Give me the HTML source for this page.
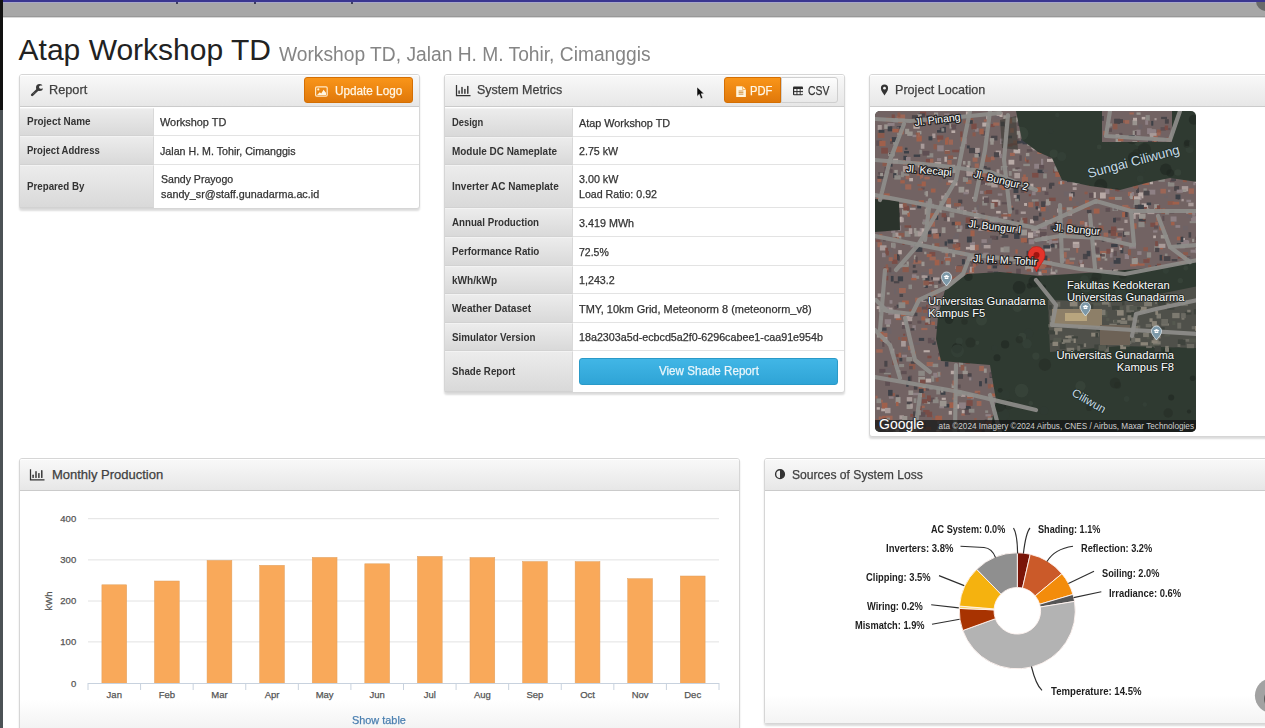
<!DOCTYPE html>
<html><head><meta charset="utf-8"><style>
html,body{margin:0;padding:0;width:1265px;height:728px;overflow:hidden;background:#fff;font-family:"Liberation Sans",sans-serif;}
body{position:relative}
.tx{position:absolute;white-space:nowrap;}
.pn{position:absolute;box-sizing:border-box;border:1px solid #d6d6d6;border-radius:3px;background:#fff;box-shadow:0 2px 2px rgba(0,0,0,0.14);}
.ph{position:absolute;box-sizing:border-box;border-top:1px solid #fff;border-bottom:1px solid #cbcbcb;background:linear-gradient(#f8f8f8,#e7e7e7);border-radius:2px 2px 0 0}
.lc{position:absolute;box-sizing:border-box;border-top:1px solid #f3f3f3;border-bottom:1px solid #d2d2d2;border-right:1px solid #d9d9d9;background:linear-gradient(#ececec,#d9d9d9)}
.obtn{position:absolute;box-sizing:border-box;border:1px solid #d46f04;border-radius:3px;background:linear-gradient(#f99519,#e0780a)}
.gbtn{position:absolute;box-sizing:border-box;border:1px solid #cfcfcf;background:linear-gradient(#fdfdfd,#e9e9e9)}
.bbtn{position:absolute;box-sizing:border-box;border:1px solid #2a9ac8;border-radius:3px;background:linear-gradient(#41b6e6,#2fa4d6)}
</style></head><body>
<div style="position:absolute;left:0;top:0;width:1265px;height:2px;background:#3a3690"></div>
<div style="position:absolute;left:0;top:2px;width:1265px;height:1px;background:#a9a8c8"></div>
<div style="position:absolute;left:0;top:3px;width:1265px;height:13px;background:#a7a7a7"></div>
<div style="position:absolute;left:0;top:16px;width:1265px;height:1px;background:#989898"></div>
<div style="position:absolute;left:1256px;top:-9px;width:20px;height:20px;border-radius:50%;background:#6a6b6a"></div>
<div style="position:absolute;left:0;top:0;width:1265px;height:2px;background:#3a3690"></div>
<div style="position:absolute;left:0;top:17px;width:1265px;height:1px;background:#d8d8d8"></div>
<div style="position:absolute;left:176px;top:2px;width:2px;height:2px;background:#1a1a40;border-radius:1px"></div>
<div style="position:absolute;left:254px;top:2px;width:2px;height:2px;background:#1a1a40;border-radius:1px"></div>
<div style="position:absolute;left:351px;top:2px;width:2px;height:2px;background:#1a1a40;border-radius:1px"></div>
<div style="position:absolute;left:0;top:0;width:3px;height:110px;background:#111"></div>
<div style="position:absolute;left:0;top:110px;width:3px;height:618px;background:#4c5256"></div>
<div class="pn" style="left:19px;top:74px;width:401px;height:135px"></div>
<div class="ph" style="left:20px;top:75px;width:399px;height:32px"></div>
<div class="obtn" style="left:304px;top:77px;width:109px;height:26px"></div>
<div class="lc" style="left:20px;top:108px;width:134px;height:28px"></div>
<div style="position:absolute;left:154px;top:135px;width:265px;height:1px;background:#e3e3e3"></div>
<div class="lc" style="left:20px;top:136px;width:134px;height:29px"></div>
<div style="position:absolute;left:154px;top:164px;width:265px;height:1px;background:#e3e3e3"></div>
<div class="lc" style="left:20px;top:165px;width:134px;height:43px"></div>
<div class="pn" style="left:444px;top:74px;width:401px;height:319px"></div>
<div class="ph" style="left:445px;top:75px;width:399px;height:32px"></div>
<div class="obtn" style="left:724px;top:77px;width:57px;height:26px;border-radius:3px 0 0 3px"></div>
<div class="gbtn" style="left:781px;top:77px;width:57px;height:26px;border-radius:0 3px 3px 0"></div>
<div class="lc" style="left:445px;top:108px;width:128px;height:29px"></div>
<div style="position:absolute;left:573px;top:136px;width:271px;height:1px;background:#e3e3e3"></div>
<div class="lc" style="left:445px;top:137px;width:128px;height:28px"></div>
<div style="position:absolute;left:573px;top:164px;width:271px;height:1px;background:#e3e3e3"></div>
<div class="lc" style="left:445px;top:165px;width:128px;height:43px"></div>
<div style="position:absolute;left:573px;top:207px;width:271px;height:1px;background:#e3e3e3"></div>
<div class="lc" style="left:445px;top:208px;width:128px;height:29px"></div>
<div style="position:absolute;left:573px;top:236px;width:271px;height:1px;background:#e3e3e3"></div>
<div class="lc" style="left:445px;top:237px;width:128px;height:29px"></div>
<div style="position:absolute;left:573px;top:265px;width:271px;height:1px;background:#e3e3e3"></div>
<div class="lc" style="left:445px;top:266px;width:128px;height:28px"></div>
<div style="position:absolute;left:573px;top:293px;width:271px;height:1px;background:#e3e3e3"></div>
<div class="lc" style="left:445px;top:294px;width:128px;height:29px"></div>
<div style="position:absolute;left:573px;top:322px;width:271px;height:1px;background:#e3e3e3"></div>
<div class="lc" style="left:445px;top:323px;width:128px;height:28px"></div>
<div style="position:absolute;left:573px;top:350px;width:271px;height:1px;background:#e3e3e3"></div>
<div class="lc" style="left:445px;top:351px;width:128px;height:41px"></div>
<div class="bbtn" style="left:579px;top:358px;width:259px;height:27px"></div>
<div class="pn" style="left:869px;top:74px;width:420px;height:363px"></div>
<div class="ph" style="left:870px;top:75px;width:418px;height:32px"></div>
<svg style="position:absolute;left:875px;top:111px" width="321" height="321" viewBox="875 111 321 321"><defs><clipPath id="mc"><rect x="875" y="111" width="321" height="321" rx="5"/></clipPath><filter id="bl" x="0" y="0" width="1" height="1"><feGaussianBlur stdDeviation="0.6"/></filter><clipPath id="rc"><polygon points="875,111 1016,111 1022,140 1038,152 1052,158 1062,180 1090,186 1120,190 1150,182 1170,178 1198,182 1198,262 1150,268 1100,272 1040,276 1000,272 967,274 945,290 938,316 936,339 941,361 990,365 996,400 990,432 875,432"/><polygon points="1102,111 1172,111 1172,142 1102,142"/></clipPath></defs><g clip-path="url(#mc)"><rect x="875" y="111" width="321" height="321" fill="#2f3a31"/><circle cx="979.0" cy="159.4" r="5.3" fill="#262d27" opacity="0.6"/><circle cx="1138.6" cy="141.2" r="4.9" fill="#3c473d" opacity="0.6"/><circle cx="943.9" cy="138.6" r="4.1" fill="#313b33" opacity="0.6"/><circle cx="904.1" cy="247.3" r="6.1" fill="#262d27" opacity="0.6"/><circle cx="1179.1" cy="313.4" r="4.9" fill="#262d27" opacity="0.6"/><circle cx="1060.3" cy="238.3" r="6.9" fill="#262d27" opacity="0.6"/><circle cx="1053.7" cy="153.7" r="4.1" fill="#3c473d" opacity="0.6"/><circle cx="912.8" cy="210.0" r="6.1" fill="#313b33" opacity="0.6"/><circle cx="908.1" cy="294.4" r="2.9" fill="#262d27" opacity="0.6"/><circle cx="1050.8" cy="131.2" r="2.3" fill="#313b33" opacity="0.6"/><circle cx="1034.3" cy="281.7" r="5.9" fill="#1f2621" opacity="0.6"/><circle cx="1063.0" cy="256.5" r="3.5" fill="#313b33" opacity="0.6"/><circle cx="1099.4" cy="189.4" r="4.9" fill="#3c473d" opacity="0.6"/><circle cx="1033.9" cy="221.3" r="4.2" fill="#3c473d" opacity="0.6"/><circle cx="1189.6" cy="148.9" r="4.1" fill="#37433a" opacity="0.6"/><circle cx="923.8" cy="268.0" r="2.2" fill="#262d27" opacity="0.6"/><circle cx="1120.4" cy="294.9" r="6.4" fill="#37433a" opacity="0.6"/><circle cx="984.2" cy="223.4" r="4.5" fill="#1f2621" opacity="0.6"/><circle cx="897.1" cy="141.0" r="3.3" fill="#262d27" opacity="0.6"/><circle cx="894.5" cy="336.2" r="5.2" fill="#1f2621" opacity="0.6"/><circle cx="966.4" cy="234.8" r="5.3" fill="#262d27" opacity="0.6"/><circle cx="1176.9" cy="225.1" r="5.1" fill="#1f2621" opacity="0.6"/><circle cx="893.9" cy="357.6" r="2.6" fill="#313b33" opacity="0.6"/><circle cx="1002.7" cy="405.3" r="4.5" fill="#313b33" opacity="0.6"/><circle cx="1019.2" cy="287.4" r="6.4" fill="#1f2621" opacity="0.6"/><circle cx="1152.3" cy="200.4" r="4.1" fill="#37433a" opacity="0.6"/><circle cx="1094.2" cy="233.1" r="3.2" fill="#262d27" opacity="0.6"/><circle cx="931.6" cy="185.5" r="3.2" fill="#1f2621" opacity="0.6"/><circle cx="1141.8" cy="169.5" r="3.4" fill="#313b33" opacity="0.6"/><circle cx="1009.5" cy="229.5" r="4.8" fill="#313b33" opacity="0.6"/><circle cx="1096.6" cy="276.5" r="5.1" fill="#262d27" opacity="0.6"/><circle cx="1021.6" cy="390.6" r="6.8" fill="#3c473d" opacity="0.6"/><circle cx="1001.0" cy="239.1" r="2.5" fill="#1f2621" opacity="0.6"/><circle cx="895.0" cy="132.6" r="3.0" fill="#313b33" opacity="0.6"/><circle cx="910.3" cy="303.8" r="2.5" fill="#3c473d" opacity="0.6"/><circle cx="923.6" cy="143.6" r="3.8" fill="#262d27" opacity="0.6"/><circle cx="897.6" cy="177.8" r="3.9" fill="#37433a" opacity="0.6"/><circle cx="1181.7" cy="304.3" r="4.4" fill="#262d27" opacity="0.6"/><circle cx="1147.5" cy="429.8" r="4.3" fill="#1f2621" opacity="0.6"/><circle cx="975.1" cy="157.3" r="5.7" fill="#37433a" opacity="0.6"/><circle cx="1028.6" cy="333.2" r="4.6" fill="#313b33" opacity="0.6"/><circle cx="1180.3" cy="280.6" r="2.7" fill="#3c473d" opacity="0.6"/><circle cx="1168.4" cy="354.4" r="3.5" fill="#262d27" opacity="0.6"/><circle cx="1098.5" cy="194.8" r="3.8" fill="#313b33" opacity="0.6"/><circle cx="989.2" cy="182.5" r="4.7" fill="#3c473d" opacity="0.6"/><circle cx="980.8" cy="182.6" r="6.1" fill="#313b33" opacity="0.6"/><circle cx="1133.8" cy="373.7" r="5.7" fill="#313b33" opacity="0.6"/><circle cx="939.2" cy="269.2" r="5.7" fill="#262d27" opacity="0.6"/><circle cx="1128.6" cy="262.6" r="3.0" fill="#3c473d" opacity="0.6"/><circle cx="1182.0" cy="254.6" r="6.7" fill="#37433a" opacity="0.6"/><circle cx="1181.6" cy="228.0" r="3.1" fill="#313b33" opacity="0.6"/><circle cx="1025.9" cy="219.4" r="4.4" fill="#3c473d" opacity="0.6"/><circle cx="1144.8" cy="264.9" r="5.3" fill="#262d27" opacity="0.6"/><circle cx="1142.9" cy="149.5" r="3.9" fill="#313b33" opacity="0.6"/><circle cx="1028.4" cy="168.3" r="5.9" fill="#37433a" opacity="0.6"/><circle cx="902.8" cy="414.7" r="5.6" fill="#1f2621" opacity="0.6"/><circle cx="1003.8" cy="414.9" r="5.6" fill="#313b33" opacity="0.6"/><circle cx="1193.8" cy="119.8" r="5.0" fill="#1f2621" opacity="0.6"/><circle cx="1133.9" cy="157.9" r="6.1" fill="#1f2621" opacity="0.6"/><circle cx="1086.0" cy="223.5" r="4.7" fill="#313b33" opacity="0.6"/><circle cx="881.9" cy="367.6" r="5.6" fill="#262d27" opacity="0.6"/><circle cx="1044.0" cy="410.7" r="4.2" fill="#313b33" opacity="0.6"/><circle cx="1140.2" cy="178.7" r="3.3" fill="#37433a" opacity="0.6"/><circle cx="1035.9" cy="356.1" r="3.6" fill="#3c473d" opacity="0.6"/><circle cx="1009.5" cy="153.1" r="6.6" fill="#37433a" opacity="0.6"/><circle cx="1163.2" cy="323.7" r="6.1" fill="#3c473d" opacity="0.6"/><circle cx="1010.0" cy="405.6" r="4.5" fill="#3c473d" opacity="0.6"/><circle cx="923.7" cy="274.9" r="6.4" fill="#313b33" opacity="0.6"/><circle cx="1070.3" cy="360.1" r="2.7" fill="#313b33" opacity="0.6"/><circle cx="1027.0" cy="343.8" r="4.8" fill="#37433a" opacity="0.6"/><circle cx="1094.0" cy="281.4" r="4.4" fill="#262d27" opacity="0.6"/><circle cx="1158.5" cy="129.2" r="3.0" fill="#262d27" opacity="0.6"/><circle cx="1122.9" cy="274.0" r="4.8" fill="#262d27" opacity="0.6"/><circle cx="1017.3" cy="307.6" r="4.5" fill="#3c473d" opacity="0.6"/><circle cx="939.0" cy="200.0" r="4.5" fill="#1f2621" opacity="0.6"/><circle cx="1038.0" cy="190.5" r="4.6" fill="#37433a" opacity="0.6"/><circle cx="1171.2" cy="397.6" r="3.0" fill="#1f2621" opacity="0.6"/><circle cx="919.0" cy="150.0" r="4.2" fill="#262d27" opacity="0.6"/><circle cx="1090.4" cy="248.5" r="3.1" fill="#37433a" opacity="0.6"/><circle cx="1126.6" cy="398.9" r="2.8" fill="#37433a" opacity="0.6"/><circle cx="920.9" cy="394.4" r="6.8" fill="#313b33" opacity="0.6"/><circle cx="1114.7" cy="141.2" r="6.4" fill="#313b33" opacity="0.6"/><circle cx="1192.7" cy="378.2" r="2.8" fill="#1f2621" opacity="0.6"/><circle cx="1194.1" cy="240.6" r="4.1" fill="#37433a" opacity="0.6"/><circle cx="977.2" cy="342.8" r="2.1" fill="#3c473d" opacity="0.6"/><circle cx="1022.2" cy="336.7" r="3.9" fill="#3c473d" opacity="0.6"/><circle cx="1075.3" cy="275.4" r="2.3" fill="#313b33" opacity="0.6"/><circle cx="1186.9" cy="144.6" r="3.3" fill="#262d27" opacity="0.6"/><circle cx="1165.8" cy="169.3" r="5.8" fill="#1f2621" opacity="0.6"/><circle cx="1147.7" cy="328.0" r="6.7" fill="#1f2621" opacity="0.6"/><circle cx="922.9" cy="406.1" r="4.9" fill="#37433a" opacity="0.6"/><circle cx="903.7" cy="129.5" r="5.4" fill="#1f2621" opacity="0.6"/><circle cx="1162.4" cy="197.3" r="2.1" fill="#262d27" opacity="0.6"/><circle cx="1132.3" cy="137.9" r="6.3" fill="#262d27" opacity="0.6"/><circle cx="959.9" cy="150.1" r="2.1" fill="#3c473d" opacity="0.6"/><circle cx="1009.1" cy="404.9" r="5.1" fill="#262d27" opacity="0.6"/><circle cx="1044.1" cy="187.5" r="2.5" fill="#313b33" opacity="0.6"/><circle cx="959.1" cy="169.1" r="6.7" fill="#37433a" opacity="0.6"/><circle cx="1045.5" cy="177.1" r="4.2" fill="#313b33" opacity="0.6"/><circle cx="961.8" cy="369.0" r="7.0" fill="#262d27" opacity="0.6"/><circle cx="879.9" cy="346.3" r="4.8" fill="#313b33" opacity="0.6"/><circle cx="1040.1" cy="189.9" r="4.2" fill="#1f2621" opacity="0.6"/><circle cx="1085.7" cy="286.2" r="6.4" fill="#3c473d" opacity="0.6"/><circle cx="973.8" cy="180.1" r="3.1" fill="#313b33" opacity="0.6"/><circle cx="1142.2" cy="337.9" r="5.2" fill="#1f2621" opacity="0.6"/><circle cx="1192.6" cy="426.2" r="6.2" fill="#262d27" opacity="0.6"/><circle cx="897.7" cy="348.8" r="3.3" fill="#313b33" opacity="0.6"/><circle cx="892.8" cy="324.5" r="3.9" fill="#3c473d" opacity="0.6"/><circle cx="1090.2" cy="201.5" r="3.2" fill="#37433a" opacity="0.6"/><circle cx="889.5" cy="170.5" r="3.3" fill="#262d27" opacity="0.6"/><circle cx="959.5" cy="419.7" r="6.9" fill="#3c473d" opacity="0.6"/><circle cx="978.9" cy="122.1" r="6.4" fill="#313b33" opacity="0.6"/><circle cx="989.5" cy="111.3" r="3.9" fill="#1f2621" opacity="0.6"/><circle cx="964.5" cy="321.6" r="3.2" fill="#262d27" opacity="0.6"/><circle cx="904.2" cy="373.3" r="2.7" fill="#3c473d" opacity="0.6"/><circle cx="888.4" cy="118.2" r="3.5" fill="#313b33" opacity="0.6"/><circle cx="902.1" cy="418.4" r="6.3" fill="#313b33" opacity="0.6"/><circle cx="1086.1" cy="340.8" r="6.4" fill="#1f2621" opacity="0.6"/><circle cx="1120.3" cy="342.3" r="4.5" fill="#37433a" opacity="0.6"/><circle cx="1107.5" cy="317.5" r="2.2" fill="#3c473d" opacity="0.6"/><circle cx="1076.4" cy="346.6" r="6.1" fill="#313b33" opacity="0.6"/><circle cx="1167.1" cy="352.7" r="4.8" fill="#262d27" opacity="0.6"/><circle cx="1140.3" cy="298.5" r="6.5" fill="#313b33" opacity="0.6"/><circle cx="902.3" cy="124.4" r="5.2" fill="#262d27" opacity="0.6"/><circle cx="995.9" cy="255.9" r="2.3" fill="#262d27" opacity="0.6"/><circle cx="1076.0" cy="329.5" r="4.4" fill="#262d27" opacity="0.6"/><circle cx="1021.7" cy="133.5" r="6.7" fill="#3c473d" opacity="0.6"/><circle cx="904.5" cy="279.8" r="5.7" fill="#1f2621" opacity="0.6"/><circle cx="956.0" cy="134.9" r="3.3" fill="#313b33" opacity="0.6"/><circle cx="949.1" cy="319.6" r="4.3" fill="#1f2621" opacity="0.6"/><circle cx="899.6" cy="403.3" r="3.4" fill="#262d27" opacity="0.6"/><circle cx="1073.0" cy="317.3" r="2.4" fill="#313b33" opacity="0.6"/><circle cx="981.5" cy="320.1" r="5.5" fill="#3c473d" opacity="0.6"/><circle cx="1057.3" cy="115.0" r="2.3" fill="#37433a" opacity="0.6"/><circle cx="1187.2" cy="142.9" r="3.1" fill="#1f2621" opacity="0.6"/><circle cx="968.4" cy="276.8" r="4.3" fill="#1f2621" opacity="0.6"/><circle cx="1121.3" cy="429.8" r="4.7" fill="#37433a" opacity="0.6"/><circle cx="1189.0" cy="411.5" r="2.1" fill="#1f2621" opacity="0.6"/><circle cx="899.5" cy="273.6" r="7.0" fill="#37433a" opacity="0.6"/><circle cx="999.2" cy="405.2" r="6.7" fill="#262d27" opacity="0.6"/><circle cx="1061.7" cy="156.5" r="4.6" fill="#37433a" opacity="0.6"/><circle cx="917.6" cy="374.3" r="4.5" fill="#262d27" opacity="0.6"/><circle cx="1100.8" cy="185.3" r="6.5" fill="#1f2621" opacity="0.6"/><circle cx="1001.5" cy="162.1" r="6.7" fill="#1f2621" opacity="0.6"/><circle cx="1005.1" cy="344.4" r="4.1" fill="#1f2621" opacity="0.6"/><circle cx="976.5" cy="380.7" r="2.0" fill="#37433a" opacity="0.6"/><circle cx="1144.4" cy="149.5" r="6.6" fill="#262d27" opacity="0.6"/><circle cx="1164.4" cy="204.0" r="3.9" fill="#1f2621" opacity="0.6"/><circle cx="1000.2" cy="390.3" r="2.4" fill="#1f2621" opacity="0.6"/><circle cx="1117.6" cy="385.2" r="3.4" fill="#262d27" opacity="0.6"/><circle cx="1142.9" cy="202.7" r="6.7" fill="#313b33" opacity="0.6"/><circle cx="1186.7" cy="251.0" r="3.6" fill="#37433a" opacity="0.6"/><circle cx="1127.0" cy="248.3" r="2.1" fill="#1f2621" opacity="0.6"/><circle cx="1168.2" cy="413.0" r="4.7" fill="#262d27" opacity="0.6"/><circle cx="890.9" cy="346.1" r="4.3" fill="#313b33" opacity="0.6"/><circle cx="1081.9" cy="202.9" r="2.2" fill="#3c473d" opacity="0.6"/><circle cx="915.9" cy="262.6" r="3.7" fill="#37433a" opacity="0.6"/><circle cx="957.1" cy="348.1" r="5.3" fill="#1f2621" opacity="0.6"/><circle cx="1085.6" cy="207.6" r="4.8" fill="#1f2621" opacity="0.6"/><circle cx="913.4" cy="317.5" r="2.4" fill="#3c473d" opacity="0.6"/><circle cx="1165.8" cy="270.6" r="3.1" fill="#37433a" opacity="0.6"/><circle cx="1194.9" cy="255.4" r="2.7" fill="#313b33" opacity="0.6"/><circle cx="953.4" cy="167.1" r="4.8" fill="#37433a" opacity="0.6"/><circle cx="951.8" cy="193.9" r="4.8" fill="#262d27" opacity="0.6"/><circle cx="1115.6" cy="243.5" r="4.1" fill="#3c473d" opacity="0.6"/><circle cx="942.4" cy="197.7" r="5.8" fill="#1f2621" opacity="0.6"/><circle cx="964.1" cy="421.6" r="2.6" fill="#3c473d" opacity="0.6"/><circle cx="1044.9" cy="364.7" r="6.2" fill="#262d27" opacity="0.6"/><circle cx="962.0" cy="190.8" r="4.0" fill="#1f2621" opacity="0.6"/><circle cx="1013.6" cy="211.2" r="6.1" fill="#262d27" opacity="0.6"/><circle cx="915.8" cy="247.5" r="5.8" fill="#1f2621" opacity="0.6"/><circle cx="1185.8" cy="268.2" r="2.4" fill="#3c473d" opacity="0.6"/><circle cx="1149.6" cy="423.1" r="3.2" fill="#262d27" opacity="0.6"/><circle cx="946.8" cy="159.8" r="6.9" fill="#262d27" opacity="0.6"/><circle cx="1177.2" cy="342.7" r="5.2" fill="#1f2621" opacity="0.6"/><circle cx="902.3" cy="360.4" r="2.0" fill="#313b33" opacity="0.6"/><circle cx="949.7" cy="406.3" r="5.2" fill="#37433a" opacity="0.6"/><circle cx="1183.9" cy="312.1" r="4.6" fill="#1f2621" opacity="0.6"/><circle cx="1099.2" cy="147.0" r="2.4" fill="#3c473d" opacity="0.6"/><circle cx="1177.9" cy="172.5" r="3.3" fill="#3c473d" opacity="0.6"/><circle cx="875.4" cy="283.5" r="7.0" fill="#37433a" opacity="0.6"/><circle cx="1182.8" cy="317.9" r="6.4" fill="#1f2621" opacity="0.6"/><circle cx="1043.9" cy="286.6" r="2.1" fill="#1f2621" opacity="0.6"/><circle cx="1101.2" cy="209.7" r="2.1" fill="#1f2621" opacity="0.6"/><circle cx="1159.0" cy="318.7" r="2.4" fill="#313b33" opacity="0.6"/><circle cx="1089.2" cy="408.0" r="3.1" fill="#262d27" opacity="0.6"/><circle cx="1098.4" cy="341.6" r="3.8" fill="#1f2621" opacity="0.6"/><circle cx="938.6" cy="366.9" r="5.7" fill="#3c473d" opacity="0.6"/><circle cx="896.6" cy="270.1" r="3.0" fill="#313b33" opacity="0.6"/><circle cx="949.1" cy="182.1" r="5.8" fill="#37433a" opacity="0.6"/><circle cx="910.0" cy="311.2" r="5.1" fill="#313b33" opacity="0.6"/><circle cx="1030.7" cy="403.2" r="2.3" fill="#3c473d" opacity="0.6"/><circle cx="922.0" cy="237.3" r="3.1" fill="#3c473d" opacity="0.6"/><circle cx="920.6" cy="127.6" r="2.3" fill="#1f2621" opacity="0.6"/><circle cx="1019.3" cy="339.6" r="3.6" fill="#262d27" opacity="0.6"/><circle cx="1195.2" cy="410.0" r="3.6" fill="#313b33" opacity="0.6"/><circle cx="1084.4" cy="279.5" r="4.3" fill="#37433a" opacity="0.6"/><circle cx="1088.3" cy="232.5" r="3.9" fill="#37433a" opacity="0.6"/><circle cx="1017.0" cy="146.0" r="2.4" fill="#262d27" opacity="0.6"/><circle cx="987.8" cy="417.7" r="2.6" fill="#313b33" opacity="0.6"/><circle cx="997.0" cy="357.8" r="3.5" fill="#1f2621" opacity="0.6"/><circle cx="903.2" cy="337.4" r="3.0" fill="#3c473d" opacity="0.6"/><circle cx="1170.2" cy="173.0" r="3.8" fill="#1f2621" opacity="0.6"/><circle cx="884.7" cy="242.9" r="6.1" fill="#1f2621" opacity="0.6"/><circle cx="888.0" cy="122.2" r="2.3" fill="#262d27" opacity="0.6"/><circle cx="957.5" cy="350.9" r="6.5" fill="#37433a" opacity="0.6"/><circle cx="991.5" cy="218.5" r="6.8" fill="#262d27" opacity="0.6"/><circle cx="959.2" cy="341.0" r="3.6" fill="#37433a" opacity="0.6"/><circle cx="970.5" cy="342.6" r="5.0" fill="#262d27" opacity="0.6"/><circle cx="882.8" cy="186.1" r="4.4" fill="#1f2621" opacity="0.6"/><circle cx="1181.2" cy="235.1" r="3.3" fill="#1f2621" opacity="0.6"/><circle cx="1136.6" cy="153.6" r="4.5" fill="#262d27" opacity="0.6"/><circle cx="1132.6" cy="348.1" r="6.1" fill="#313b33" opacity="0.6"/><circle cx="1069.9" cy="216.2" r="3.6" fill="#37433a" opacity="0.6"/><circle cx="1126.6" cy="302.2" r="4.6" fill="#1f2621" opacity="0.6"/><circle cx="1116.7" cy="190.4" r="2.3" fill="#262d27" opacity="0.6"/><circle cx="1029.6" cy="285.8" r="2.8" fill="#1f2621" opacity="0.6"/><circle cx="1158.6" cy="428.1" r="3.3" fill="#262d27" opacity="0.6"/><circle cx="941.9" cy="246.2" r="6.9" fill="#1f2621" opacity="0.6"/><circle cx="930.6" cy="153.7" r="4.3" fill="#313b33" opacity="0.6"/><circle cx="1115.1" cy="382.9" r="5.3" fill="#262d27" opacity="0.6"/><circle cx="1125.3" cy="205.3" r="3.4" fill="#37433a" opacity="0.6"/><circle cx="994.7" cy="347.9" r="3.0" fill="#313b33" opacity="0.6"/><circle cx="934.6" cy="186.6" r="3.4" fill="#3c473d" opacity="0.6"/><circle cx="935.4" cy="131.8" r="3.3" fill="#313b33" opacity="0.6"/><circle cx="1037.9" cy="185.3" r="6.0" fill="#1f2621" opacity="0.6"/><circle cx="1193.1" cy="143.8" r="4.4" fill="#313b33" opacity="0.6"/><circle cx="1144.8" cy="404.5" r="2.2" fill="#37433a" opacity="0.6"/><circle cx="949.8" cy="127.2" r="5.0" fill="#3c473d" opacity="0.6"/><circle cx="937.3" cy="135.1" r="4.6" fill="#313b33" opacity="0.6"/><circle cx="1019.2" cy="194.4" r="5.9" fill="#262d27" opacity="0.6"/><circle cx="909.0" cy="302.4" r="5.1" fill="#313b33" opacity="0.6"/><circle cx="887.0" cy="220.1" r="2.2" fill="#37433a" opacity="0.6"/><circle cx="887.3" cy="346.0" r="6.6" fill="#262d27" opacity="0.6"/><circle cx="1137.8" cy="242.3" r="3.9" fill="#3c473d" opacity="0.6"/><circle cx="975.2" cy="176.3" r="6.0" fill="#3c473d" opacity="0.6"/><circle cx="1030.2" cy="242.0" r="6.0" fill="#3c473d" opacity="0.6"/><circle cx="924.6" cy="282.4" r="5.3" fill="#1f2621" opacity="0.6"/><circle cx="1098.2" cy="242.5" r="3.4" fill="#37433a" opacity="0.6"/><circle cx="1009.1" cy="127.5" r="5.7" fill="#37433a" opacity="0.6"/><circle cx="1007.9" cy="116.8" r="5.8" fill="#37433a" opacity="0.6"/><circle cx="1081.9" cy="236.4" r="4.0" fill="#262d27" opacity="0.6"/><circle cx="1014.4" cy="161.3" r="2.6" fill="#262d27" opacity="0.6"/><circle cx="1005.4" cy="394.4" r="4.3" fill="#313b33" opacity="0.6"/><circle cx="916.7" cy="127.6" r="2.7" fill="#1f2621" opacity="0.6"/><circle cx="903.6" cy="310.7" r="3.9" fill="#3c473d" opacity="0.6"/><circle cx="930.1" cy="222.7" r="2.8" fill="#313b33" opacity="0.6"/><circle cx="1172.1" cy="145.9" r="4.5" fill="#313b33" opacity="0.6"/><circle cx="971.8" cy="379.8" r="2.2" fill="#1f2621" opacity="0.6"/><circle cx="976.0" cy="306.1" r="5.2" fill="#262d27" opacity="0.6"/><circle cx="1165.3" cy="310.1" r="6.1" fill="#313b33" opacity="0.6"/><circle cx="1080.5" cy="386.0" r="5.1" fill="#3c473d" opacity="0.6"/><circle cx="1146.7" cy="377.2" r="2.9" fill="#313b33" opacity="0.6"/><circle cx="888.4" cy="412.3" r="2.8" fill="#37433a" opacity="0.6"/><circle cx="914.5" cy="190.3" r="5.6" fill="#313b33" opacity="0.6"/><circle cx="888.2" cy="291.5" r="5.8" fill="#262d27" opacity="0.6"/><circle cx="1089.4" cy="215.1" r="3.9" fill="#1f2621" opacity="0.6"/><circle cx="1051.6" cy="312.3" r="3.5" fill="#1f2621" opacity="0.6"/><circle cx="973.9" cy="191.0" r="3.9" fill="#37433a" opacity="0.6"/><circle cx="1018.4" cy="251.7" r="2.1" fill="#3c473d" opacity="0.6"/><g clip-path="url(#rc)"><g filter="url(#bl)"><rect x="875" y="111" width="321" height="321" fill="#726464"/><rect x="1191.6" y="260.4" width="4.2" height="4.5" fill="#4a4448"/><rect x="1143.5" y="371.2" width="4.0" height="2.3" fill="#8e8084"/><rect x="1013.2" y="140.4" width="4.2" height="4.0" fill="#8a5a4e"/><rect x="888.0" y="152.8" width="6.6" height="3.3" fill="#9a948f"/><rect x="1039.2" y="128.4" width="4.5" height="3.5" fill="#8c8884"/><rect x="918.7" y="386.1" width="7.0" height="4.9" fill="#9c6656"/><rect x="937.2" y="426.1" width="4.5" height="5.8" fill="#8c8884"/><rect x="928.0" y="364.1" width="6.7" height="2.3" fill="#8e8084"/><rect x="1071.0" y="192.0" width="3.6" height="4.5" fill="#4a4448"/><rect x="921.1" y="272.2" width="6.6" height="2.8" fill="#6e6466"/><rect x="1072.7" y="187.2" width="3.9" height="2.8" fill="#a89a98"/><rect x="926.8" y="411.6" width="5.4" height="5.6" fill="#7a4e46"/><rect x="1129.3" y="195.9" width="5.8" height="2.2" fill="#8e8084"/><rect x="1185.1" y="256.4" width="4.6" height="4.8" fill="#9c6656"/><rect x="955.9" y="283.0" width="6.3" height="5.0" fill="#8e8084"/><rect x="960.0" y="428.9" width="4.9" height="3.4" fill="#8c8884"/><rect x="901.1" y="184.8" width="5.1" height="5.8" fill="#6e6466"/><rect x="1138.2" y="192.4" width="5.2" height="5.9" fill="#b8aaa6"/><rect x="1173.0" y="398.5" width="5.7" height="5.0" fill="#3e4046"/><rect x="922.9" y="308.8" width="4.2" height="4.1" fill="#8a5a4e"/><rect x="917.4" y="184.0" width="5.3" height="2.1" fill="#8a5a4e"/><rect x="1057.0" y="208.5" width="4.6" height="4.1" fill="#a89a98"/><rect x="1062.3" y="300.1" width="3.0" height="4.5" fill="#4a4448"/><rect x="925.9" y="115.5" width="6.0" height="4.8" fill="#4a4448"/><rect x="905.8" y="315.9" width="6.4" height="5.1" fill="#a89a98"/><rect x="1135.5" y="421.5" width="2.3" height="5.3" fill="#8e8084"/><rect x="1065.9" y="296.7" width="5.0" height="4.1" fill="#4a4448"/><rect x="954.8" y="401.0" width="2.2" height="4.1" fill="#a89a98"/><rect x="934.6" y="162.1" width="6.6" height="2.4" fill="#b8aaa6"/><rect x="1051.8" y="413.0" width="2.7" height="2.8" fill="#b8aaa6"/><rect x="1081.3" y="318.9" width="4.1" height="4.5" fill="#a0604c"/><rect x="974.3" y="207.4" width="2.2" height="5.6" fill="#8c8884"/><rect x="1028.4" y="283.8" width="3.9" height="3.7" fill="#4a4448"/><rect x="900.8" y="321.4" width="2.9" height="6.0" fill="#6e6466"/><rect x="949.6" y="123.5" width="3.7" height="5.0" fill="#9a948f"/><rect x="1177.7" y="195.5" width="2.3" height="4.5" fill="#5e5052"/><rect x="1015.0" y="364.1" width="4.6" height="3.1" fill="#5e5052"/><rect x="1173.1" y="398.0" width="2.4" height="4.0" fill="#7a4e46"/><rect x="958.6" y="186.8" width="5.7" height="5.8" fill="#9a948f"/><rect x="1168.7" y="172.6" width="3.9" height="4.4" fill="#a89a98"/><rect x="1166.3" y="313.5" width="5.5" height="4.7" fill="#a0604c"/><rect x="1025.7" y="380.5" width="5.5" height="5.4" fill="#a89a98"/><rect x="1181.8" y="186.1" width="6.4" height="5.2" fill="#a89a98"/><rect x="1074.9" y="136.0" width="6.6" height="2.6" fill="#8a5a4e"/><rect x="910.9" y="310.7" width="2.8" height="5.9" fill="#9a948f"/><rect x="884.2" y="124.4" width="5.5" height="4.5" fill="#9a948f"/><rect x="896.8" y="126.0" width="6.3" height="5.0" fill="#3e4046"/><rect x="1137.4" y="374.1" width="6.5" height="2.3" fill="#8c8884"/><rect x="1168.5" y="414.1" width="2.5" height="2.8" fill="#9c6656"/><rect x="885.9" y="415.7" width="6.6" height="5.0" fill="#9c6656"/><rect x="1139.8" y="313.7" width="3.4" height="2.4" fill="#9c6656"/><rect x="1129.2" y="318.5" width="3.5" height="3.3" fill="#6e6466"/><rect x="881.7" y="193.4" width="3.4" height="4.9" fill="#8e8084"/><rect x="1167.2" y="357.9" width="5.0" height="3.9" fill="#6e6466"/><rect x="1073.5" y="120.9" width="4.1" height="3.7" fill="#8c8884"/><rect x="906.6" y="261.5" width="2.2" height="4.3" fill="#9a948f"/><rect x="1151.8" y="140.2" width="6.1" height="2.7" fill="#8a5a4e"/><rect x="1043.1" y="203.6" width="5.8" height="2.2" fill="#8e8084"/><rect x="1032.6" y="268.8" width="6.0" height="2.7" fill="#4a4448"/><rect x="1065.2" y="418.3" width="4.6" height="4.3" fill="#7a4e46"/><rect x="966.1" y="179.9" width="5.5" height="4.0" fill="#9c6656"/><rect x="1176.3" y="357.1" width="4.5" height="6.0" fill="#a0604c"/><rect x="1127.6" y="312.6" width="3.8" height="3.6" fill="#a89a98"/><rect x="1161.3" y="350.2" width="4.1" height="4.6" fill="#8e8084"/><rect x="941.2" y="195.5" width="6.5" height="4.0" fill="#a89a98"/><rect x="1190.4" y="313.5" width="6.7" height="2.5" fill="#b8aaa6"/><rect x="1117.2" y="352.7" width="5.2" height="3.4" fill="#8e8084"/><rect x="1042.5" y="389.6" width="4.3" height="4.2" fill="#8e8084"/><rect x="929.4" y="251.9" width="5.9" height="4.3" fill="#7a4e46"/><rect x="982.2" y="317.3" width="5.5" height="4.0" fill="#6e6466"/><rect x="971.8" y="336.7" width="6.2" height="2.6" fill="#7a4e46"/><rect x="1187.9" y="343.1" width="5.0" height="3.4" fill="#3e4046"/><rect x="980.3" y="171.8" width="6.9" height="4.9" fill="#9c6656"/><rect x="927.8" y="322.2" width="3.0" height="2.6" fill="#7a4e46"/><rect x="1130.2" y="346.4" width="4.2" height="2.8" fill="#5e5052"/><rect x="1167.6" y="201.1" width="6.4" height="3.9" fill="#8a5a4e"/><rect x="1003.1" y="364.9" width="5.5" height="4.0" fill="#5e5052"/><rect x="970.1" y="118.1" width="3.3" height="5.0" fill="#8a5a4e"/><rect x="1112.8" y="402.5" width="4.2" height="4.3" fill="#9a948f"/><rect x="1082.8" y="382.6" width="5.3" height="4.6" fill="#8c8884"/><rect x="1081.0" y="298.4" width="3.1" height="2.7" fill="#9c6656"/><rect x="1020.7" y="211.5" width="5.1" height="2.4" fill="#a89a98"/><rect x="952.8" y="239.4" width="5.6" height="2.6" fill="#a89a98"/><rect x="1030.0" y="117.3" width="6.3" height="4.1" fill="#5e5052"/><rect x="1173.6" y="169.8" width="5.3" height="5.1" fill="#a89a98"/><rect x="1142.0" y="402.5" width="2.5" height="3.0" fill="#3e4046"/><rect x="926.6" y="362.0" width="6.7" height="4.1" fill="#9c6656"/><rect x="1146.9" y="257.6" width="3.0" height="3.9" fill="#8a5a4e"/><rect x="1080.2" y="377.1" width="4.6" height="3.6" fill="#4a4448"/><rect x="942.4" y="330.7" width="4.0" height="5.1" fill="#9c6656"/><rect x="1109.0" y="308.1" width="5.2" height="3.0" fill="#a89a98"/><rect x="1003.3" y="115.3" width="4.1" height="3.7" fill="#9a948f"/><rect x="1091.6" y="297.2" width="2.5" height="3.2" fill="#a89a98"/><rect x="1176.7" y="280.2" width="3.1" height="5.2" fill="#a89a98"/><rect x="1023.3" y="163.8" width="6.6" height="2.3" fill="#8c8884"/><rect x="1078.6" y="261.6" width="4.8" height="2.9" fill="#7a4e46"/><rect x="988.4" y="316.1" width="6.1" height="5.3" fill="#4a4448"/><rect x="1194.8" y="354.9" width="5.2" height="5.1" fill="#4a4448"/><rect x="988.9" y="384.1" width="3.3" height="3.5" fill="#6e6466"/><rect x="1190.5" y="328.9" width="4.4" height="5.2" fill="#8c8884"/><rect x="965.3" y="189.6" width="3.5" height="3.9" fill="#a89a98"/><rect x="1075.1" y="138.4" width="6.5" height="2.6" fill="#6e6466"/><rect x="1149.3" y="129.3" width="6.1" height="5.6" fill="#8c8884"/><rect x="1177.6" y="281.3" width="3.7" height="4.3" fill="#5e5052"/><rect x="878.7" y="416.5" width="5.3" height="3.0" fill="#9c6656"/><rect x="1060.7" y="385.2" width="2.9" height="3.8" fill="#8c8884"/><rect x="924.0" y="401.2" width="6.0" height="2.7" fill="#9a948f"/><rect x="1070.3" y="361.8" width="5.3" height="5.6" fill="#8c8884"/><rect x="1079.3" y="206.4" width="4.5" height="2.9" fill="#9c6656"/><rect x="1113.2" y="251.8" width="6.4" height="4.2" fill="#6e6466"/><rect x="1009.5" y="376.5" width="4.4" height="4.2" fill="#4a4448"/><rect x="1024.9" y="157.4" width="4.5" height="4.0" fill="#a0604c"/><rect x="1067.5" y="346.8" width="2.8" height="3.3" fill="#9a948f"/><rect x="1055.6" y="324.6" width="6.2" height="3.5" fill="#a89a98"/><rect x="1196.0" y="328.0" width="2.9" height="3.4" fill="#5e5052"/><rect x="884.2" y="306.7" width="5.4" height="5.7" fill="#8e8084"/><rect x="1134.6" y="141.2" width="4.4" height="5.0" fill="#7a4e46"/><rect x="885.9" y="341.5" width="5.1" height="3.4" fill="#5e5052"/><rect x="992.5" y="263.3" width="4.6" height="5.1" fill="#3e4046"/><rect x="966.2" y="220.8" width="3.3" height="2.2" fill="#6e6466"/><rect x="969.0" y="376.7" width="4.0" height="4.0" fill="#6e6466"/><rect x="1155.2" y="221.7" width="3.0" height="4.0" fill="#9c6656"/><rect x="981.2" y="212.8" width="3.5" height="4.3" fill="#5e5052"/><rect x="903.1" y="430.9" width="4.0" height="4.2" fill="#a89a98"/><rect x="1050.1" y="127.0" width="3.5" height="2.0" fill="#3e4046"/><rect x="1138.8" y="263.5" width="5.8" height="2.2" fill="#a0604c"/><rect x="1167.1" y="307.4" width="5.1" height="4.5" fill="#9a948f"/><rect x="1096.2" y="392.3" width="2.4" height="2.2" fill="#5e5052"/><rect x="1022.0" y="355.8" width="2.5" height="2.7" fill="#8a5a4e"/><rect x="1010.3" y="143.3" width="6.7" height="2.1" fill="#7a4e46"/><rect x="1127.5" y="291.4" width="3.3" height="3.2" fill="#a89a98"/><rect x="886.0" y="117.5" width="4.8" height="4.3" fill="#8a5a4e"/><rect x="1034.8" y="278.6" width="6.1" height="5.1" fill="#a89a98"/><rect x="1059.7" y="405.9" width="4.2" height="2.1" fill="#a89a98"/><rect x="1065.6" y="429.8" width="5.3" height="2.6" fill="#8c8884"/><rect x="1007.4" y="143.8" width="5.2" height="2.8" fill="#7a4e46"/><rect x="1076.2" y="248.1" width="2.0" height="4.7" fill="#9c6656"/><rect x="945.1" y="150.0" width="4.4" height="3.1" fill="#b8aaa6"/><rect x="952.8" y="346.5" width="2.9" height="2.2" fill="#8c8884"/><rect x="1114.9" y="334.0" width="2.7" height="5.0" fill="#6e6466"/><rect x="1076.8" y="338.7" width="4.3" height="5.7" fill="#6e6466"/><rect x="1168.2" y="127.9" width="2.2" height="2.2" fill="#5e5052"/><rect x="1095.4" y="309.4" width="3.9" height="3.2" fill="#b8aaa6"/><rect x="928.3" y="387.4" width="4.4" height="2.2" fill="#8e8084"/><rect x="1179.6" y="344.6" width="4.3" height="2.7" fill="#8c8884"/><rect x="912.5" y="417.2" width="2.8" height="5.2" fill="#4a4448"/><rect x="998.8" y="363.4" width="6.7" height="5.1" fill="#b8aaa6"/><rect x="982.2" y="200.9" width="5.1" height="4.6" fill="#8c8884"/><rect x="1140.6" y="217.6" width="5.0" height="5.9" fill="#7a4e46"/><rect x="1068.0" y="210.1" width="4.1" height="5.6" fill="#a89a98"/><rect x="999.3" y="231.8" width="5.9" height="2.9" fill="#4a4448"/><rect x="965.9" y="111.5" width="3.3" height="3.7" fill="#b8aaa6"/><rect x="1170.5" y="356.0" width="5.9" height="3.2" fill="#7a4e46"/><rect x="1135.6" y="389.4" width="4.9" height="3.1" fill="#8c8884"/><rect x="1134.1" y="330.8" width="6.6" height="3.4" fill="#9c6656"/><rect x="1048.3" y="266.6" width="3.9" height="5.2" fill="#9a948f"/><rect x="1174.1" y="186.1" width="5.0" height="4.7" fill="#4a4448"/><rect x="1102.4" y="408.2" width="4.9" height="2.0" fill="#a89a98"/><rect x="1022.6" y="139.2" width="6.0" height="5.1" fill="#3e4046"/><rect x="1002.8" y="278.3" width="3.3" height="5.3" fill="#8e8084"/><rect x="1028.0" y="300.2" width="2.9" height="2.8" fill="#7a4e46"/><rect x="1133.7" y="204.0" width="4.9" height="3.4" fill="#8c8884"/><rect x="1041.0" y="158.8" width="2.2" height="6.0" fill="#8e8084"/><rect x="1153.1" y="230.3" width="4.3" height="2.3" fill="#8e8084"/><rect x="1066.7" y="221.7" width="4.6" height="2.1" fill="#8a5a4e"/><rect x="940.7" y="390.5" width="4.8" height="4.3" fill="#3e4046"/><rect x="959.0" y="361.1" width="4.1" height="5.8" fill="#8c8884"/><rect x="1065.4" y="306.4" width="2.7" height="5.4" fill="#8e8084"/><rect x="939.5" y="169.0" width="2.4" height="2.2" fill="#a0604c"/><rect x="993.7" y="337.5" width="4.4" height="5.4" fill="#9c6656"/><rect x="1152.0" y="316.4" width="6.6" height="4.8" fill="#9c6656"/><rect x="957.6" y="292.2" width="5.2" height="5.8" fill="#5e5052"/><rect x="1037.6" y="169.6" width="6.2" height="3.5" fill="#3e4046"/><rect x="1193.3" y="182.2" width="2.2" height="3.0" fill="#8e8084"/><rect x="894.0" y="288.5" width="2.1" height="5.7" fill="#6e6466"/><rect x="1127.4" y="338.8" width="5.2" height="5.9" fill="#8a5a4e"/><rect x="907.4" y="213.0" width="2.0" height="2.8" fill="#9a948f"/><rect x="970.9" y="300.9" width="5.8" height="2.4" fill="#8e8084"/><rect x="994.3" y="236.2" width="3.9" height="3.5" fill="#4a4448"/><rect x="951.5" y="157.0" width="5.4" height="2.1" fill="#9a948f"/><rect x="1167.9" y="367.4" width="2.8" height="5.3" fill="#9c6656"/><rect x="1174.8" y="389.2" width="6.4" height="2.6" fill="#4a4448"/><rect x="1182.5" y="408.2" width="3.9" height="2.1" fill="#9c6656"/><rect x="1020.2" y="220.1" width="6.1" height="3.9" fill="#5e5052"/><rect x="992.5" y="217.6" width="5.7" height="2.7" fill="#4a4448"/><rect x="1052.6" y="157.5" width="6.4" height="3.1" fill="#a89a98"/><rect x="954.2" y="119.2" width="4.9" height="3.2" fill="#8c8884"/><rect x="928.9" y="268.6" width="3.6" height="5.6" fill="#9c6656"/><rect x="924.2" y="275.8" width="5.2" height="5.2" fill="#3e4046"/><rect x="1054.7" y="379.1" width="2.6" height="5.0" fill="#8e8084"/><rect x="1013.7" y="194.9" width="3.2" height="3.0" fill="#a89a98"/><rect x="967.9" y="398.7" width="2.3" height="4.9" fill="#6e6466"/><rect x="921.3" y="316.4" width="4.2" height="4.0" fill="#a0604c"/><rect x="920.0" y="111.6" width="6.2" height="4.1" fill="#7a4e46"/><rect x="990.6" y="124.0" width="4.0" height="3.1" fill="#7a4e46"/><rect x="919.3" y="168.8" width="5.9" height="4.8" fill="#3e4046"/><rect x="1067.8" y="377.1" width="6.4" height="4.9" fill="#8c8884"/><rect x="962.9" y="177.1" width="5.1" height="4.8" fill="#8c8884"/><rect x="936.7" y="209.9" width="2.1" height="4.8" fill="#a0604c"/><rect x="1006.0" y="342.7" width="2.3" height="5.2" fill="#8e8084"/><rect x="965.4" y="316.2" width="6.7" height="2.4" fill="#a89a98"/><rect x="1167.2" y="264.0" width="6.4" height="3.1" fill="#7a4e46"/><rect x="1055.8" y="427.4" width="2.2" height="4.8" fill="#b8aaa6"/><rect x="1066.0" y="112.5" width="4.6" height="3.8" fill="#a0604c"/><rect x="897.9" y="225.5" width="3.2" height="5.3" fill="#8e8084"/><rect x="1125.1" y="389.7" width="4.9" height="5.6" fill="#6e6466"/><rect x="1155.2" y="417.3" width="4.5" height="4.1" fill="#a0604c"/><rect x="1133.2" y="154.1" width="3.2" height="2.4" fill="#b8aaa6"/><rect x="933.5" y="144.0" width="3.3" height="5.3" fill="#8a5a4e"/><rect x="881.2" y="408.3" width="5.7" height="3.0" fill="#b8aaa6"/><rect x="1079.4" y="259.9" width="3.2" height="3.8" fill="#8e8084"/><rect x="1154.1" y="341.2" width="2.2" height="2.5" fill="#4a4448"/><rect x="1063.1" y="355.4" width="2.6" height="2.5" fill="#7a4e46"/><rect x="1048.9" y="184.0" width="3.1" height="4.7" fill="#4a4448"/><rect x="1114.7" y="163.7" width="6.1" height="5.8" fill="#a89a98"/><rect x="1097.7" y="302.6" width="5.0" height="2.1" fill="#8a5a4e"/><rect x="1124.4" y="219.7" width="3.2" height="3.3" fill="#a89a98"/><rect x="1145.6" y="292.2" width="6.9" height="3.3" fill="#a89a98"/><rect x="1147.1" y="128.2" width="4.6" height="5.8" fill="#8e8084"/><rect x="955.0" y="246.5" width="5.2" height="3.5" fill="#a0604c"/><rect x="935.2" y="215.1" width="3.0" height="4.7" fill="#3e4046"/><rect x="919.7" y="422.3" width="5.9" height="5.7" fill="#5e5052"/><rect x="890.0" y="425.6" width="6.9" height="2.2" fill="#5e5052"/><rect x="1074.3" y="405.7" width="5.1" height="4.5" fill="#8c8884"/><rect x="1171.7" y="310.4" width="3.3" height="4.1" fill="#a89a98"/><rect x="951.0" y="123.7" width="2.6" height="3.4" fill="#7a4e46"/><rect x="913.6" y="301.8" width="6.8" height="4.1" fill="#6e6466"/><rect x="902.1" y="300.5" width="6.7" height="3.8" fill="#a0604c"/><rect x="917.2" y="205.2" width="4.0" height="3.2" fill="#3e4046"/><rect x="1111.2" y="348.7" width="3.4" height="3.8" fill="#9a948f"/><rect x="1058.0" y="319.8" width="3.0" height="4.8" fill="#4a4448"/><rect x="1161.3" y="208.5" width="4.4" height="5.3" fill="#8a5a4e"/><rect x="952.8" y="182.1" width="4.6" height="3.5" fill="#b8aaa6"/><rect x="1002.3" y="407.7" width="2.8" height="5.8" fill="#8e8084"/><rect x="1053.7" y="268.7" width="3.4" height="6.0" fill="#6e6466"/><rect x="893.3" y="118.0" width="4.8" height="4.4" fill="#8e8084"/><rect x="1016.2" y="130.9" width="3.9" height="3.8" fill="#9a948f"/><rect x="1119.9" y="278.2" width="6.9" height="4.7" fill="#7a4e46"/><rect x="1008.8" y="325.5" width="2.7" height="2.8" fill="#b8aaa6"/><rect x="1147.8" y="374.6" width="4.6" height="5.0" fill="#9a948f"/><rect x="1171.0" y="430.6" width="3.3" height="4.5" fill="#5e5052"/><rect x="1168.6" y="151.9" width="6.4" height="2.0" fill="#8c8884"/><rect x="1051.5" y="148.7" width="4.0" height="6.0" fill="#7a4e46"/><rect x="1009.1" y="362.6" width="6.4" height="4.4" fill="#a89a98"/><rect x="1148.4" y="333.3" width="3.4" height="3.4" fill="#8e8084"/><rect x="1000.4" y="289.3" width="3.9" height="3.3" fill="#8c8884"/><rect x="1114.4" y="428.7" width="3.9" height="3.2" fill="#a0604c"/><rect x="972.6" y="157.5" width="4.9" height="4.3" fill="#9c6656"/><rect x="1138.7" y="217.0" width="6.8" height="4.4" fill="#3e4046"/><rect x="1182.8" y="176.6" width="4.1" height="5.6" fill="#8a5a4e"/><rect x="883.2" y="193.4" width="6.5" height="3.2" fill="#a0604c"/><rect x="1123.3" y="283.9" width="7.0" height="4.1" fill="#a0604c"/><rect x="1108.4" y="249.0" width="4.3" height="2.2" fill="#5e5052"/><rect x="987.7" y="415.3" width="5.4" height="4.1" fill="#9c6656"/><rect x="1006.5" y="271.8" width="5.2" height="5.7" fill="#7a4e46"/><rect x="1157.4" y="420.6" width="4.4" height="3.8" fill="#b8aaa6"/><rect x="1163.6" y="299.6" width="5.5" height="5.0" fill="#9c6656"/><rect x="929.8" y="213.1" width="6.9" height="5.3" fill="#a0604c"/><rect x="931.4" y="321.6" width="3.5" height="3.4" fill="#a0604c"/><rect x="1160.1" y="246.1" width="2.8" height="3.2" fill="#a0604c"/><rect x="941.7" y="397.7" width="4.1" height="2.2" fill="#b8aaa6"/><rect x="1068.6" y="224.4" width="7.0" height="4.5" fill="#8a5a4e"/><rect x="1097.0" y="114.4" width="2.0" height="4.8" fill="#a0604c"/><rect x="876.3" y="208.7" width="6.2" height="4.3" fill="#5e5052"/><rect x="884.5" y="167.2" width="5.8" height="4.3" fill="#5e5052"/><rect x="1162.5" y="276.1" width="2.7" height="2.8" fill="#b8aaa6"/><rect x="914.0" y="161.3" width="5.8" height="2.4" fill="#9c6656"/><rect x="899.4" y="415.3" width="4.5" height="3.9" fill="#a89a98"/><rect x="1133.9" y="130.9" width="2.1" height="5.1" fill="#8e8084"/><rect x="921.2" y="187.5" width="3.4" height="2.1" fill="#5e5052"/><rect x="906.9" y="401.1" width="4.9" height="3.4" fill="#4a4448"/><rect x="1075.3" y="117.3" width="3.1" height="3.6" fill="#8c8884"/><rect x="1183.0" y="252.1" width="5.1" height="3.0" fill="#8a5a4e"/><rect x="926.2" y="299.4" width="2.9" height="2.0" fill="#4a4448"/><rect x="972.5" y="304.4" width="6.8" height="4.0" fill="#9c6656"/><rect x="953.0" y="236.1" width="5.6" height="2.9" fill="#6e6466"/><rect x="1002.9" y="339.5" width="2.1" height="5.5" fill="#9c6656"/><rect x="930.7" y="226.0" width="2.9" height="5.9" fill="#6e6466"/><rect x="1002.1" y="227.5" width="3.7" height="5.5" fill="#8e8084"/><rect x="1004.4" y="132.0" width="2.6" height="5.3" fill="#8e8084"/><rect x="1052.8" y="235.3" width="4.3" height="3.4" fill="#a89a98"/><rect x="886.2" y="324.2" width="3.7" height="2.6" fill="#9a948f"/><rect x="916.7" y="174.0" width="4.7" height="5.1" fill="#a0604c"/><rect x="1017.3" y="379.5" width="6.0" height="2.6" fill="#8e8084"/><rect x="944.5" y="241.1" width="5.1" height="4.3" fill="#6e6466"/><rect x="1180.3" y="273.1" width="3.1" height="3.8" fill="#7a4e46"/><rect x="1177.4" y="431.3" width="5.0" height="3.8" fill="#8e8084"/><rect x="1046.6" y="240.7" width="4.6" height="2.5" fill="#8c8884"/><rect x="914.4" y="275.7" width="4.7" height="3.1" fill="#8c8884"/><rect x="1120.5" y="120.2" width="5.6" height="2.6" fill="#8a5a4e"/><rect x="1000.2" y="138.6" width="2.9" height="5.4" fill="#8e8084"/><rect x="935.4" y="397.1" width="2.3" height="5.7" fill="#8c8884"/><rect x="1035.6" y="206.3" width="2.3" height="3.2" fill="#3e4046"/><rect x="967.6" y="373.2" width="4.0" height="3.4" fill="#4a4448"/><rect x="1123.8" y="394.4" width="6.3" height="2.5" fill="#6e6466"/><rect x="931.6" y="228.7" width="6.0" height="4.8" fill="#a89a98"/><rect x="883.1" y="336.9" width="4.3" height="6.0" fill="#a89a98"/><rect x="988.0" y="312.9" width="2.9" height="2.5" fill="#b8aaa6"/><rect x="1110.6" y="339.7" width="2.2" height="2.2" fill="#7a4e46"/><rect x="1013.3" y="354.0" width="2.8" height="5.0" fill="#a0604c"/><rect x="974.8" y="315.9" width="2.9" height="5.4" fill="#b8aaa6"/><rect x="1034.8" y="278.2" width="6.6" height="4.7" fill="#b8aaa6"/><rect x="987.0" y="111.3" width="6.2" height="5.1" fill="#6e6466"/><rect x="1164.2" y="391.9" width="4.9" height="4.8" fill="#3e4046"/><rect x="1093.6" y="122.9" width="3.6" height="5.1" fill="#8e8084"/><rect x="1115.6" y="138.6" width="5.5" height="3.6" fill="#9a948f"/><rect x="1072.5" y="181.9" width="4.6" height="3.4" fill="#a89a98"/><rect x="1017.1" y="220.2" width="4.5" height="4.8" fill="#5e5052"/><rect x="1075.9" y="274.3" width="5.4" height="2.8" fill="#5e5052"/><rect x="1039.3" y="408.9" width="2.6" height="5.0" fill="#8a5a4e"/><rect x="1180.7" y="375.9" width="4.8" height="2.7" fill="#7a4e46"/><rect x="1186.2" y="315.6" width="4.7" height="3.0" fill="#8a5a4e"/><rect x="928.9" y="222.5" width="2.5" height="4.5" fill="#7a4e46"/><rect x="918.8" y="337.9" width="5.4" height="3.0" fill="#3e4046"/><rect x="876.9" y="333.0" width="2.7" height="4.6" fill="#9a948f"/><rect x="971.1" y="395.0" width="2.7" height="4.3" fill="#8e8084"/><rect x="1077.0" y="148.9" width="4.1" height="5.8" fill="#5e5052"/><rect x="1089.0" y="303.2" width="4.3" height="5.1" fill="#3e4046"/><rect x="911.7" y="203.9" width="3.8" height="2.8" fill="#8a5a4e"/><rect x="1162.6" y="208.6" width="2.6" height="3.2" fill="#9c6656"/><rect x="926.8" y="253.9" width="4.8" height="3.2" fill="#a0604c"/><rect x="898.1" y="114.5" width="7.0" height="5.0" fill="#9c6656"/><rect x="1114.9" y="217.5" width="5.7" height="3.1" fill="#5e5052"/><rect x="1031.9" y="250.4" width="2.9" height="4.2" fill="#8a5a4e"/><rect x="990.3" y="140.2" width="3.4" height="4.5" fill="#9a948f"/><rect x="1084.5" y="191.7" width="3.2" height="2.6" fill="#8a5a4e"/><rect x="883.1" y="237.9" width="2.7" height="3.5" fill="#5e5052"/><rect x="1043.7" y="398.5" width="5.4" height="2.4" fill="#9a948f"/><rect x="1141.6" y="349.3" width="3.6" height="2.7" fill="#8e8084"/><rect x="977.8" y="229.3" width="4.8" height="3.5" fill="#6e6466"/><rect x="951.8" y="124.2" width="4.8" height="4.5" fill="#9a948f"/><rect x="1004.4" y="127.2" width="3.1" height="3.7" fill="#9a948f"/><rect x="925.6" y="207.2" width="4.9" height="2.3" fill="#9a948f"/><rect x="948.0" y="155.4" width="5.2" height="3.6" fill="#8a5a4e"/><rect x="1148.1" y="264.9" width="3.1" height="3.5" fill="#8a5a4e"/><rect x="1144.9" y="385.6" width="5.9" height="3.7" fill="#6e6466"/><rect x="898.1" y="128.8" width="5.6" height="5.6" fill="#9c6656"/><rect x="1015.8" y="324.8" width="6.1" height="5.6" fill="#7a4e46"/><rect x="996.6" y="112.3" width="6.0" height="4.7" fill="#b8aaa6"/><rect x="937.7" y="138.3" width="3.6" height="3.8" fill="#a0604c"/><rect x="1166.7" y="388.8" width="6.9" height="5.8" fill="#b8aaa6"/><rect x="901.1" y="370.9" width="5.6" height="3.3" fill="#5e5052"/><rect x="970.3" y="294.3" width="6.8" height="3.9" fill="#5e5052"/><rect x="918.9" y="388.7" width="4.7" height="4.5" fill="#3e4046"/><rect x="946.4" y="348.4" width="5.5" height="2.6" fill="#b8aaa6"/><rect x="994.4" y="297.4" width="4.1" height="4.1" fill="#b8aaa6"/><rect x="1016.7" y="194.8" width="3.1" height="5.9" fill="#3e4046"/><rect x="1050.9" y="147.0" width="6.3" height="3.0" fill="#9c6656"/><rect x="935.2" y="326.1" width="5.5" height="2.9" fill="#4a4448"/><rect x="947.7" y="294.8" width="2.6" height="4.1" fill="#b8aaa6"/><rect x="1057.0" y="384.3" width="5.4" height="5.2" fill="#7a4e46"/><rect x="1152.2" y="287.7" width="5.6" height="5.0" fill="#9c6656"/><rect x="1076.1" y="419.3" width="4.6" height="3.8" fill="#5e5052"/><rect x="1000.8" y="166.0" width="6.8" height="4.3" fill="#8c8884"/><rect x="904.9" y="230.8" width="5.1" height="3.6" fill="#8a5a4e"/><rect x="994.5" y="115.9" width="5.0" height="2.9" fill="#6e6466"/><rect x="913.7" y="154.5" width="6.5" height="2.4" fill="#3e4046"/><rect x="1055.7" y="405.5" width="6.4" height="2.7" fill="#9a948f"/><rect x="1145.1" y="369.1" width="5.7" height="2.0" fill="#6e6466"/><rect x="914.4" y="230.7" width="5.7" height="5.8" fill="#9a948f"/><rect x="1032.0" y="373.1" width="3.8" height="3.4" fill="#8e8084"/><rect x="1132.8" y="147.3" width="6.6" height="4.7" fill="#6e6466"/><rect x="988.7" y="333.8" width="2.1" height="6.0" fill="#4a4448"/><rect x="911.5" y="117.7" width="2.6" height="5.2" fill="#7a4e46"/><rect x="923.2" y="409.9" width="6.4" height="4.7" fill="#7a4e46"/><rect x="1063.8" y="191.3" width="7.0" height="5.0" fill="#6e6466"/><rect x="1179.6" y="115.4" width="3.7" height="2.6" fill="#a0604c"/><rect x="1030.4" y="121.2" width="6.2" height="2.3" fill="#b8aaa6"/><rect x="1137.7" y="329.1" width="4.0" height="3.9" fill="#7a4e46"/><rect x="1097.4" y="255.0" width="3.1" height="5.8" fill="#a0604c"/><rect x="899.4" y="216.7" width="3.1" height="5.6" fill="#b8aaa6"/><rect x="1075.5" y="178.9" width="6.1" height="4.9" fill="#8e8084"/><rect x="1060.2" y="235.5" width="3.8" height="2.0" fill="#b8aaa6"/><rect x="1030.2" y="183.7" width="3.2" height="5.5" fill="#b8aaa6"/><rect x="889.6" y="157.8" width="5.4" height="3.1" fill="#6e6466"/><rect x="895.4" y="429.2" width="3.8" height="4.3" fill="#b8aaa6"/><rect x="1182.2" y="429.5" width="2.2" height="4.2" fill="#8c8884"/><rect x="905.6" y="175.0" width="4.1" height="4.3" fill="#9c6656"/><rect x="991.5" y="201.4" width="6.0" height="5.5" fill="#7a4e46"/><rect x="1093.7" y="208.6" width="5.8" height="5.0" fill="#a0604c"/><rect x="1148.9" y="189.7" width="6.4" height="4.9" fill="#8e8084"/><rect x="894.4" y="219.2" width="3.6" height="6.0" fill="#4a4448"/><rect x="1036.7" y="398.0" width="6.0" height="6.0" fill="#7a4e46"/><rect x="918.5" y="113.3" width="6.4" height="3.8" fill="#4a4448"/><rect x="1002.1" y="358.9" width="6.6" height="4.3" fill="#7a4e46"/><rect x="971.8" y="210.0" width="5.6" height="4.2" fill="#8e8084"/><rect x="898.6" y="172.1" width="6.6" height="4.3" fill="#6e6466"/><rect x="1061.3" y="428.0" width="3.8" height="5.1" fill="#a89a98"/><rect x="1106.5" y="406.9" width="6.2" height="3.3" fill="#7a4e46"/><rect x="963.6" y="193.7" width="2.1" height="2.7" fill="#6e6466"/><rect x="951.0" y="117.4" width="2.2" height="3.8" fill="#b8aaa6"/><rect x="965.7" y="272.1" width="2.5" height="3.0" fill="#8a5a4e"/><rect x="1184.2" y="303.9" width="2.4" height="5.2" fill="#b8aaa6"/><rect x="984.5" y="154.9" width="2.9" height="4.1" fill="#8a5a4e"/><rect x="1080.4" y="407.2" width="3.1" height="3.3" fill="#9a948f"/><rect x="883.7" y="267.1" width="5.0" height="5.2" fill="#7a4e46"/><rect x="893.4" y="244.0" width="2.2" height="4.5" fill="#8e8084"/><rect x="1124.1" y="428.1" width="4.0" height="5.8" fill="#8a5a4e"/><rect x="883.3" y="212.7" width="5.3" height="3.3" fill="#a89a98"/><rect x="1072.1" y="343.4" width="3.6" height="2.4" fill="#7a4e46"/><rect x="942.6" y="281.0" width="6.2" height="3.4" fill="#8e8084"/><rect x="1010.9" y="283.9" width="4.9" height="4.2" fill="#5e5052"/><rect x="1190.0" y="295.6" width="3.2" height="4.5" fill="#9a948f"/><rect x="1028.3" y="121.2" width="5.2" height="4.6" fill="#a0604c"/><rect x="1188.7" y="256.5" width="3.4" height="4.1" fill="#6e6466"/><rect x="917.3" y="113.9" width="4.4" height="4.6" fill="#8c8884"/><rect x="1188.6" y="159.3" width="5.1" height="3.6" fill="#9c6656"/><rect x="1175.8" y="311.5" width="2.6" height="4.2" fill="#3e4046"/><rect x="1053.2" y="169.4" width="6.7" height="3.5" fill="#7a4e46"/><rect x="1164.8" y="390.5" width="6.3" height="5.1" fill="#a0604c"/><rect x="884.3" y="360.8" width="3.2" height="5.9" fill="#4a4448"/><rect x="943.4" y="403.9" width="6.5" height="3.6" fill="#3e4046"/><rect x="978.9" y="401.0" width="2.5" height="4.9" fill="#9c6656"/><rect x="1134.0" y="404.3" width="5.4" height="3.4" fill="#3e4046"/><rect x="1056.1" y="242.6" width="6.6" height="5.8" fill="#5e5052"/><rect x="1151.2" y="120.9" width="2.1" height="4.8" fill="#3e4046"/><rect x="949.3" y="176.2" width="5.8" height="4.6" fill="#6e6466"/><rect x="1157.3" y="271.1" width="6.9" height="5.2" fill="#4a4448"/><rect x="1152.0" y="390.0" width="3.3" height="5.0" fill="#6e6466"/><rect x="965.7" y="217.4" width="4.4" height="5.6" fill="#7a4e46"/><rect x="977.6" y="306.9" width="6.8" height="2.8" fill="#8a5a4e"/><rect x="1158.4" y="178.4" width="6.4" height="3.4" fill="#8c8884"/><rect x="1123.4" y="251.9" width="4.2" height="2.6" fill="#6e6466"/><rect x="1094.9" y="369.4" width="2.8" height="5.7" fill="#7a4e46"/><rect x="1167.6" y="159.4" width="5.7" height="2.4" fill="#7a4e46"/><rect x="1024.1" y="238.5" width="4.1" height="4.6" fill="#5e5052"/><rect x="1105.0" y="394.1" width="6.9" height="2.1" fill="#3e4046"/><rect x="939.6" y="312.4" width="2.1" height="2.5" fill="#b8aaa6"/><rect x="949.4" y="249.2" width="2.5" height="2.1" fill="#8e8084"/><rect x="895.7" y="146.4" width="6.8" height="5.9" fill="#a0604c"/><rect x="1012.5" y="168.5" width="5.4" height="2.6" fill="#9a948f"/><rect x="1050.1" y="429.9" width="4.6" height="5.4" fill="#9c6656"/><rect x="987.2" y="180.1" width="6.8" height="5.5" fill="#9a948f"/><rect x="898.2" y="336.9" width="2.1" height="3.1" fill="#8a5a4e"/><rect x="938.1" y="126.4" width="5.9" height="5.8" fill="#6e6466"/><rect x="878.4" y="331.9" width="5.3" height="4.2" fill="#a0604c"/><rect x="981.2" y="242.7" width="7.0" height="5.0" fill="#6e6466"/><rect x="1003.2" y="213.2" width="4.1" height="5.9" fill="#a89a98"/><rect x="1119.3" y="394.0" width="6.0" height="5.6" fill="#5e5052"/><rect x="876.7" y="306.1" width="6.6" height="3.0" fill="#b8aaa6"/><rect x="1109.3" y="429.1" width="6.1" height="4.7" fill="#9c6656"/><rect x="1145.6" y="362.7" width="6.5" height="2.2" fill="#9a948f"/><rect x="1054.3" y="330.8" width="4.2" height="4.7" fill="#4a4448"/><rect x="1186.9" y="111.3" width="5.7" height="5.4" fill="#a0604c"/><rect x="984.9" y="286.3" width="3.9" height="5.3" fill="#8c8884"/><rect x="1113.6" y="232.6" width="5.6" height="3.6" fill="#a0604c"/><rect x="960.5" y="322.7" width="6.1" height="2.3" fill="#8c8884"/><rect x="1049.3" y="182.7" width="5.1" height="3.1" fill="#4a4448"/><rect x="1150.3" y="222.6" width="4.9" height="4.3" fill="#7a4e46"/><rect x="896.1" y="354.1" width="3.8" height="2.8" fill="#7a4e46"/><rect x="1136.1" y="187.6" width="2.9" height="5.3" fill="#4a4448"/><rect x="932.0" y="415.1" width="6.3" height="4.6" fill="#8a5a4e"/><rect x="978.4" y="227.1" width="6.3" height="3.7" fill="#a89a98"/><rect x="924.4" y="191.7" width="2.5" height="3.4" fill="#8c8884"/><rect x="1042.8" y="208.1" width="5.3" height="3.1" fill="#6e6466"/><rect x="1195.0" y="334.1" width="4.2" height="3.9" fill="#8c8884"/><rect x="931.0" y="277.1" width="2.0" height="2.5" fill="#4a4448"/><rect x="1042.1" y="187.3" width="3.9" height="3.4" fill="#a89a98"/><rect x="956.2" y="289.5" width="2.0" height="3.0" fill="#b8aaa6"/><rect x="932.3" y="341.5" width="3.4" height="3.3" fill="#3e4046"/><rect x="960.2" y="251.6" width="4.6" height="4.0" fill="#9c6656"/><rect x="939.7" y="246.8" width="6.0" height="4.5" fill="#8e8084"/><rect x="1170.5" y="341.3" width="3.9" height="2.2" fill="#8c8884"/><rect x="969.8" y="241.9" width="5.2" height="5.2" fill="#8e8084"/><rect x="951.6" y="383.8" width="2.6" height="4.5" fill="#9a948f"/><rect x="1061.2" y="131.3" width="3.0" height="5.4" fill="#9c6656"/><rect x="1117.7" y="232.8" width="4.6" height="4.0" fill="#5e5052"/><rect x="1118.0" y="119.2" width="5.0" height="3.9" fill="#4a4448"/><rect x="1100.0" y="251.0" width="7.0" height="2.7" fill="#9c6656"/><rect x="1016.2" y="268.7" width="4.6" height="5.3" fill="#5e5052"/><rect x="949.6" y="175.3" width="4.7" height="5.7" fill="#6e6466"/><rect x="1052.8" y="357.9" width="5.8" height="2.5" fill="#3e4046"/><rect x="1147.2" y="294.3" width="2.1" height="4.0" fill="#8c8884"/><rect x="944.2" y="256.8" width="6.1" height="2.8" fill="#8e8084"/><rect x="1030.0" y="128.6" width="5.5" height="3.7" fill="#b8aaa6"/><rect x="920.0" y="241.6" width="2.3" height="4.5" fill="#8e8084"/><rect x="982.3" y="277.3" width="2.0" height="6.0" fill="#6e6466"/><rect x="1041.9" y="138.8" width="3.9" height="4.7" fill="#6e6466"/><rect x="1053.4" y="275.0" width="4.1" height="2.2" fill="#6e6466"/><rect x="954.8" y="233.1" width="4.2" height="4.2" fill="#6e6466"/><rect x="939.8" y="127.7" width="4.7" height="3.5" fill="#4a4448"/><rect x="1085.7" y="338.9" width="2.7" height="5.7" fill="#8e8084"/><rect x="939.3" y="406.1" width="4.8" height="2.2" fill="#8e8084"/><rect x="877.7" y="132.7" width="6.8" height="5.3" fill="#8a5a4e"/><rect x="962.8" y="366.5" width="3.5" height="4.8" fill="#8c8884"/><rect x="1187.4" y="307.0" width="4.0" height="4.9" fill="#3e4046"/><rect x="1156.9" y="129.5" width="4.2" height="4.6" fill="#8a5a4e"/><rect x="919.0" y="393.5" width="6.1" height="4.0" fill="#8a5a4e"/><rect x="1171.1" y="291.1" width="6.0" height="4.0" fill="#5e5052"/><rect x="1106.3" y="351.3" width="6.0" height="4.1" fill="#7a4e46"/><rect x="921.8" y="405.6" width="3.0" height="2.4" fill="#9c6656"/><rect x="939.7" y="140.4" width="2.3" height="2.9" fill="#6e6466"/><rect x="1101.7" y="253.0" width="4.1" height="5.5" fill="#9a948f"/><rect x="917.8" y="162.4" width="4.2" height="5.0" fill="#b8aaa6"/><rect x="1130.9" y="337.9" width="5.6" height="3.2" fill="#6e6466"/><rect x="979.1" y="381.1" width="2.8" height="5.2" fill="#3e4046"/><rect x="1000.7" y="121.6" width="3.9" height="4.6" fill="#3e4046"/><rect x="1085.2" y="333.8" width="3.0" height="2.6" fill="#7a4e46"/><rect x="1013.0" y="328.9" width="2.6" height="5.3" fill="#9c6656"/><rect x="1086.1" y="178.6" width="5.3" height="4.1" fill="#9c6656"/><rect x="968.3" y="222.7" width="5.8" height="4.0" fill="#9c6656"/><rect x="939.4" y="200.9" width="3.5" height="4.3" fill="#8c8884"/><rect x="903.4" y="155.8" width="3.4" height="5.6" fill="#3e4046"/><rect x="1060.8" y="207.3" width="4.9" height="2.4" fill="#8a5a4e"/><rect x="985.5" y="414.2" width="5.3" height="2.2" fill="#8e8084"/><rect x="987.4" y="265.4" width="3.6" height="3.5" fill="#9c6656"/><rect x="1127.9" y="206.7" width="2.3" height="4.2" fill="#9c6656"/><rect x="1114.8" y="147.3" width="2.8" height="3.6" fill="#8a5a4e"/><rect x="885.8" y="275.8" width="2.5" height="4.6" fill="#7a4e46"/><rect x="1008.3" y="379.7" width="2.4" height="4.9" fill="#9a948f"/><rect x="927.6" y="165.5" width="6.7" height="3.3" fill="#5e5052"/><rect x="1155.4" y="265.2" width="2.7" height="2.4" fill="#3e4046"/><rect x="912.6" y="270.3" width="4.7" height="2.5" fill="#4a4448"/><rect x="954.0" y="293.4" width="2.2" height="3.0" fill="#3e4046"/><rect x="966.0" y="289.2" width="6.9" height="5.6" fill="#9a948f"/><rect x="1154.8" y="272.1" width="6.5" height="2.1" fill="#8a5a4e"/><rect x="1031.8" y="364.9" width="4.9" height="4.8" fill="#3e4046"/><rect x="902.9" y="166.0" width="6.2" height="6.0" fill="#a89a98"/><rect x="1001.2" y="277.3" width="3.5" height="5.6" fill="#9c6656"/><rect x="1088.1" y="180.9" width="3.2" height="5.1" fill="#a0604c"/><rect x="1103.2" y="130.9" width="3.2" height="4.4" fill="#9c6656"/><rect x="888.2" y="309.5" width="5.5" height="5.3" fill="#8e8084"/><rect x="902.0" y="354.7" width="5.0" height="2.7" fill="#8e8084"/><rect x="1176.8" y="243.2" width="4.0" height="2.4" fill="#3e4046"/><rect x="922.5" y="275.2" width="2.8" height="5.2" fill="#8c8884"/><rect x="920.1" y="174.6" width="3.1" height="3.3" fill="#9c6656"/><rect x="1195.1" y="365.1" width="4.4" height="4.0" fill="#8c8884"/><rect x="980.9" y="133.2" width="5.0" height="2.3" fill="#5e5052"/><rect x="891.2" y="228.4" width="4.1" height="4.6" fill="#8e8084"/><rect x="1062.1" y="368.9" width="4.5" height="5.1" fill="#4a4448"/><rect x="918.3" y="376.9" width="6.7" height="5.6" fill="#9a948f"/><rect x="1024.6" y="364.1" width="5.4" height="2.7" fill="#a89a98"/><rect x="1139.9" y="362.8" width="6.4" height="3.2" fill="#b8aaa6"/><rect x="1045.7" y="414.6" width="2.6" height="5.9" fill="#8c8884"/><rect x="1132.5" y="352.0" width="6.2" height="3.0" fill="#b8aaa6"/><rect x="1022.0" y="187.0" width="4.5" height="5.6" fill="#5e5052"/><rect x="1160.5" y="127.1" width="5.3" height="3.6" fill="#5e5052"/><rect x="1094.2" y="413.3" width="6.1" height="3.6" fill="#9c6656"/><rect x="948.3" y="326.7" width="6.0" height="4.7" fill="#a89a98"/><rect x="1129.5" y="112.4" width="4.4" height="2.1" fill="#9c6656"/><rect x="1156.9" y="263.6" width="4.1" height="3.2" fill="#7a4e46"/><rect x="982.7" y="179.6" width="3.8" height="5.4" fill="#b8aaa6"/><rect x="885.5" y="218.8" width="7.0" height="2.7" fill="#4a4448"/><rect x="1005.8" y="283.8" width="3.2" height="2.9" fill="#5e5052"/><rect x="888.3" y="375.2" width="2.9" height="3.1" fill="#7a4e46"/><rect x="991.3" y="183.0" width="6.4" height="4.4" fill="#a89a98"/><rect x="974.1" y="213.2" width="6.4" height="5.2" fill="#b8aaa6"/><rect x="935.8" y="377.6" width="2.8" height="4.1" fill="#8a5a4e"/><rect x="1149.0" y="144.3" width="3.2" height="4.3" fill="#5e5052"/><rect x="955.5" y="224.1" width="2.5" height="4.2" fill="#8c8884"/><rect x="1040.0" y="231.9" width="6.6" height="5.6" fill="#5e5052"/><rect x="1008.5" y="276.1" width="3.7" height="3.1" fill="#6e6466"/><rect x="991.1" y="323.2" width="5.2" height="3.5" fill="#a0604c"/><rect x="1134.6" y="130.2" width="5.3" height="4.0" fill="#9a948f"/><rect x="1188.4" y="129.3" width="6.2" height="4.7" fill="#a0604c"/><rect x="996.1" y="210.9" width="4.6" height="2.6" fill="#b8aaa6"/><rect x="1115.7" y="122.3" width="3.6" height="2.5" fill="#6e6466"/><rect x="921.4" y="299.6" width="4.9" height="2.2" fill="#a89a98"/><rect x="930.7" y="300.3" width="6.9" height="4.5" fill="#3e4046"/><rect x="968.5" y="285.7" width="4.1" height="5.9" fill="#5e5052"/><rect x="902.1" y="416.0" width="5.2" height="4.0" fill="#9a948f"/><rect x="990.6" y="400.8" width="3.6" height="5.3" fill="#4a4448"/><rect x="1140.1" y="365.8" width="3.7" height="2.6" fill="#a0604c"/><rect x="1134.2" y="130.8" width="3.5" height="4.1" fill="#5e5052"/><rect x="975.1" y="128.2" width="3.5" height="3.5" fill="#8e8084"/><rect x="1183.8" y="171.1" width="3.5" height="5.8" fill="#3e4046"/><rect x="1074.2" y="408.9" width="4.0" height="4.7" fill="#8e8084"/><rect x="1001.5" y="234.8" width="6.8" height="3.1" fill="#3e4046"/><rect x="1172.2" y="310.9" width="4.5" height="3.6" fill="#7a4e46"/><rect x="1124.9" y="212.0" width="2.8" height="5.0" fill="#4a4448"/><rect x="1087.3" y="383.2" width="4.1" height="2.3" fill="#a89a98"/><rect x="991.4" y="405.5" width="4.6" height="3.2" fill="#5e5052"/><rect x="913.9" y="255.3" width="2.1" height="4.1" fill="#9a948f"/><rect x="1056.8" y="224.5" width="6.7" height="3.1" fill="#3e4046"/><rect x="1159.4" y="392.1" width="2.5" height="4.4" fill="#a89a98"/><rect x="1142.8" y="339.5" width="6.7" height="2.7" fill="#7a4e46"/><rect x="1185.5" y="314.5" width="5.5" height="5.1" fill="#a89a98"/><rect x="1145.2" y="364.5" width="6.2" height="3.6" fill="#4a4448"/><rect x="1133.6" y="223.3" width="2.9" height="5.5" fill="#a0604c"/><rect x="1111.1" y="243.8" width="6.6" height="3.2" fill="#3e4046"/><rect x="983.7" y="132.2" width="4.1" height="4.0" fill="#b8aaa6"/><rect x="1089.4" y="296.5" width="4.0" height="4.3" fill="#6e6466"/><rect x="1127.1" y="329.1" width="6.3" height="2.5" fill="#3e4046"/><rect x="1090.6" y="353.1" width="4.5" height="5.6" fill="#8a5a4e"/><rect x="1113.5" y="374.5" width="5.2" height="5.5" fill="#7a4e46"/><rect x="1082.8" y="392.0" width="3.9" height="5.6" fill="#9a948f"/><rect x="896.6" y="304.7" width="6.1" height="3.1" fill="#3e4046"/><rect x="1165.1" y="210.3" width="3.8" height="4.3" fill="#8c8884"/><rect x="900.3" y="118.5" width="4.6" height="2.5" fill="#8e8084"/><rect x="945.1" y="257.9" width="5.8" height="3.8" fill="#a0604c"/><rect x="894.0" y="254.1" width="4.8" height="5.2" fill="#8a5a4e"/><rect x="1047.7" y="261.1" width="4.4" height="3.2" fill="#8e8084"/><rect x="1184.7" y="281.4" width="3.2" height="4.2" fill="#3e4046"/><rect x="965.4" y="423.6" width="4.9" height="4.9" fill="#3e4046"/><rect x="1124.8" y="120.1" width="4.5" height="3.7" fill="#9c6656"/><rect x="1181.4" y="198.9" width="2.4" height="2.4" fill="#a89a98"/><rect x="1039.4" y="300.0" width="3.1" height="5.5" fill="#8a5a4e"/><rect x="1133.1" y="419.6" width="3.6" height="5.9" fill="#9c6656"/><rect x="1081.0" y="295.8" width="4.2" height="5.9" fill="#9a948f"/><rect x="1073.3" y="172.2" width="5.1" height="2.4" fill="#7a4e46"/><rect x="965.7" y="173.3" width="5.7" height="4.1" fill="#4a4448"/><rect x="1124.6" y="364.7" width="5.7" height="5.1" fill="#3e4046"/><rect x="1054.8" y="336.1" width="6.9" height="5.0" fill="#8a5a4e"/><rect x="1170.3" y="342.9" width="5.6" height="2.3" fill="#3e4046"/><rect x="1009.2" y="379.2" width="5.2" height="5.0" fill="#a0604c"/><rect x="959.7" y="225.1" width="2.8" height="4.5" fill="#8e8084"/><rect x="973.1" y="125.2" width="2.9" height="3.4" fill="#8a5a4e"/><rect x="1133.2" y="257.1" width="2.5" height="2.4" fill="#7a4e46"/><rect x="991.8" y="394.8" width="4.4" height="2.3" fill="#8e8084"/><rect x="1130.1" y="263.9" width="6.1" height="2.5" fill="#9c6656"/><rect x="1044.6" y="191.6" width="3.9" height="3.4" fill="#5e5052"/><rect x="881.8" y="402.7" width="5.6" height="5.8" fill="#a0604c"/><rect x="1015.2" y="346.1" width="3.9" height="5.2" fill="#a89a98"/><rect x="918.0" y="115.1" width="3.1" height="4.3" fill="#a89a98"/><rect x="883.9" y="372.0" width="6.9" height="2.3" fill="#8c8884"/><rect x="888.9" y="396.4" width="4.7" height="2.3" fill="#8e8084"/><rect x="983.6" y="290.6" width="4.3" height="5.1" fill="#3e4046"/><rect x="877.4" y="176.6" width="3.8" height="5.5" fill="#9c6656"/><rect x="1064.8" y="151.5" width="3.0" height="3.8" fill="#b8aaa6"/><rect x="1170.5" y="331.0" width="6.6" height="5.0" fill="#b8aaa6"/><rect x="1107.6" y="128.3" width="4.4" height="3.6" fill="#5e5052"/><rect x="1151.7" y="428.8" width="5.6" height="3.9" fill="#4a4448"/><rect x="1069.5" y="149.0" width="4.5" height="3.5" fill="#9a948f"/><rect x="951.6" y="427.8" width="3.1" height="3.6" fill="#8c8884"/><rect x="1114.2" y="183.0" width="5.7" height="4.6" fill="#3e4046"/><rect x="905.1" y="424.3" width="6.0" height="2.2" fill="#8a5a4e"/><rect x="1004.0" y="413.1" width="6.8" height="5.1" fill="#8a5a4e"/><rect x="1173.6" y="316.0" width="6.6" height="3.1" fill="#7a4e46"/><rect x="1025.2" y="264.7" width="6.8" height="5.0" fill="#9a948f"/><rect x="906.0" y="157.0" width="4.6" height="4.5" fill="#8e8084"/><rect x="909.0" y="363.6" width="6.4" height="5.7" fill="#8a5a4e"/><rect x="898.2" y="120.5" width="5.2" height="2.3" fill="#a0604c"/><rect x="1074.0" y="301.9" width="6.0" height="2.3" fill="#8a5a4e"/><rect x="1087.3" y="308.4" width="4.3" height="4.7" fill="#a0604c"/><rect x="1114.1" y="118.7" width="6.1" height="5.2" fill="#4a4448"/><rect x="942.0" y="338.3" width="5.7" height="4.7" fill="#9c6656"/><rect x="1071.7" y="138.7" width="4.6" height="4.7" fill="#9c6656"/><rect x="1109.4" y="383.8" width="6.2" height="2.4" fill="#8e8084"/><rect x="963.0" y="210.3" width="3.5" height="4.0" fill="#b8aaa6"/><rect x="1189.1" y="357.8" width="2.0" height="2.3" fill="#9c6656"/><rect x="1094.2" y="357.3" width="3.1" height="3.5" fill="#a89a98"/><rect x="1171.5" y="295.4" width="3.1" height="5.0" fill="#8c8884"/><rect x="1130.7" y="404.0" width="6.2" height="4.9" fill="#8a5a4e"/><rect x="1090.1" y="154.3" width="6.6" height="5.2" fill="#8a5a4e"/><rect x="932.7" y="413.6" width="4.2" height="4.8" fill="#6e6466"/><rect x="1127.8" y="382.7" width="2.1" height="3.5" fill="#7a4e46"/><rect x="1017.2" y="425.9" width="5.3" height="5.7" fill="#8c8884"/><rect x="1075.0" y="352.8" width="5.8" height="3.3" fill="#8c8884"/><rect x="955.2" y="243.4" width="2.1" height="2.9" fill="#8e8084"/><rect x="1170.6" y="216.5" width="5.9" height="5.1" fill="#8e8084"/><rect x="1130.1" y="281.8" width="2.5" height="5.3" fill="#8e8084"/><rect x="1011.4" y="219.2" width="2.3" height="2.5" fill="#4a4448"/><rect x="926.7" y="281.4" width="5.2" height="4.2" fill="#a89a98"/><rect x="1174.0" y="277.5" width="5.9" height="4.5" fill="#5e5052"/><rect x="943.2" y="203.3" width="6.5" height="2.1" fill="#6e6466"/><rect x="1013.5" y="149.0" width="6.7" height="4.4" fill="#b8aaa6"/><rect x="1095.5" y="332.7" width="5.7" height="5.0" fill="#3e4046"/><rect x="984.7" y="419.3" width="2.5" height="5.5" fill="#5e5052"/><rect x="958.3" y="420.5" width="5.2" height="4.4" fill="#5e5052"/><rect x="897.3" y="132.8" width="4.0" height="2.3" fill="#9a948f"/><rect x="896.5" y="115.7" width="3.8" height="2.6" fill="#9c6656"/><rect x="1106.9" y="319.1" width="4.6" height="5.5" fill="#8c8884"/><rect x="1019.5" y="399.9" width="3.3" height="3.6" fill="#9a948f"/><rect x="1096.3" y="253.8" width="5.6" height="2.4" fill="#4a4448"/><rect x="984.9" y="378.2" width="2.2" height="5.3" fill="#3e4046"/><rect x="909.2" y="178.0" width="3.8" height="3.3" fill="#b8aaa6"/><rect x="878.1" y="172.0" width="6.5" height="2.6" fill="#5e5052"/><rect x="1087.4" y="211.1" width="3.3" height="2.2" fill="#4a4448"/><rect x="906.2" y="426.4" width="3.9" height="4.6" fill="#b8aaa6"/><rect x="1062.4" y="130.9" width="3.5" height="3.1" fill="#7a4e46"/><rect x="1175.5" y="225.1" width="4.7" height="2.7" fill="#8e8084"/><rect x="1127.9" y="191.8" width="3.8" height="4.1" fill="#9c6656"/><rect x="1155.0" y="402.9" width="2.8" height="5.0" fill="#8c8884"/><rect x="884.7" y="319.2" width="6.4" height="5.1" fill="#8e8084"/><rect x="952.3" y="397.6" width="3.3" height="2.0" fill="#9c6656"/><rect x="1088.0" y="379.5" width="3.2" height="2.1" fill="#4a4448"/><rect x="1031.5" y="146.3" width="4.8" height="4.0" fill="#a89a98"/><rect x="912.8" y="264.9" width="2.9" height="2.9" fill="#4a4448"/><rect x="894.5" y="172.2" width="3.3" height="3.8" fill="#3e4046"/><rect x="1175.6" y="289.1" width="2.4" height="2.9" fill="#9a948f"/><rect x="944.3" y="307.2" width="7.0" height="5.7" fill="#a89a98"/><rect x="910.3" y="413.9" width="4.6" height="3.0" fill="#7a4e46"/><rect x="1038.9" y="212.5" width="2.5" height="3.9" fill="#4a4448"/><rect x="1171.6" y="259.0" width="5.7" height="2.3" fill="#4a4448"/><rect x="1077.5" y="142.4" width="3.4" height="5.2" fill="#9c6656"/><rect x="913.4" y="426.9" width="4.4" height="2.7" fill="#8a5a4e"/><rect x="1076.4" y="371.5" width="6.5" height="4.6" fill="#5e5052"/><rect x="1112.7" y="283.4" width="3.2" height="4.0" fill="#b8aaa6"/><rect x="919.7" y="228.0" width="3.9" height="5.5" fill="#8e8084"/><rect x="1112.7" y="386.2" width="3.8" height="5.6" fill="#7a4e46"/><rect x="1099.6" y="116.0" width="4.3" height="4.9" fill="#4a4448"/><rect x="944.6" y="122.5" width="4.2" height="2.6" fill="#3e4046"/><rect x="972.7" y="211.8" width="3.0" height="2.3" fill="#8a5a4e"/><rect x="1093.0" y="115.0" width="6.7" height="2.9" fill="#4a4448"/><rect x="995.0" y="384.9" width="5.7" height="4.7" fill="#3e4046"/><rect x="1074.4" y="180.5" width="6.2" height="2.8" fill="#8c8884"/><rect x="1021.6" y="183.6" width="6.8" height="3.3" fill="#a89a98"/><rect x="932.0" y="243.6" width="5.5" height="4.3" fill="#8c8884"/><rect x="927.0" y="376.8" width="2.0" height="4.4" fill="#6e6466"/><rect x="1069.7" y="263.5" width="4.7" height="3.5" fill="#6e6466"/><rect x="952.2" y="149.7" width="6.8" height="2.6" fill="#7a4e46"/><rect x="1195.5" y="154.4" width="3.6" height="5.0" fill="#7a4e46"/><rect x="950.2" y="164.8" width="4.9" height="3.8" fill="#a89a98"/><rect x="956.3" y="294.0" width="3.1" height="2.6" fill="#9a948f"/><rect x="961.3" y="413.4" width="4.0" height="2.2" fill="#9c6656"/><rect x="1185.6" y="401.2" width="2.4" height="5.0" fill="#7a4e46"/><rect x="1154.4" y="245.8" width="4.6" height="5.4" fill="#8c8884"/><rect x="1087.9" y="337.5" width="4.9" height="3.8" fill="#4a4448"/><rect x="1086.3" y="299.2" width="6.0" height="5.6" fill="#a0604c"/><rect x="936.9" y="135.4" width="6.5" height="4.3" fill="#7a4e46"/><rect x="1150.9" y="418.1" width="5.2" height="3.6" fill="#a0604c"/><rect x="957.6" y="374.9" width="5.5" height="2.2" fill="#5e5052"/><rect x="1026.4" y="326.7" width="6.0" height="2.0" fill="#4a4448"/><rect x="984.1" y="355.2" width="6.8" height="5.6" fill="#4a4448"/><rect x="1182.7" y="363.2" width="3.2" height="3.7" fill="#3e4046"/><rect x="1049.2" y="239.7" width="2.7" height="5.0" fill="#8e8084"/><rect x="1111.0" y="226.5" width="5.3" height="5.1" fill="#7a4e46"/><rect x="1195.3" y="316.4" width="6.4" height="2.5" fill="#a0604c"/><rect x="918.7" y="241.4" width="4.1" height="2.3" fill="#b8aaa6"/><rect x="1020.8" y="217.6" width="4.7" height="3.4" fill="#8c8884"/><rect x="1015.3" y="167.3" width="4.4" height="2.1" fill="#5e5052"/><rect x="1125.7" y="237.5" width="2.6" height="4.5" fill="#6e6466"/><rect x="1143.2" y="317.1" width="5.2" height="4.8" fill="#8c8884"/><rect x="938.0" y="356.9" width="3.5" height="3.0" fill="#9c6656"/><rect x="1068.0" y="383.7" width="6.4" height="4.4" fill="#3e4046"/><rect x="1163.0" y="302.2" width="4.1" height="4.2" fill="#8a5a4e"/><rect x="897.5" y="112.5" width="2.9" height="4.8" fill="#8a5a4e"/><rect x="930.7" y="167.0" width="6.5" height="5.1" fill="#3e4046"/><rect x="881.2" y="147.7" width="6.7" height="5.9" fill="#7a4e46"/><rect x="1025.8" y="134.5" width="3.7" height="3.2" fill="#9a948f"/><rect x="1028.7" y="194.0" width="2.3" height="2.3" fill="#7a4e46"/><rect x="960.2" y="131.4" width="2.3" height="5.9" fill="#7a4e46"/><rect x="1129.1" y="344.9" width="3.7" height="4.0" fill="#3e4046"/><rect x="1069.3" y="428.7" width="6.0" height="5.0" fill="#9a948f"/><rect x="1010.7" y="205.7" width="2.1" height="3.2" fill="#9c6656"/><rect x="1132.4" y="141.2" width="4.9" height="2.8" fill="#9a948f"/><rect x="1020.1" y="261.4" width="6.1" height="4.5" fill="#5e5052"/><rect x="1026.5" y="250.8" width="2.1" height="5.7" fill="#3e4046"/><rect x="909.6" y="314.5" width="3.2" height="3.0" fill="#a89a98"/><rect x="1042.5" y="217.5" width="2.3" height="2.9" fill="#8a5a4e"/><rect x="945.9" y="204.3" width="5.2" height="4.8" fill="#b8aaa6"/><rect x="936.7" y="170.0" width="6.9" height="6.0" fill="#6e6466"/><rect x="917.1" y="130.9" width="4.3" height="3.4" fill="#9a948f"/><rect x="1104.9" y="418.7" width="6.0" height="3.2" fill="#8e8084"/><rect x="1042.9" y="209.3" width="5.9" height="3.3" fill="#6e6466"/><rect x="890.8" y="275.9" width="2.8" height="5.7" fill="#3e4046"/><rect x="1023.2" y="174.5" width="2.6" height="4.0" fill="#a0604c"/><rect x="1154.2" y="331.1" width="4.4" height="3.2" fill="#9c6656"/><rect x="909.1" y="133.5" width="3.9" height="3.9" fill="#6e6466"/><rect x="1132.9" y="275.9" width="4.2" height="5.4" fill="#9a948f"/><rect x="1009.3" y="337.4" width="4.7" height="5.1" fill="#9a948f"/><rect x="1174.8" y="309.6" width="2.5" height="3.8" fill="#5e5052"/><rect x="1171.1" y="153.7" width="6.3" height="5.8" fill="#a0604c"/><rect x="916.4" y="260.5" width="5.1" height="3.2" fill="#9c6656"/><rect x="1148.6" y="323.0" width="3.7" height="4.1" fill="#7a4e46"/><rect x="1001.4" y="141.2" width="6.8" height="2.2" fill="#6e6466"/><rect x="1167.1" y="326.2" width="4.7" height="4.8" fill="#8e8084"/><rect x="927.6" y="281.7" width="6.2" height="2.7" fill="#7a4e46"/><rect x="999.2" y="370.0" width="5.5" height="3.4" fill="#3e4046"/><rect x="1022.0" y="288.2" width="2.5" height="5.8" fill="#9a948f"/><rect x="1165.3" y="262.8" width="6.8" height="4.4" fill="#6e6466"/><rect x="1118.6" y="237.2" width="3.0" height="5.1" fill="#9a948f"/><rect x="937.2" y="418.6" width="2.5" height="5.3" fill="#8e8084"/><rect x="1132.5" y="119.9" width="4.6" height="5.3" fill="#9a948f"/><rect x="922.7" y="385.3" width="3.6" height="2.7" fill="#9a948f"/><rect x="1147.4" y="330.1" width="5.3" height="2.2" fill="#8a5a4e"/><rect x="1152.0" y="295.5" width="2.1" height="5.1" fill="#b8aaa6"/><rect x="887.6" y="123.0" width="7.0" height="2.9" fill="#8e8084"/><rect x="1137.9" y="196.4" width="3.8" height="3.5" fill="#8e8084"/><rect x="1001.6" y="202.2" width="6.7" height="2.1" fill="#5e5052"/><rect x="1006.8" y="315.1" width="6.4" height="5.0" fill="#3e4046"/><rect x="1137.2" y="317.8" width="2.3" height="5.6" fill="#7a4e46"/><rect x="1117.3" y="372.0" width="3.3" height="4.6" fill="#a89a98"/><rect x="1015.3" y="209.6" width="3.2" height="4.9" fill="#5e5052"/><rect x="1138.4" y="221.8" width="6.2" height="5.4" fill="#8c8884"/><rect x="919.6" y="412.2" width="5.7" height="4.7" fill="#5e5052"/><rect x="1167.5" y="365.7" width="6.2" height="5.9" fill="#8e8084"/><rect x="1025.9" y="259.2" width="5.7" height="5.3" fill="#9a948f"/><rect x="984.3" y="191.0" width="2.5" height="3.3" fill="#8a5a4e"/><rect x="1164.9" y="119.2" width="3.9" height="4.5" fill="#4a4448"/><rect x="1112.9" y="174.7" width="4.3" height="3.6" fill="#8c8884"/><rect x="1028.0" y="232.4" width="5.2" height="5.5" fill="#b8aaa6"/><rect x="1026.0" y="399.8" width="5.7" height="3.2" fill="#8e8084"/><rect x="1059.0" y="145.0" width="4.9" height="5.3" fill="#a0604c"/><rect x="897.0" y="254.2" width="2.1" height="5.8" fill="#3e4046"/><rect x="941.7" y="227.3" width="3.8" height="5.8" fill="#9a948f"/><rect x="1152.1" y="321.2" width="4.8" height="3.8" fill="#b8aaa6"/><rect x="1013.8" y="341.3" width="4.1" height="2.4" fill="#a0604c"/><rect x="968.4" y="276.4" width="5.7" height="2.4" fill="#8c8884"/><rect x="1114.1" y="368.4" width="3.1" height="5.5" fill="#9a948f"/><rect x="1014.1" y="233.2" width="5.5" height="5.7" fill="#3e4046"/><rect x="980.1" y="429.3" width="4.6" height="5.9" fill="#4a4448"/><rect x="1050.5" y="271.6" width="5.3" height="2.6" fill="#a89a98"/><rect x="1196.0" y="291.1" width="6.0" height="2.7" fill="#5e5052"/><rect x="1052.0" y="354.8" width="6.3" height="3.4" fill="#8a5a4e"/><rect x="941.6" y="118.5" width="4.5" height="5.6" fill="#9a948f"/><rect x="1181.5" y="275.0" width="6.7" height="4.2" fill="#7a4e46"/><rect x="924.2" y="251.7" width="2.2" height="2.5" fill="#9a948f"/><rect x="958.2" y="199.6" width="4.1" height="4.1" fill="#4a4448"/><rect x="892.4" y="359.4" width="6.0" height="5.6" fill="#7a4e46"/><rect x="1115.2" y="187.1" width="3.3" height="4.1" fill="#7a4e46"/><rect x="949.5" y="167.1" width="6.4" height="5.9" fill="#9a948f"/><rect x="1106.4" y="351.5" width="5.6" height="4.8" fill="#6e6466"/><rect x="1143.4" y="247.2" width="4.6" height="4.0" fill="#8a5a4e"/><rect x="1017.1" y="138.7" width="2.3" height="5.2" fill="#5e5052"/><rect x="1008.2" y="213.7" width="2.9" height="2.9" fill="#a0604c"/><rect x="982.9" y="357.1" width="3.2" height="2.8" fill="#7a4e46"/><rect x="1154.0" y="225.5" width="4.2" height="3.2" fill="#5e5052"/><rect x="945.1" y="138.3" width="3.0" height="3.3" fill="#a0604c"/><rect x="970.1" y="245.1" width="6.2" height="5.1" fill="#b8aaa6"/><rect x="1031.1" y="414.3" width="4.4" height="2.8" fill="#b8aaa6"/><rect x="1038.4" y="271.6" width="3.2" height="3.4" fill="#a89a98"/><rect x="1185.4" y="240.5" width="3.8" height="3.7" fill="#8e8084"/><rect x="1101.3" y="380.7" width="5.2" height="3.9" fill="#b8aaa6"/><rect x="1050.9" y="124.4" width="5.9" height="3.9" fill="#a0604c"/><rect x="1077.2" y="406.4" width="4.0" height="3.7" fill="#6e6466"/><rect x="925.2" y="320.4" width="5.7" height="2.0" fill="#5e5052"/><rect x="921.6" y="228.4" width="6.3" height="5.2" fill="#b8aaa6"/><rect x="1058.4" y="181.5" width="6.0" height="2.6" fill="#a0604c"/><rect x="1004.2" y="169.6" width="2.6" height="5.6" fill="#8c8884"/><rect x="1188.1" y="308.9" width="6.0" height="3.8" fill="#6e6466"/><rect x="991.7" y="398.3" width="3.7" height="4.1" fill="#8e8084"/><rect x="1080.2" y="264.1" width="3.7" height="3.5" fill="#b8aaa6"/><rect x="1056.5" y="386.1" width="2.1" height="5.2" fill="#9c6656"/><rect x="991.5" y="404.1" width="4.7" height="3.1" fill="#8e8084"/><rect x="967.4" y="269.9" width="6.7" height="3.5" fill="#9c6656"/><rect x="937.0" y="130.1" width="6.0" height="2.6" fill="#3e4046"/><rect x="945.4" y="251.2" width="2.6" height="5.9" fill="#9c6656"/><rect x="1179.0" y="287.8" width="6.6" height="2.4" fill="#7a4e46"/><rect x="1014.3" y="172.9" width="5.7" height="5.4" fill="#a89a98"/><rect x="1010.5" y="313.1" width="5.5" height="2.7" fill="#7a4e46"/><rect x="1188.5" y="123.2" width="2.3" height="2.5" fill="#8a5a4e"/><rect x="980.2" y="333.9" width="2.8" height="3.9" fill="#9c6656"/><rect x="933.1" y="306.6" width="5.4" height="5.9" fill="#8e8084"/><rect x="913.8" y="386.1" width="3.6" height="3.6" fill="#4a4448"/><rect x="949.7" y="423.8" width="7.0" height="4.8" fill="#7a4e46"/><rect x="928.1" y="397.6" width="6.0" height="4.5" fill="#5e5052"/><rect x="893.9" y="281.2" width="5.4" height="2.1" fill="#4a4448"/><rect x="1050.7" y="394.9" width="2.1" height="3.8" fill="#8a5a4e"/><rect x="1067.9" y="219.2" width="4.0" height="5.8" fill="#8a5a4e"/><rect x="1168.7" y="291.0" width="2.7" height="2.7" fill="#a89a98"/><rect x="925.3" y="318.4" width="4.5" height="5.7" fill="#9a948f"/><rect x="1040.3" y="112.8" width="6.0" height="3.7" fill="#5e5052"/><rect x="935.7" y="233.1" width="5.3" height="3.3" fill="#4a4448"/><rect x="1181.7" y="409.2" width="5.1" height="3.3" fill="#a89a98"/><rect x="936.3" y="429.9" width="3.1" height="4.7" fill="#b8aaa6"/><rect x="1138.6" y="429.0" width="5.4" height="3.3" fill="#8c8884"/><rect x="1054.7" y="368.1" width="3.7" height="4.3" fill="#a0604c"/><rect x="1031.9" y="199.3" width="6.6" height="2.3" fill="#8c8884"/><rect x="889.9" y="248.4" width="2.4" height="3.7" fill="#6e6466"/><rect x="1063.3" y="248.2" width="6.7" height="2.3" fill="#8c8884"/><rect x="917.9" y="231.8" width="6.4" height="4.4" fill="#a89a98"/><rect x="1016.8" y="344.2" width="3.3" height="4.9" fill="#5e5052"/><rect x="993.2" y="122.5" width="6.2" height="3.2" fill="#9c6656"/><rect x="1085.0" y="200.2" width="3.9" height="5.7" fill="#a0604c"/><rect x="1195.3" y="248.0" width="4.9" height="5.2" fill="#8c8884"/><rect x="964.1" y="317.4" width="3.6" height="4.7" fill="#9a948f"/><rect x="1026.8" y="149.1" width="5.7" height="2.6" fill="#5e5052"/><rect x="969.7" y="304.2" width="6.3" height="4.9" fill="#7a4e46"/><rect x="987.9" y="384.3" width="6.3" height="3.0" fill="#a0604c"/><rect x="885.7" y="264.4" width="2.4" height="5.4" fill="#8a5a4e"/><rect x="944.1" y="303.8" width="6.4" height="2.3" fill="#6e6466"/><rect x="985.2" y="410.4" width="2.9" height="2.5" fill="#8c8884"/><rect x="913.5" y="170.7" width="4.5" height="3.3" fill="#7a4e46"/><rect x="1166.0" y="182.6" width="6.3" height="2.9" fill="#6e6466"/><rect x="1167.9" y="182.0" width="6.5" height="4.5" fill="#8c8884"/><rect x="895.2" y="234.0" width="5.1" height="5.9" fill="#3e4046"/><rect x="906.6" y="404.3" width="6.0" height="4.7" fill="#9a948f"/><rect x="998.1" y="320.5" width="4.4" height="4.1" fill="#3e4046"/><rect x="1171.4" y="162.5" width="5.4" height="4.2" fill="#a89a98"/><rect x="1160.5" y="404.7" width="6.5" height="3.9" fill="#6e6466"/><rect x="1055.8" y="142.8" width="4.5" height="5.9" fill="#8e8084"/><rect x="927.0" y="395.4" width="3.8" height="5.8" fill="#7a4e46"/><rect x="1035.1" y="201.7" width="3.7" height="4.3" fill="#7a4e46"/><rect x="975.7" y="120.2" width="3.0" height="2.5" fill="#6e6466"/><rect x="1021.1" y="229.6" width="5.9" height="5.8" fill="#9a948f"/><rect x="991.3" y="415.8" width="5.2" height="4.2" fill="#5e5052"/><rect x="1090.0" y="226.7" width="5.0" height="3.2" fill="#9a948f"/><rect x="953.4" y="423.3" width="2.3" height="2.0" fill="#a0604c"/><rect x="897.8" y="276.3" width="5.3" height="5.0" fill="#3e4046"/><rect x="1089.8" y="330.6" width="6.6" height="6.0" fill="#5e5052"/><rect x="1061.4" y="325.3" width="3.3" height="5.9" fill="#9c6656"/><rect x="1186.1" y="211.5" width="4.8" height="2.0" fill="#a89a98"/><rect x="987.4" y="338.9" width="4.7" height="2.7" fill="#b8aaa6"/><rect x="940.1" y="168.5" width="6.2" height="2.4" fill="#9c6656"/><rect x="960.9" y="393.6" width="4.6" height="3.3" fill="#a89a98"/><rect x="1005.0" y="334.9" width="2.3" height="5.3" fill="#a89a98"/><rect x="910.5" y="350.5" width="3.4" height="2.6" fill="#8e8084"/><rect x="1154.5" y="118.1" width="2.1" height="2.2" fill="#a89a98"/><rect x="1075.1" y="320.8" width="2.8" height="4.9" fill="#a0604c"/><rect x="917.8" y="406.0" width="3.9" height="4.2" fill="#7a4e46"/><rect x="925.8" y="158.9" width="4.9" height="5.2" fill="#7a4e46"/><rect x="974.3" y="293.0" width="2.5" height="4.0" fill="#4a4448"/><rect x="1049.5" y="115.9" width="2.3" height="3.7" fill="#3e4046"/><rect x="1172.2" y="112.8" width="6.5" height="3.4" fill="#8c8884"/><rect x="904.7" y="264.3" width="3.9" height="3.3" fill="#8c8884"/><rect x="888.3" y="424.1" width="7.0" height="2.2" fill="#a0604c"/><rect x="951.7" y="123.1" width="6.6" height="2.8" fill="#6e6466"/><rect x="901.4" y="217.5" width="2.4" height="4.6" fill="#a89a98"/><rect x="1117.2" y="134.8" width="5.9" height="3.8" fill="#5e5052"/><rect x="924.7" y="209.0" width="3.6" height="5.6" fill="#9a948f"/><rect x="1039.8" y="409.0" width="4.9" height="4.0" fill="#9a948f"/><rect x="1083.0" y="161.3" width="5.1" height="2.2" fill="#a0604c"/><rect x="887.7" y="126.3" width="4.6" height="5.0" fill="#3e4046"/><rect x="1038.9" y="165.0" width="5.3" height="3.7" fill="#5e5052"/><rect x="1020.7" y="188.1" width="4.3" height="4.8" fill="#5e5052"/><rect x="1002.9" y="174.7" width="2.4" height="4.7" fill="#8e8084"/><rect x="982.5" y="196.5" width="5.4" height="2.9" fill="#a89a98"/><rect x="1008.7" y="382.1" width="2.3" height="2.3" fill="#8a5a4e"/><rect x="1049.3" y="429.0" width="6.6" height="2.4" fill="#a0604c"/><rect x="1093.4" y="192.2" width="2.5" height="5.7" fill="#b8aaa6"/><rect x="1134.6" y="204.7" width="6.7" height="5.3" fill="#4a4448"/><rect x="915.7" y="132.5" width="4.2" height="4.6" fill="#8a5a4e"/><rect x="1098.9" y="296.6" width="6.9" height="2.2" fill="#9a948f"/><rect x="1128.7" y="135.0" width="6.0" height="3.0" fill="#3e4046"/><rect x="1062.1" y="343.1" width="3.7" height="4.8" fill="#8e8084"/><rect x="1005.5" y="376.6" width="2.8" height="3.8" fill="#7a4e46"/><rect x="876.2" y="140.4" width="5.6" height="5.5" fill="#5e5052"/><rect x="1166.2" y="322.5" width="3.3" height="2.5" fill="#8c8884"/><rect x="997.2" y="326.6" width="2.0" height="2.2" fill="#8e8084"/><rect x="902.0" y="209.2" width="5.0" height="5.4" fill="#9a948f"/><rect x="1127.3" y="388.7" width="4.9" height="5.9" fill="#5e5052"/><rect x="1127.0" y="380.4" width="4.7" height="3.2" fill="#3e4046"/><rect x="1030.0" y="219.3" width="3.9" height="4.0" fill="#b8aaa6"/><rect x="1192.7" y="309.9" width="5.3" height="2.5" fill="#8a5a4e"/><rect x="1009.4" y="324.2" width="2.9" height="4.1" fill="#6e6466"/><rect x="913.2" y="312.7" width="4.2" height="3.5" fill="#4a4448"/><rect x="954.9" y="408.1" width="4.6" height="3.5" fill="#6e6466"/><rect x="969.1" y="377.4" width="2.2" height="3.0" fill="#8e8084"/><rect x="1109.7" y="179.3" width="4.3" height="3.4" fill="#6e6466"/><rect x="1021.1" y="138.7" width="3.8" height="4.6" fill="#3e4046"/><rect x="1190.6" y="249.7" width="5.7" height="3.0" fill="#8e8084"/><rect x="1097.6" y="198.6" width="2.3" height="3.4" fill="#8a5a4e"/><rect x="1015.4" y="306.3" width="6.4" height="5.5" fill="#6e6466"/><rect x="1133.2" y="184.6" width="3.7" height="2.4" fill="#8c8884"/><rect x="1111.6" y="170.7" width="2.5" height="2.8" fill="#4a4448"/><rect x="888.9" y="153.1" width="3.7" height="3.7" fill="#4a4448"/><rect x="967.6" y="160.9" width="2.8" height="4.6" fill="#9a948f"/><rect x="925.7" y="201.2" width="6.6" height="5.4" fill="#8e8084"/><rect x="886.8" y="166.6" width="2.3" height="3.7" fill="#7a4e46"/><rect x="1123.0" y="231.3" width="2.6" height="5.6" fill="#4a4448"/><rect x="1038.9" y="430.5" width="6.9" height="5.9" fill="#a89a98"/><rect x="1000.2" y="232.7" width="2.1" height="3.5" fill="#8c8884"/><rect x="978.1" y="151.7" width="2.2" height="4.9" fill="#3e4046"/><rect x="881.5" y="327.5" width="5.1" height="3.2" fill="#3e4046"/><rect x="1102.3" y="383.5" width="3.2" height="3.9" fill="#8c8884"/><rect x="1059.5" y="214.4" width="2.2" height="3.3" fill="#5e5052"/><rect x="1148.0" y="139.9" width="4.3" height="2.9" fill="#4a4448"/><rect x="974.9" y="244.7" width="3.8" height="5.6" fill="#9c6656"/><rect x="981.5" y="239.2" width="5.3" height="3.7" fill="#8e8084"/><rect x="1063.5" y="232.1" width="2.2" height="5.2" fill="#8c8884"/><rect x="972.5" y="261.7" width="5.6" height="3.9" fill="#8a5a4e"/><rect x="892.5" y="233.1" width="3.1" height="4.5" fill="#8c8884"/><rect x="1067.3" y="261.7" width="6.8" height="2.6" fill="#9c6656"/><rect x="1189.2" y="354.6" width="5.7" height="5.8" fill="#9c6656"/><rect x="974.7" y="390.7" width="5.5" height="2.3" fill="#9c6656"/><rect x="934.0" y="112.5" width="4.1" height="3.8" fill="#9a948f"/><rect x="986.7" y="229.3" width="5.6" height="2.4" fill="#a0604c"/><rect x="1033.5" y="230.4" width="6.3" height="2.8" fill="#a89a98"/><rect x="989.8" y="218.7" width="5.1" height="4.3" fill="#6e6466"/><rect x="1119.4" y="309.4" width="5.6" height="5.4" fill="#8e8084"/><rect x="1085.7" y="281.8" width="3.6" height="3.3" fill="#9c6656"/><rect x="983.7" y="245.0" width="6.8" height="3.4" fill="#a89a98"/><rect x="876.2" y="431.5" width="3.0" height="4.1" fill="#8e8084"/><rect x="1005.3" y="185.7" width="5.9" height="3.8" fill="#8e8084"/><rect x="1136.6" y="129.7" width="3.9" height="5.5" fill="#8e8084"/><rect x="1094.0" y="327.9" width="4.5" height="3.9" fill="#3e4046"/><rect x="1048.8" y="132.7" width="2.9" height="2.7" fill="#8c8884"/><rect x="1081.9" y="154.7" width="5.1" height="2.7" fill="#a0604c"/><rect x="1154.2" y="204.2" width="4.7" height="4.9" fill="#9a948f"/><rect x="1072.9" y="154.3" width="3.5" height="4.7" fill="#a0604c"/><rect x="1187.5" y="363.8" width="6.7" height="5.3" fill="#5e5052"/><rect x="1017.0" y="377.5" width="4.8" height="5.0" fill="#8e8084"/><rect x="1033.4" y="287.5" width="2.8" height="2.2" fill="#9c6656"/><rect x="900.9" y="311.5" width="5.0" height="4.8" fill="#a0604c"/><rect x="1108.7" y="196.9" width="6.2" height="2.7" fill="#a0604c"/><rect x="882.5" y="309.6" width="3.1" height="2.3" fill="#9a948f"/><rect x="1020.7" y="187.6" width="2.9" height="3.3" fill="#5e5052"/><rect x="983.8" y="119.4" width="3.7" height="2.3" fill="#9c6656"/><rect x="882.2" y="342.0" width="2.3" height="4.8" fill="#5e5052"/><rect x="964.5" y="406.4" width="6.5" height="5.5" fill="#4a4448"/><rect x="1068.5" y="422.6" width="4.8" height="2.0" fill="#8a5a4e"/><rect x="1110.0" y="184.1" width="2.5" height="5.7" fill="#a0604c"/><rect x="1030.4" y="303.8" width="6.4" height="3.5" fill="#a0604c"/><rect x="1023.9" y="363.3" width="4.3" height="2.8" fill="#3e4046"/><rect x="965.3" y="350.1" width="6.2" height="3.0" fill="#9a948f"/><rect x="973.1" y="125.6" width="2.5" height="3.8" fill="#8c8884"/><rect x="993.2" y="274.7" width="4.5" height="2.1" fill="#8c8884"/><rect x="1120.9" y="366.8" width="5.5" height="3.6" fill="#7a4e46"/><rect x="986.5" y="346.0" width="5.3" height="3.6" fill="#a0604c"/><rect x="1120.4" y="247.4" width="2.9" height="5.9" fill="#3e4046"/><rect x="1127.6" y="174.5" width="5.6" height="3.4" fill="#8c8884"/><rect x="1164.2" y="195.6" width="3.7" height="2.5" fill="#6e6466"/><rect x="996.0" y="296.7" width="3.1" height="3.7" fill="#8a5a4e"/><rect x="1155.0" y="208.2" width="6.0" height="2.6" fill="#a0604c"/><rect x="1068.1" y="312.0" width="2.6" height="5.1" fill="#6e6466"/><rect x="1090.8" y="141.7" width="6.9" height="3.7" fill="#4a4448"/><rect x="1015.2" y="327.1" width="6.8" height="2.8" fill="#9c6656"/><rect x="925.1" y="166.3" width="6.5" height="3.3" fill="#5e5052"/><rect x="1153.2" y="235.5" width="2.7" height="2.7" fill="#b8aaa6"/><rect x="1144.9" y="162.8" width="4.9" height="2.8" fill="#5e5052"/><rect x="1036.7" y="379.6" width="2.1" height="5.7" fill="#3e4046"/><rect x="1017.6" y="396.5" width="5.2" height="2.4" fill="#a89a98"/><rect x="944.9" y="361.7" width="3.5" height="4.9" fill="#3e4046"/><rect x="1176.6" y="166.2" width="3.7" height="2.4" fill="#8c8884"/><rect x="895.9" y="317.5" width="5.5" height="2.6" fill="#a0604c"/><rect x="1135.8" y="368.2" width="2.3" height="4.3" fill="#8a5a4e"/><rect x="938.4" y="177.1" width="3.3" height="5.3" fill="#6e6466"/><rect x="1032.1" y="191.4" width="3.5" height="3.8" fill="#8e8084"/><rect x="952.9" y="392.9" width="4.1" height="5.0" fill="#8a5a4e"/><rect x="911.7" y="351.6" width="4.3" height="4.0" fill="#8a5a4e"/><rect x="1194.7" y="178.1" width="2.2" height="5.0" fill="#a89a98"/><rect x="1084.1" y="282.3" width="3.1" height="3.7" fill="#b8aaa6"/><rect x="1179.3" y="275.4" width="4.2" height="3.7" fill="#8c8884"/><rect x="1045.4" y="354.2" width="3.4" height="5.3" fill="#a89a98"/><rect x="942.8" y="126.8" width="3.1" height="5.8" fill="#3e4046"/><rect x="1194.5" y="274.3" width="2.6" height="4.7" fill="#a89a98"/><rect x="1189.0" y="115.3" width="5.1" height="4.5" fill="#3e4046"/><rect x="1025.9" y="153.0" width="3.5" height="4.9" fill="#9a948f"/><rect x="1174.6" y="156.8" width="4.0" height="2.0" fill="#6e6466"/><rect x="882.0" y="252.8" width="3.6" height="4.4" fill="#8e8084"/><rect x="896.8" y="126.6" width="2.4" height="2.2" fill="#6e6466"/><rect x="973.1" y="286.2" width="6.0" height="2.5" fill="#9a948f"/><rect x="1081.2" y="430.6" width="3.5" height="5.1" fill="#8e8084"/><rect x="1101.2" y="308.8" width="5.2" height="5.0" fill="#9c6656"/><rect x="912.8" y="259.9" width="4.4" height="3.8" fill="#9c6656"/><rect x="1014.7" y="184.2" width="6.8" height="3.3" fill="#5e5052"/><rect x="1103.6" y="232.6" width="4.6" height="4.2" fill="#9c6656"/><rect x="1063.2" y="320.2" width="3.3" height="5.7" fill="#7a4e46"/><rect x="1016.4" y="355.9" width="3.4" height="2.6" fill="#a0604c"/><rect x="930.0" y="158.7" width="3.4" height="5.4" fill="#9c6656"/><rect x="1055.0" y="244.6" width="2.2" height="3.8" fill="#8c8884"/><rect x="972.2" y="299.1" width="5.6" height="2.3" fill="#8c8884"/><rect x="910.0" y="207.8" width="5.6" height="2.1" fill="#a89a98"/><rect x="991.9" y="367.3" width="2.4" height="2.1" fill="#a0604c"/><rect x="946.4" y="137.2" width="2.5" height="2.8" fill="#a0604c"/><rect x="897.6" y="204.0" width="6.8" height="3.8" fill="#b8aaa6"/><rect x="952.4" y="380.5" width="2.2" height="5.0" fill="#9c6656"/><rect x="1049.3" y="321.7" width="3.5" height="2.2" fill="#9c6656"/><rect x="907.2" y="131.5" width="5.5" height="4.4" fill="#9a948f"/><rect x="1151.9" y="328.5" width="3.4" height="4.3" fill="#8a5a4e"/><rect x="965.4" y="299.0" width="3.5" height="3.1" fill="#5e5052"/><rect x="1038.4" y="141.2" width="4.6" height="3.4" fill="#8e8084"/><rect x="911.9" y="274.3" width="4.5" height="4.9" fill="#8e8084"/><rect x="954.4" y="404.3" width="4.6" height="4.4" fill="#b8aaa6"/><rect x="1161.5" y="428.9" width="6.7" height="3.0" fill="#b8aaa6"/><rect x="1132.3" y="154.3" width="4.7" height="2.5" fill="#8c8884"/><rect x="1054.1" y="136.5" width="6.3" height="2.7" fill="#6e6466"/><rect x="1096.4" y="409.4" width="4.0" height="2.7" fill="#5e5052"/><rect x="905.8" y="323.1" width="2.5" height="3.9" fill="#5e5052"/><rect x="1044.7" y="245.7" width="6.5" height="5.8" fill="#a89a98"/><rect x="1000.5" y="247.4" width="3.9" height="4.8" fill="#9a948f"/><rect x="1188.3" y="202.7" width="5.3" height="3.6" fill="#a89a98"/><rect x="935.3" y="415.8" width="6.8" height="5.1" fill="#a0604c"/><rect x="1024.5" y="380.4" width="3.2" height="5.0" fill="#9a948f"/><rect x="1054.3" y="166.4" width="3.8" height="5.1" fill="#8c8884"/><rect x="1022.4" y="217.7" width="5.0" height="5.9" fill="#7a4e46"/><rect x="1146.1" y="325.9" width="2.9" height="2.6" fill="#b8aaa6"/><rect x="1045.2" y="264.6" width="6.3" height="4.1" fill="#7a4e46"/><rect x="1105.2" y="182.8" width="6.2" height="3.3" fill="#6e6466"/><rect x="972.1" y="196.9" width="4.0" height="2.0" fill="#a89a98"/><rect x="945.6" y="260.7" width="4.2" height="4.5" fill="#8c8884"/><rect x="875.1" y="419.3" width="3.1" height="3.0" fill="#8a5a4e"/><rect x="1065.5" y="259.3" width="4.1" height="4.7" fill="#9c6656"/><rect x="954.0" y="203.0" width="6.9" height="3.5" fill="#8a5a4e"/><rect x="1159.6" y="151.0" width="6.2" height="2.1" fill="#9a948f"/><rect x="1063.3" y="394.9" width="4.4" height="2.6" fill="#a89a98"/><rect x="924.6" y="284.3" width="3.3" height="3.6" fill="#3e4046"/><rect x="903.9" y="426.8" width="5.9" height="4.7" fill="#8e8084"/><rect x="1067.3" y="406.9" width="6.1" height="4.3" fill="#8e8084"/><rect x="890.2" y="271.8" width="4.5" height="2.2" fill="#6e6466"/><rect x="1101.7" y="409.9" width="5.2" height="4.7" fill="#a89a98"/><rect x="1124.7" y="254.0" width="4.3" height="5.0" fill="#8e8084"/><rect x="1170.3" y="332.1" width="2.9" height="2.5" fill="#9a948f"/><rect x="1094.5" y="397.5" width="2.6" height="2.5" fill="#4a4448"/><rect x="1089.3" y="171.4" width="3.7" height="4.9" fill="#4a4448"/><rect x="1129.6" y="313.8" width="2.9" height="5.9" fill="#7a4e46"/><rect x="1018.2" y="132.6" width="2.2" height="5.5" fill="#9a948f"/><rect x="1007.3" y="417.3" width="4.1" height="5.4" fill="#8c8884"/><rect x="891.1" y="242.9" width="3.7" height="4.5" fill="#a89a98"/><rect x="1001.8" y="318.2" width="4.5" height="3.3" fill="#b8aaa6"/><rect x="1127.9" y="249.4" width="3.1" height="5.9" fill="#8a5a4e"/><rect x="905.1" y="128.8" width="4.1" height="5.3" fill="#9a948f"/><rect x="1033.3" y="230.9" width="2.5" height="3.5" fill="#8e8084"/><rect x="879.0" y="234.1" width="3.3" height="4.5" fill="#9c6656"/><rect x="1035.4" y="280.2" width="2.5" height="2.4" fill="#5e5052"/><rect x="907.8" y="345.8" width="6.0" height="4.4" fill="#9c6656"/><rect x="1109.9" y="261.8" width="5.8" height="5.4" fill="#6e6466"/><rect x="889.7" y="393.0" width="5.3" height="3.1" fill="#8a5a4e"/><rect x="1140.2" y="398.3" width="3.2" height="4.3" fill="#a89a98"/><rect x="908.2" y="312.8" width="5.0" height="2.2" fill="#6e6466"/><rect x="1049.3" y="409.0" width="4.8" height="5.7" fill="#b8aaa6"/><rect x="1131.5" y="322.8" width="4.2" height="5.5" fill="#5e5052"/><rect x="1108.3" y="422.0" width="5.1" height="3.9" fill="#5e5052"/><rect x="1164.7" y="125.5" width="3.4" height="4.7" fill="#7a4e46"/><rect x="977.8" y="392.3" width="2.3" height="5.2" fill="#8a5a4e"/><rect x="1167.2" y="163.9" width="3.3" height="4.9" fill="#3e4046"/><rect x="1114.3" y="341.5" width="6.9" height="5.1" fill="#b8aaa6"/><rect x="1063.3" y="417.4" width="5.9" height="5.8" fill="#3e4046"/><rect x="1016.0" y="395.5" width="6.8" height="2.6" fill="#4a4448"/><rect x="931.2" y="290.3" width="5.9" height="5.7" fill="#8a5a4e"/><rect x="1044.4" y="366.5" width="2.3" height="2.5" fill="#8a5a4e"/><rect x="1002.5" y="286.8" width="6.6" height="2.3" fill="#8e8084"/><rect x="897.8" y="232.9" width="6.7" height="4.2" fill="#8a5a4e"/><rect x="1061.3" y="150.1" width="6.0" height="4.0" fill="#7a4e46"/><rect x="1031.4" y="379.7" width="2.6" height="5.5" fill="#7a4e46"/><rect x="1135.1" y="184.5" width="2.0" height="5.5" fill="#6e6466"/><rect x="906.3" y="357.0" width="5.9" height="4.5" fill="#8c8884"/><rect x="1191.1" y="216.2" width="6.2" height="5.7" fill="#8e8084"/><rect x="1101.7" y="237.0" width="2.7" height="4.7" fill="#4a4448"/><rect x="963.5" y="191.8" width="4.7" height="2.5" fill="#8e8084"/><rect x="1160.4" y="188.8" width="5.5" height="4.7" fill="#9c6656"/><rect x="939.7" y="209.3" width="2.0" height="3.3" fill="#9a948f"/><rect x="965.5" y="358.7" width="4.3" height="5.3" fill="#7a4e46"/><rect x="1017.1" y="140.8" width="4.0" height="2.7" fill="#3e4046"/><rect x="898.6" y="352.7" width="2.5" height="4.7" fill="#9c6656"/><rect x="915.4" y="256.6" width="2.3" height="5.8" fill="#5e5052"/><rect x="1019.3" y="121.0" width="3.7" height="3.0" fill="#8c8884"/><rect x="1014.8" y="222.3" width="4.3" height="3.4" fill="#7a4e46"/><rect x="1156.4" y="132.5" width="4.1" height="3.2" fill="#9c6656"/><rect x="943.7" y="215.4" width="3.4" height="5.5" fill="#5e5052"/><rect x="1130.3" y="208.5" width="5.1" height="2.4" fill="#9c6656"/><rect x="1019.3" y="293.0" width="6.3" height="3.0" fill="#6e6466"/><rect x="1001.8" y="185.4" width="5.5" height="4.6" fill="#a0604c"/><rect x="1013.8" y="429.0" width="4.4" height="3.5" fill="#8e8084"/><rect x="995.7" y="150.6" width="5.2" height="5.0" fill="#a89a98"/><rect x="1086.9" y="209.8" width="4.6" height="3.2" fill="#4a4448"/><rect x="1141.6" y="203.4" width="6.4" height="5.1" fill="#b8aaa6"/><rect x="1028.4" y="420.6" width="2.7" height="5.7" fill="#5e5052"/><rect x="1035.6" y="116.1" width="5.5" height="5.2" fill="#6e6466"/><rect x="1147.2" y="374.1" width="3.9" height="5.3" fill="#3e4046"/><rect x="1012.1" y="117.5" width="7.0" height="4.9" fill="#9a948f"/><rect x="1131.8" y="345.6" width="2.4" height="5.9" fill="#3e4046"/><rect x="974.6" y="176.1" width="3.9" height="4.6" fill="#5e5052"/><rect x="1178.4" y="314.3" width="3.8" height="2.4" fill="#9c6656"/><rect x="974.0" y="147.9" width="5.7" height="5.0" fill="#a89a98"/><rect x="1087.2" y="294.1" width="5.2" height="3.0" fill="#5e5052"/><rect x="1064.7" y="285.2" width="4.1" height="3.0" fill="#8e8084"/><rect x="1195.8" y="345.8" width="2.2" height="4.0" fill="#a0604c"/><rect x="941.4" y="128.2" width="2.8" height="3.4" fill="#8c8884"/><rect x="900.3" y="180.2" width="4.5" height="3.2" fill="#a0604c"/><rect x="1006.4" y="135.6" width="5.7" height="2.7" fill="#3e4046"/><rect x="1096.2" y="233.1" width="6.6" height="5.3" fill="#6e6466"/><rect x="991.0" y="156.5" width="3.6" height="3.7" fill="#9c6656"/><rect x="889.1" y="267.4" width="2.2" height="4.9" fill="#5e5052"/><rect x="1108.3" y="230.2" width="6.9" height="3.1" fill="#4a4448"/><rect x="933.2" y="372.8" width="4.3" height="4.9" fill="#8e8084"/><rect x="1118.7" y="154.1" width="5.6" height="5.2" fill="#8c8884"/><rect x="1055.3" y="172.2" width="6.9" height="4.7" fill="#a0604c"/><rect x="950.8" y="370.7" width="4.8" height="3.5" fill="#b8aaa6"/><rect x="1145.6" y="115.1" width="4.2" height="5.5" fill="#8c8884"/><rect x="1078.0" y="230.3" width="4.5" height="4.3" fill="#3e4046"/><rect x="970.9" y="343.1" width="3.7" height="5.0" fill="#b8aaa6"/><rect x="989.3" y="334.6" width="6.6" height="2.3" fill="#8a5a4e"/><rect x="1059.7" y="352.5" width="4.9" height="4.8" fill="#5e5052"/><rect x="1122.1" y="212.1" width="3.0" height="5.1" fill="#a0604c"/><rect x="1067.0" y="178.2" width="6.9" height="3.9" fill="#3e4046"/><rect x="979.7" y="360.6" width="5.5" height="3.2" fill="#9a948f"/><rect x="1120.3" y="315.3" width="4.2" height="4.9" fill="#5e5052"/><rect x="1146.6" y="202.5" width="4.5" height="2.7" fill="#3e4046"/><rect x="1192.1" y="238.8" width="2.1" height="3.2" fill="#9a948f"/><rect x="937.0" y="158.1" width="4.1" height="3.1" fill="#8e8084"/><rect x="1116.1" y="158.4" width="2.5" height="3.0" fill="#a0604c"/><rect x="1007.7" y="317.2" width="4.3" height="5.6" fill="#8c8884"/><rect x="1115.7" y="334.3" width="4.8" height="3.0" fill="#9a948f"/><rect x="879.2" y="217.0" width="3.6" height="2.8" fill="#a89a98"/><rect x="959.4" y="220.8" width="5.6" height="4.6" fill="#6e6466"/><rect x="879.4" y="399.8" width="3.4" height="2.8" fill="#9c6656"/><rect x="1079.8" y="220.9" width="4.5" height="3.7" fill="#9c6656"/><rect x="1060.6" y="254.2" width="3.5" height="4.1" fill="#8c8884"/><rect x="1138.6" y="124.6" width="4.1" height="4.5" fill="#6e6466"/><rect x="1055.3" y="263.7" width="3.6" height="2.5" fill="#6e6466"/><rect x="1070.3" y="142.7" width="6.6" height="5.5" fill="#8a5a4e"/><rect x="938.3" y="279.0" width="2.7" height="4.7" fill="#4a4448"/><rect x="987.5" y="271.0" width="5.3" height="2.8" fill="#5e5052"/><rect x="949.0" y="277.2" width="4.4" height="2.2" fill="#8e8084"/><rect x="888.2" y="199.0" width="2.6" height="2.6" fill="#a0604c"/><rect x="1160.0" y="417.1" width="5.2" height="4.1" fill="#7a4e46"/><rect x="1151.4" y="151.6" width="3.1" height="5.1" fill="#4a4448"/><rect x="900.4" y="264.6" width="5.9" height="2.8" fill="#8c8884"/><rect x="985.4" y="421.2" width="6.5" height="2.8" fill="#a0604c"/><rect x="1036.3" y="422.8" width="5.4" height="3.8" fill="#9a948f"/><rect x="947.0" y="356.4" width="3.7" height="2.6" fill="#3e4046"/><rect x="1126.5" y="343.2" width="3.6" height="4.7" fill="#a89a98"/><rect x="908.5" y="284.6" width="3.5" height="4.5" fill="#8c8884"/><rect x="1132.8" y="262.4" width="6.1" height="3.2" fill="#a0604c"/><rect x="1141.7" y="171.2" width="2.9" height="2.8" fill="#8e8084"/><rect x="1092.4" y="247.4" width="6.9" height="5.8" fill="#5e5052"/><rect x="901.5" y="337.0" width="5.6" height="4.4" fill="#8a5a4e"/><rect x="1044.1" y="267.7" width="6.7" height="4.6" fill="#6e6466"/><rect x="963.3" y="120.4" width="6.6" height="3.1" fill="#8a5a4e"/><rect x="961.9" y="259.1" width="3.0" height="5.4" fill="#3e4046"/><rect x="922.0" y="399.2" width="5.3" height="4.3" fill="#7a4e46"/><rect x="1031.2" y="227.2" width="6.5" height="3.7" fill="#9a948f"/><rect x="893.3" y="431.3" width="2.5" height="5.8" fill="#9a948f"/><rect x="1155.2" y="241.1" width="2.7" height="5.1" fill="#7a4e46"/><rect x="921.6" y="275.4" width="6.0" height="2.5" fill="#a89a98"/><rect x="964.2" y="138.3" width="2.6" height="5.7" fill="#8e8084"/><rect x="1057.9" y="396.7" width="4.6" height="4.1" fill="#a0604c"/><rect x="944.1" y="116.3" width="3.6" height="3.3" fill="#9c6656"/><rect x="890.1" y="169.2" width="2.5" height="3.9" fill="#5e5052"/><rect x="1098.9" y="345.3" width="5.8" height="3.2" fill="#9a948f"/><rect x="1078.2" y="157.0" width="5.4" height="3.9" fill="#4a4448"/><rect x="928.9" y="221.5" width="6.1" height="5.2" fill="#9c6656"/><rect x="1109.9" y="252.5" width="2.6" height="5.0" fill="#8e8084"/><rect x="1083.0" y="361.2" width="4.6" height="4.2" fill="#5e5052"/><rect x="1083.1" y="321.6" width="4.9" height="4.0" fill="#8c8884"/><rect x="1010.2" y="128.2" width="3.6" height="4.5" fill="#9c6656"/><rect x="1013.8" y="291.1" width="3.8" height="3.6" fill="#a89a98"/><rect x="958.9" y="206.5" width="5.0" height="3.8" fill="#8e8084"/><rect x="1106.6" y="237.9" width="4.2" height="4.4" fill="#8e8084"/><rect x="886.8" y="292.4" width="2.8" height="2.2" fill="#9a948f"/><rect x="966.8" y="260.3" width="3.6" height="2.2" fill="#3e4046"/><rect x="1143.5" y="188.4" width="3.3" height="4.8" fill="#8c8884"/><rect x="1164.9" y="253.6" width="2.6" height="2.7" fill="#8c8884"/><rect x="1152.2" y="386.4" width="2.6" height="4.4" fill="#9a948f"/><rect x="1104.6" y="258.4" width="2.7" height="2.2" fill="#9a948f"/><rect x="944.3" y="343.6" width="4.2" height="4.3" fill="#8c8884"/><rect x="1161.2" y="410.4" width="5.1" height="2.4" fill="#b8aaa6"/><rect x="877.5" y="242.3" width="4.5" height="4.9" fill="#9c6656"/><rect x="1063.6" y="252.1" width="3.1" height="5.6" fill="#9c6656"/><rect x="1016.1" y="372.1" width="2.9" height="4.9" fill="#8e8084"/><rect x="1185.4" y="344.3" width="2.3" height="5.5" fill="#8a5a4e"/><rect x="910.6" y="242.7" width="5.1" height="4.6" fill="#8e8084"/><rect x="1145.6" y="254.8" width="3.6" height="2.8" fill="#6e6466"/><rect x="1047.0" y="158.8" width="6.9" height="3.1" fill="#b8aaa6"/><rect x="1094.5" y="254.4" width="5.6" height="3.2" fill="#9a948f"/><rect x="1015.8" y="402.5" width="2.8" height="2.8" fill="#7a4e46"/><rect x="1156.3" y="343.8" width="2.9" height="5.3" fill="#6e6466"/><rect x="1004.6" y="263.5" width="4.0" height="5.1" fill="#8a5a4e"/><rect x="1011.6" y="406.7" width="3.3" height="5.9" fill="#a0604c"/><rect x="982.1" y="177.4" width="6.9" height="5.3" fill="#7a4e46"/><rect x="1159.2" y="226.4" width="5.5" height="3.8" fill="#a0604c"/><rect x="1066.7" y="155.1" width="5.2" height="5.9" fill="#8c8884"/><rect x="1049.4" y="111.8" width="5.6" height="3.7" fill="#9c6656"/><rect x="1183.8" y="140.3" width="2.5" height="3.2" fill="#4a4448"/><rect x="979.9" y="190.8" width="3.5" height="3.1" fill="#8e8084"/><rect x="1092.4" y="334.7" width="2.3" height="5.0" fill="#b8aaa6"/><rect x="1084.9" y="147.4" width="2.2" height="2.7" fill="#6e6466"/><rect x="1152.9" y="136.1" width="5.1" height="5.5" fill="#3e4046"/><rect x="952.7" y="426.1" width="5.8" height="3.4" fill="#8a5a4e"/><rect x="1147.4" y="209.0" width="7.0" height="5.1" fill="#a89a98"/><rect x="1084.6" y="225.4" width="6.4" height="3.2" fill="#9c6656"/><rect x="1114.6" y="416.6" width="6.3" height="4.4" fill="#9a948f"/><rect x="1093.9" y="201.6" width="3.4" height="2.3" fill="#8c8884"/><rect x="888.9" y="307.6" width="3.7" height="2.7" fill="#a89a98"/><rect x="984.0" y="197.4" width="5.1" height="5.5" fill="#5e5052"/><rect x="1040.7" y="205.8" width="4.9" height="5.6" fill="#a0604c"/><rect x="930.9" y="188.6" width="4.6" height="3.9" fill="#a0604c"/><rect x="1180.2" y="245.6" width="4.9" height="2.7" fill="#8e8084"/><rect x="1141.7" y="116.9" width="3.6" height="2.6" fill="#b8aaa6"/><rect x="894.3" y="169.9" width="3.5" height="5.3" fill="#9a948f"/><rect x="1184.9" y="273.6" width="2.8" height="5.6" fill="#5e5052"/><rect x="924.8" y="322.5" width="3.6" height="2.5" fill="#7a4e46"/><rect x="1018.0" y="168.9" width="3.5" height="2.5" fill="#8e8084"/><rect x="1052.2" y="240.6" width="6.0" height="2.4" fill="#8e8084"/><rect x="1069.5" y="257.7" width="5.7" height="2.4" fill="#8c8884"/><rect x="1047.0" y="363.8" width="4.9" height="2.5" fill="#6e6466"/><rect x="1070.6" y="159.8" width="3.6" height="5.5" fill="#8a5a4e"/><rect x="1047.8" y="143.4" width="5.5" height="5.2" fill="#8c8884"/><rect x="1179.1" y="194.5" width="2.3" height="5.0" fill="#6e6466"/><rect x="1097.5" y="230.3" width="3.7" height="2.6" fill="#4a4448"/><rect x="1022.9" y="371.7" width="3.7" height="3.3" fill="#a0604c"/><rect x="907.5" y="212.0" width="2.3" height="4.8" fill="#a0604c"/><rect x="1004.6" y="387.5" width="5.8" height="4.2" fill="#8e8084"/><rect x="1019.3" y="155.3" width="2.4" height="5.5" fill="#5e5052"/><rect x="902.2" y="173.6" width="6.8" height="2.2" fill="#8c8884"/><rect x="1172.6" y="201.8" width="6.6" height="2.7" fill="#a0604c"/><rect x="1047.8" y="153.8" width="3.2" height="4.7" fill="#5e5052"/><rect x="1016.9" y="311.0" width="6.1" height="2.0" fill="#3e4046"/><rect x="891.6" y="114.4" width="3.2" height="5.1" fill="#7a4e46"/><rect x="996.2" y="393.5" width="2.7" height="5.4" fill="#8c8884"/><rect x="1114.9" y="238.7" width="4.4" height="3.1" fill="#8c8884"/><rect x="949.5" y="212.4" width="4.8" height="5.1" fill="#8c8884"/><rect x="886.2" y="251.0" width="2.6" height="4.5" fill="#7a4e46"/><rect x="1055.6" y="369.4" width="4.6" height="5.8" fill="#8a5a4e"/><rect x="1103.5" y="422.4" width="5.5" height="4.2" fill="#a0604c"/><rect x="922.8" y="219.4" width="5.6" height="5.3" fill="#8e8084"/><rect x="1057.0" y="119.8" width="4.5" height="5.7" fill="#4a4448"/><rect x="899.5" y="294.0" width="3.6" height="3.0" fill="#4a4448"/><rect x="1082.9" y="253.8" width="4.7" height="5.4" fill="#4a4448"/><rect x="1061.2" y="281.2" width="4.7" height="3.9" fill="#9a948f"/><rect x="944.8" y="249.3" width="4.1" height="4.0" fill="#9a948f"/><rect x="915.5" y="246.6" width="6.9" height="5.3" fill="#3e4046"/><rect x="946.1" y="182.2" width="2.1" height="3.1" fill="#8a5a4e"/><rect x="879.9" y="245.3" width="6.6" height="5.2" fill="#a89a98"/><rect x="1066.7" y="207.3" width="5.7" height="4.8" fill="#9a948f"/><rect x="929.5" y="256.8" width="6.3" height="3.6" fill="#9c6656"/><rect x="1024.6" y="308.8" width="2.9" height="5.4" fill="#8a5a4e"/><rect x="1149.0" y="373.0" width="4.4" height="2.7" fill="#6e6466"/><rect x="993.5" y="307.2" width="5.0" height="3.3" fill="#b8aaa6"/><rect x="988.4" y="223.1" width="5.0" height="2.4" fill="#8e8084"/><rect x="981.0" y="341.3" width="6.1" height="2.6" fill="#8c8884"/><rect x="1185.0" y="300.2" width="6.1" height="2.3" fill="#a0604c"/><rect x="1190.5" y="211.7" width="3.1" height="4.0" fill="#8a5a4e"/><rect x="994.8" y="431.6" width="4.7" height="5.8" fill="#6e6466"/><rect x="1046.7" y="135.1" width="4.7" height="4.8" fill="#5e5052"/><rect x="990.8" y="296.4" width="6.7" height="5.8" fill="#b8aaa6"/><rect x="957.4" y="374.5" width="2.1" height="3.7" fill="#6e6466"/><rect x="956.7" y="228.9" width="4.9" height="2.9" fill="#9a948f"/><rect x="1044.8" y="258.2" width="5.0" height="3.4" fill="#a0604c"/><rect x="1098.6" y="222.8" width="2.7" height="2.3" fill="#8c8884"/><rect x="1131.7" y="258.3" width="6.0" height="5.9" fill="#9a948f"/><rect x="1045.9" y="199.2" width="4.6" height="5.9" fill="#9a948f"/><rect x="1027.2" y="361.5" width="3.3" height="4.5" fill="#b8aaa6"/><rect x="1147.5" y="174.9" width="6.3" height="2.1" fill="#a0604c"/><rect x="1150.1" y="129.4" width="6.0" height="5.3" fill="#8e8084"/><rect x="934.4" y="243.1" width="5.0" height="3.7" fill="#8a5a4e"/><rect x="1094.0" y="375.6" width="4.7" height="2.5" fill="#4a4448"/><rect x="1134.2" y="387.6" width="6.4" height="2.7" fill="#8a5a4e"/><rect x="1191.0" y="119.8" width="6.2" height="3.3" fill="#8a5a4e"/><rect x="1013.5" y="187.1" width="4.9" height="5.9" fill="#3e4046"/><rect x="1174.2" y="316.3" width="3.1" height="2.9" fill="#9c6656"/><rect x="1016.0" y="427.5" width="3.6" height="3.3" fill="#4a4448"/><rect x="1175.0" y="366.3" width="4.4" height="2.6" fill="#a89a98"/><rect x="1130.6" y="170.2" width="2.5" height="4.5" fill="#4a4448"/><rect x="1055.1" y="269.6" width="2.4" height="3.0" fill="#8c8884"/><rect x="993.9" y="152.2" width="5.1" height="5.0" fill="#4a4448"/><rect x="1188.5" y="232.2" width="2.7" height="5.5" fill="#4a4448"/><rect x="934.7" y="259.8" width="4.7" height="5.6" fill="#a0604c"/><rect x="926.3" y="230.6" width="5.0" height="5.3" fill="#3e4046"/><rect x="954.5" y="332.6" width="7.0" height="3.6" fill="#4a4448"/><rect x="1015.1" y="320.4" width="6.3" height="2.8" fill="#8e8084"/><rect x="1142.8" y="217.3" width="2.4" height="2.5" fill="#7a4e46"/><rect x="1114.1" y="313.4" width="6.6" height="4.7" fill="#8a5a4e"/><rect x="1004.4" y="297.1" width="4.6" height="2.8" fill="#a0604c"/><rect x="1176.6" y="151.6" width="5.8" height="3.4" fill="#8e8084"/><rect x="1183.1" y="225.9" width="5.1" height="4.2" fill="#6e6466"/><rect x="939.8" y="400.7" width="6.7" height="5.8" fill="#9a948f"/><rect x="1158.2" y="271.7" width="2.2" height="3.2" fill="#b8aaa6"/><rect x="1102.0" y="416.3" width="2.1" height="5.8" fill="#a0604c"/><rect x="1143.2" y="350.5" width="3.8" height="5.4" fill="#8a5a4e"/><rect x="1169.7" y="347.2" width="5.5" height="2.6" fill="#8a5a4e"/><rect x="925.6" y="378.6" width="5.6" height="3.9" fill="#b8aaa6"/><rect x="960.7" y="406.6" width="4.7" height="2.1" fill="#8e8084"/><rect x="1161.1" y="116.8" width="5.9" height="2.3" fill="#4a4448"/><rect x="1136.5" y="112.4" width="4.1" height="2.4" fill="#9a948f"/><rect x="1028.9" y="379.8" width="2.5" height="5.5" fill="#6e6466"/><rect x="879.3" y="140.8" width="6.2" height="5.3" fill="#a0604c"/><rect x="1181.9" y="238.0" width="3.1" height="4.7" fill="#b8aaa6"/><rect x="875.6" y="426.5" width="4.1" height="5.1" fill="#8c8884"/><rect x="1057.3" y="164.1" width="4.6" height="4.5" fill="#5e5052"/><rect x="1184.2" y="137.4" width="5.8" height="2.9" fill="#8e8084"/><rect x="1195.3" y="236.6" width="6.3" height="3.4" fill="#5e5052"/><rect x="916.1" y="431.2" width="4.5" height="4.8" fill="#a0604c"/><rect x="877.3" y="176.0" width="6.9" height="2.8" fill="#4a4448"/><rect x="1100.5" y="395.9" width="3.5" height="5.4" fill="#9a948f"/><rect x="999.5" y="184.7" width="6.7" height="3.5" fill="#9c6656"/><rect x="906.2" y="210.9" width="2.6" height="2.2" fill="#9a948f"/><rect x="903.1" y="333.7" width="2.2" height="2.1" fill="#7a4e46"/><rect x="1140.1" y="309.8" width="3.1" height="4.3" fill="#a89a98"/><rect x="951.7" y="221.9" width="5.2" height="3.4" fill="#4a4448"/><rect x="1174.4" y="166.2" width="3.3" height="4.0" fill="#8a5a4e"/><rect x="1149.8" y="181.0" width="3.1" height="3.2" fill="#b8aaa6"/><rect x="1088.3" y="297.1" width="6.0" height="4.2" fill="#5e5052"/><rect x="875.2" y="425.7" width="6.0" height="2.5" fill="#9c6656"/><rect x="1193.6" y="346.8" width="5.2" height="5.4" fill="#7a4e46"/><rect x="1033.6" y="113.0" width="3.3" height="3.5" fill="#3e4046"/><rect x="1030.3" y="372.4" width="5.4" height="5.4" fill="#7a4e46"/><rect x="1008.1" y="226.5" width="3.6" height="2.1" fill="#6e6466"/><rect x="1112.0" y="269.2" width="2.0" height="2.9" fill="#4a4448"/><rect x="1021.8" y="176.9" width="6.1" height="5.6" fill="#9c6656"/><rect x="1177.7" y="256.6" width="6.9" height="2.0" fill="#7a4e46"/><rect x="1073.5" y="327.2" width="5.1" height="4.5" fill="#a89a98"/><rect x="1045.3" y="322.2" width="3.0" height="4.3" fill="#6e6466"/><rect x="899.4" y="358.0" width="2.9" height="3.4" fill="#3e4046"/><rect x="1055.9" y="422.2" width="6.7" height="5.9" fill="#6e6466"/><rect x="1175.5" y="194.5" width="4.9" height="4.7" fill="#3e4046"/><rect x="956.2" y="242.9" width="4.1" height="4.1" fill="#7a4e46"/><rect x="918.7" y="200.2" width="5.2" height="4.5" fill="#a0604c"/><rect x="1125.4" y="334.3" width="7.0" height="4.0" fill="#7a4e46"/><rect x="941.4" y="170.3" width="4.0" height="3.9" fill="#9a948f"/><rect x="1159.6" y="321.6" width="2.4" height="2.9" fill="#b8aaa6"/><rect x="1173.3" y="116.7" width="5.4" height="4.3" fill="#b8aaa6"/><rect x="1117.3" y="144.7" width="3.8" height="5.7" fill="#a89a98"/><rect x="1045.0" y="220.2" width="6.7" height="3.6" fill="#a89a98"/><rect x="1054.9" y="431.2" width="5.5" height="2.6" fill="#5e5052"/><rect x="1047.9" y="341.1" width="5.2" height="5.8" fill="#6e6466"/><rect x="1119.0" y="180.5" width="4.8" height="3.8" fill="#3e4046"/><rect x="1013.3" y="261.7" width="5.7" height="2.3" fill="#8c8884"/><rect x="1012.0" y="337.8" width="5.6" height="6.0" fill="#a89a98"/><rect x="1131.8" y="195.7" width="5.3" height="4.0" fill="#8a5a4e"/><rect x="1018.5" y="225.7" width="2.1" height="3.9" fill="#a0604c"/><rect x="1142.7" y="206.9" width="4.4" height="2.3" fill="#7a4e46"/><rect x="1016.0" y="422.5" width="4.4" height="3.1" fill="#8e8084"/><rect x="999.7" y="153.9" width="2.1" height="4.2" fill="#8e8084"/><rect x="965.3" y="223.9" width="3.6" height="5.0" fill="#4a4448"/><rect x="1069.2" y="374.4" width="2.7" height="5.9" fill="#8e8084"/><rect x="947.2" y="217.2" width="2.7" height="4.3" fill="#b8aaa6"/><rect x="1059.8" y="420.3" width="5.2" height="4.4" fill="#3e4046"/><rect x="982.3" y="122.5" width="6.8" height="4.1" fill="#b8aaa6"/><rect x="1056.2" y="399.9" width="3.5" height="3.7" fill="#4a4448"/><rect x="966.0" y="405.7" width="3.8" height="3.1" fill="#3e4046"/><rect x="946.5" y="198.0" width="4.4" height="5.9" fill="#9c6656"/><rect x="1179.1" y="261.6" width="6.3" height="6.0" fill="#a0604c"/><rect x="1126.4" y="339.8" width="6.0" height="2.5" fill="#9c6656"/><rect x="989.6" y="372.4" width="4.4" height="5.6" fill="#4a4448"/><rect x="993.3" y="384.5" width="6.6" height="2.5" fill="#7a4e46"/><rect x="1099.1" y="175.7" width="4.5" height="4.4" fill="#3e4046"/><rect x="1029.2" y="261.4" width="2.5" height="3.1" fill="#9a948f"/><rect x="1107.3" y="274.4" width="5.0" height="5.4" fill="#6e6466"/><rect x="1065.9" y="127.2" width="6.4" height="2.7" fill="#3e4046"/><rect x="1081.9" y="308.8" width="6.6" height="5.8" fill="#7a4e46"/><rect x="1025.9" y="156.2" width="5.6" height="4.2" fill="#6e6466"/><rect x="966.6" y="409.7" width="2.3" height="3.3" fill="#4a4448"/><rect x="897.1" y="235.7" width="4.2" height="3.0" fill="#9a948f"/><rect x="1155.4" y="147.4" width="3.2" height="5.9" fill="#3e4046"/><rect x="1160.3" y="255.7" width="2.5" height="3.8" fill="#a0604c"/><rect x="996.6" y="169.3" width="2.8" height="5.8" fill="#a89a98"/><rect x="878.8" y="307.1" width="2.5" height="5.0" fill="#a89a98"/><rect x="1194.5" y="162.4" width="5.7" height="2.4" fill="#3e4046"/><rect x="890.3" y="138.7" width="2.4" height="3.6" fill="#a0604c"/><rect x="988.9" y="341.1" width="2.2" height="4.1" fill="#a0604c"/><rect x="1038.2" y="263.1" width="5.7" height="5.3" fill="#9c6656"/><rect x="1141.6" y="332.9" width="2.6" height="2.4" fill="#8a5a4e"/><rect x="950.6" y="302.0" width="4.8" height="2.2" fill="#8e8084"/><rect x="1152.5" y="150.9" width="6.0" height="5.0" fill="#4a4448"/><rect x="1182.0" y="189.1" width="4.4" height="2.9" fill="#9a948f"/><rect x="916.6" y="307.0" width="5.1" height="5.4" fill="#8a5a4e"/><rect x="1182.5" y="135.8" width="2.9" height="4.3" fill="#3e4046"/><rect x="1153.2" y="146.7" width="6.0" height="5.6" fill="#a0604c"/><rect x="1190.0" y="377.0" width="2.9" height="2.8" fill="#a89a98"/><rect x="1122.5" y="277.0" width="2.6" height="2.9" fill="#5e5052"/><rect x="890.9" y="348.7" width="3.4" height="4.9" fill="#a89a98"/><rect x="1050.4" y="225.6" width="6.8" height="4.3" fill="#3e4046"/><rect x="897.4" y="255.9" width="2.3" height="4.7" fill="#4a4448"/><rect x="1060.3" y="427.9" width="5.2" height="2.7" fill="#b8aaa6"/><rect x="1144.9" y="298.0" width="2.1" height="2.6" fill="#a0604c"/><rect x="958.8" y="282.3" width="4.5" height="5.5" fill="#5e5052"/><rect x="904.8" y="147.7" width="2.7" height="2.1" fill="#3e4046"/><rect x="998.6" y="372.1" width="3.2" height="3.3" fill="#7a4e46"/><rect x="1143.6" y="400.6" width="6.7" height="3.0" fill="#9c6656"/><rect x="1063.3" y="310.8" width="2.1" height="5.5" fill="#6e6466"/><rect x="983.2" y="252.7" width="5.4" height="2.6" fill="#8e8084"/><rect x="948.7" y="139.6" width="4.3" height="5.1" fill="#9c6656"/><rect x="944.7" y="193.4" width="2.2" height="4.6" fill="#b8aaa6"/><rect x="1032.0" y="266.6" width="5.5" height="3.7" fill="#8a5a4e"/><rect x="1041.1" y="201.3" width="4.3" height="5.7" fill="#4a4448"/><rect x="1001.2" y="214.3" width="6.8" height="2.3" fill="#8a5a4e"/><rect x="1038.5" y="263.7" width="6.6" height="5.0" fill="#9c6656"/><rect x="1000.6" y="230.9" width="3.9" height="2.4" fill="#b8aaa6"/><rect x="1035.6" y="122.5" width="4.3" height="5.3" fill="#b8aaa6"/><rect x="922.1" y="221.7" width="5.4" height="2.4" fill="#8c8884"/><rect x="927.8" y="337.8" width="6.6" height="5.5" fill="#5e5052"/><rect x="1184.0" y="423.6" width="3.3" height="5.8" fill="#a89a98"/><rect x="984.6" y="157.2" width="6.3" height="4.8" fill="#8a5a4e"/><rect x="913.1" y="411.4" width="6.2" height="5.1" fill="#4a4448"/><rect x="1156.2" y="144.8" width="4.9" height="2.7" fill="#8e8084"/><rect x="1168.3" y="399.6" width="5.6" height="5.6" fill="#5e5052"/><rect x="944.4" y="156.7" width="2.5" height="5.1" fill="#b8aaa6"/><rect x="1049.3" y="411.5" width="4.5" height="2.3" fill="#9a948f"/><rect x="1165.9" y="363.9" width="6.2" height="4.9" fill="#7a4e46"/><rect x="1033.1" y="215.8" width="5.3" height="4.8" fill="#4a4448"/><rect x="1056.0" y="405.9" width="3.5" height="4.2" fill="#7a4e46"/><rect x="925.7" y="266.4" width="5.3" height="2.3" fill="#6e6466"/><rect x="1028.6" y="130.1" width="6.4" height="4.5" fill="#9c6656"/><rect x="902.5" y="267.1" width="6.3" height="5.1" fill="#8a5a4e"/><rect x="1195.8" y="416.0" width="4.1" height="5.2" fill="#3e4046"/><rect x="1042.5" y="169.7" width="5.5" height="2.5" fill="#6e6466"/><rect x="969.0" y="147.9" width="6.1" height="5.3" fill="#4a4448"/><rect x="1033.1" y="234.3" width="4.8" height="2.1" fill="#8e8084"/><rect x="997.8" y="193.4" width="4.5" height="2.3" fill="#8e8084"/><rect x="925.8" y="385.5" width="3.4" height="5.2" fill="#5e5052"/><rect x="925.8" y="426.9" width="5.3" height="3.2" fill="#a0604c"/><rect x="1142.7" y="382.3" width="3.1" height="2.0" fill="#8e8084"/><rect x="991.1" y="135.7" width="6.4" height="4.7" fill="#4a4448"/><rect x="1014.8" y="274.9" width="4.2" height="2.2" fill="#9c6656"/><rect x="1095.3" y="282.6" width="4.5" height="3.0" fill="#3e4046"/><rect x="1132.7" y="130.6" width="2.1" height="4.5" fill="#9a948f"/><rect x="1186.5" y="199.8" width="4.6" height="2.4" fill="#8e8084"/><rect x="968.3" y="284.5" width="2.6" height="3.9" fill="#3e4046"/><rect x="991.8" y="199.7" width="6.7" height="2.2" fill="#b8aaa6"/><rect x="1149.8" y="133.1" width="6.8" height="4.6" fill="#a89a98"/><rect x="1191.6" y="210.6" width="3.8" height="5.1" fill="#8e8084"/><rect x="1162.4" y="215.8" width="2.0" height="5.1" fill="#5e5052"/><rect x="1108.9" y="297.6" width="4.5" height="2.8" fill="#9a948f"/><rect x="991.8" y="262.8" width="6.9" height="2.8" fill="#5e5052"/><rect x="941.6" y="213.2" width="4.6" height="4.1" fill="#7a4e46"/><rect x="1118.9" y="421.9" width="6.1" height="5.2" fill="#8e8084"/><rect x="1105.1" y="286.8" width="6.1" height="5.2" fill="#5e5052"/><rect x="1128.7" y="290.0" width="6.3" height="2.3" fill="#4a4448"/><rect x="1150.7" y="361.9" width="3.5" height="6.0" fill="#8a5a4e"/><rect x="891.9" y="259.6" width="5.6" height="4.3" fill="#7a4e46"/><rect x="990.1" y="235.6" width="6.3" height="4.1" fill="#5e5052"/><rect x="1160.0" y="286.6" width="6.1" height="4.2" fill="#5e5052"/><rect x="1043.7" y="264.6" width="2.7" height="2.6" fill="#a0604c"/><rect x="902.4" y="241.4" width="2.2" height="3.6" fill="#7a4e46"/><rect x="1150.1" y="337.2" width="6.9" height="4.2" fill="#6e6466"/><rect x="1036.3" y="145.8" width="4.3" height="4.9" fill="#8e8084"/><rect x="1004.2" y="278.2" width="3.4" height="5.8" fill="#3e4046"/><rect x="1100.9" y="361.7" width="6.6" height="2.8" fill="#8e8084"/><rect x="887.7" y="328.2" width="3.8" height="5.7" fill="#6e6466"/><rect x="1169.9" y="179.9" width="4.7" height="2.5" fill="#5e5052"/><rect x="1032.9" y="315.0" width="3.7" height="2.9" fill="#b8aaa6"/><rect x="1053.8" y="341.6" width="5.3" height="3.7" fill="#9c6656"/><rect x="969.9" y="265.6" width="3.7" height="4.5" fill="#5e5052"/><rect x="1117.0" y="186.1" width="6.2" height="5.2" fill="#7a4e46"/><rect x="1023.7" y="335.9" width="5.7" height="5.0" fill="#9c6656"/><rect x="1135.1" y="327.9" width="4.1" height="4.4" fill="#5e5052"/><rect x="1049.6" y="348.5" width="6.2" height="3.9" fill="#8e8084"/><rect x="912.5" y="134.8" width="4.0" height="2.3" fill="#8e8084"/><rect x="974.8" y="429.7" width="7.0" height="2.1" fill="#7a4e46"/><rect x="895.7" y="394.7" width="3.2" height="3.5" fill="#4a4448"/><rect x="1178.2" y="380.1" width="2.1" height="2.5" fill="#8e8084"/><rect x="1155.5" y="308.7" width="5.1" height="3.7" fill="#a89a98"/><rect x="1061.5" y="325.3" width="4.5" height="2.8" fill="#6e6466"/><rect x="1154.4" y="295.5" width="6.4" height="3.2" fill="#b8aaa6"/><rect x="1084.2" y="124.4" width="2.4" height="5.3" fill="#7a4e46"/><rect x="1053.1" y="215.5" width="2.4" height="3.9" fill="#a0604c"/><rect x="1118.5" y="320.3" width="3.9" height="4.0" fill="#3e4046"/><rect x="1132.6" y="185.5" width="5.2" height="2.1" fill="#9c6656"/><rect x="1189.8" y="285.2" width="3.8" height="4.1" fill="#8e8084"/><rect x="1176.9" y="236.6" width="4.8" height="3.7" fill="#a0604c"/><rect x="1051.9" y="235.0" width="5.5" height="5.5" fill="#8a5a4e"/><rect x="966.3" y="171.0" width="6.7" height="5.4" fill="#a89a98"/><rect x="1173.6" y="128.3" width="5.3" height="4.2" fill="#7a4e46"/><rect x="1111.1" y="163.2" width="4.8" height="2.1" fill="#8a5a4e"/><rect x="1142.4" y="182.5" width="6.8" height="2.5" fill="#a0604c"/><rect x="1086.9" y="278.6" width="2.1" height="5.8" fill="#4a4448"/><rect x="1154.2" y="426.2" width="3.1" height="5.8" fill="#9c6656"/><rect x="944.6" y="241.4" width="2.4" height="4.3" fill="#3e4046"/><rect x="888.7" y="257.2" width="4.0" height="3.9" fill="#9c6656"/><rect x="1103.5" y="416.1" width="3.5" height="4.7" fill="#a89a98"/><rect x="993.5" y="271.6" width="4.9" height="4.2" fill="#3e4046"/><rect x="959.0" y="402.4" width="6.8" height="5.8" fill="#8e8084"/><rect x="1045.4" y="116.0" width="4.4" height="4.5" fill="#b8aaa6"/><rect x="1020.9" y="237.9" width="6.0" height="4.6" fill="#a0604c"/><rect x="1074.4" y="180.5" width="6.9" height="3.0" fill="#b8aaa6"/><rect x="906.2" y="381.3" width="2.4" height="5.5" fill="#3e4046"/><rect x="904.7" y="231.1" width="5.8" height="5.7" fill="#8c8884"/><rect x="1066.4" y="288.5" width="6.7" height="4.0" fill="#a0604c"/><rect x="1008.8" y="171.0" width="2.9" height="4.8" fill="#8c8884"/><rect x="1097.2" y="409.1" width="5.8" height="4.2" fill="#8e8084"/><rect x="994.6" y="306.9" width="4.6" height="5.0" fill="#9a948f"/><rect x="1153.0" y="169.9" width="5.7" height="5.2" fill="#4a4448"/><rect x="921.5" y="261.7" width="3.0" height="4.4" fill="#9a948f"/><rect x="952.6" y="244.2" width="6.1" height="4.0" fill="#8a5a4e"/><rect x="1009.7" y="182.8" width="4.4" height="4.8" fill="#8e8084"/><rect x="1150.3" y="351.5" width="5.9" height="2.9" fill="#8e8084"/><rect x="967.5" y="286.2" width="6.8" height="2.8" fill="#9c6656"/><rect x="904.5" y="225.3" width="6.6" height="2.4" fill="#7a4e46"/><rect x="888.5" y="198.2" width="4.6" height="2.7" fill="#6e6466"/><rect x="935.4" y="431.5" width="4.8" height="5.3" fill="#9c6656"/><rect x="911.2" y="277.9" width="5.2" height="2.4" fill="#a0604c"/><rect x="1018.0" y="287.6" width="6.5" height="2.7" fill="#8c8884"/><rect x="1069.9" y="169.7" width="2.9" height="4.8" fill="#8c8884"/><rect x="923.4" y="281.0" width="2.2" height="5.9" fill="#8c8884"/><rect x="1155.1" y="290.7" width="5.7" height="5.1" fill="#6e6466"/><rect x="897.0" y="370.1" width="3.3" height="2.3" fill="#9a948f"/><rect x="1089.1" y="165.1" width="6.2" height="2.6" fill="#8e8084"/><rect x="1109.1" y="342.9" width="5.2" height="5.7" fill="#a0604c"/><rect x="887.0" y="417.6" width="3.0" height="2.1" fill="#8c8884"/><rect x="893.2" y="173.1" width="3.3" height="4.8" fill="#3e4046"/><rect x="989.8" y="138.1" width="4.4" height="3.4" fill="#9a948f"/><rect x="910.8" y="361.4" width="4.6" height="2.3" fill="#4a4448"/><rect x="1169.5" y="398.2" width="4.8" height="4.1" fill="#7a4e46"/><rect x="944.6" y="150.6" width="5.6" height="3.3" fill="#8a5a4e"/><rect x="979.2" y="357.4" width="4.9" height="5.3" fill="#9c6656"/><rect x="990.6" y="202.9" width="3.8" height="5.9" fill="#9a948f"/><rect x="1177.0" y="301.2" width="6.8" height="3.0" fill="#3e4046"/><rect x="971.5" y="352.4" width="2.1" height="4.5" fill="#a0604c"/><rect x="960.7" y="137.4" width="2.0" height="4.1" fill="#a0604c"/><rect x="1115.5" y="134.4" width="4.6" height="3.0" fill="#b8aaa6"/><rect x="1099.7" y="267.7" width="2.8" height="3.9" fill="#b8aaa6"/><rect x="991.7" y="393.5" width="5.7" height="3.1" fill="#a0604c"/><rect x="1116.8" y="422.6" width="5.7" height="5.4" fill="#9a948f"/><rect x="1041.6" y="269.9" width="5.4" height="3.2" fill="#a0604c"/><rect x="1074.9" y="134.3" width="6.1" height="5.5" fill="#6e6466"/><rect x="959.8" y="146.7" width="4.0" height="2.1" fill="#8c8884"/><rect x="1143.6" y="190.7" width="6.0" height="4.7" fill="#4a4448"/><rect x="1001.6" y="414.4" width="6.6" height="5.8" fill="#8e8084"/><rect x="1059.0" y="346.9" width="5.4" height="3.6" fill="#4a4448"/><rect x="1041.2" y="283.8" width="6.8" height="4.0" fill="#7a4e46"/><rect x="1146.6" y="334.9" width="5.4" height="4.0" fill="#b8aaa6"/><rect x="933.0" y="277.4" width="6.6" height="3.2" fill="#a89a98"/><rect x="941.0" y="261.1" width="2.4" height="3.0" fill="#7a4e46"/><rect x="885.5" y="367.4" width="6.0" height="5.5" fill="#6e6466"/><rect x="1040.4" y="250.6" width="4.6" height="4.7" fill="#a0604c"/><rect x="986.0" y="114.4" width="2.4" height="4.9" fill="#a89a98"/><rect x="908.9" y="375.5" width="3.2" height="5.8" fill="#5e5052"/><rect x="1127.6" y="352.9" width="5.6" height="5.3" fill="#9c6656"/><rect x="1108.1" y="124.4" width="2.4" height="3.0" fill="#8e8084"/><rect x="948.2" y="388.4" width="6.0" height="3.8" fill="#7a4e46"/><rect x="918.2" y="188.3" width="4.4" height="2.1" fill="#8a5a4e"/><rect x="912.4" y="325.2" width="3.3" height="5.0" fill="#8e8084"/><rect x="1115.5" y="366.1" width="3.6" height="4.2" fill="#8a5a4e"/><rect x="1073.1" y="235.3" width="6.9" height="3.0" fill="#6e6466"/><rect x="1085.9" y="384.9" width="6.9" height="5.6" fill="#8c8884"/><rect x="1096.2" y="169.4" width="7.0" height="4.9" fill="#a0604c"/><rect x="1183.6" y="385.4" width="3.4" height="3.5" fill="#9a948f"/><rect x="1124.3" y="327.0" width="2.3" height="3.9" fill="#6e6466"/><rect x="1058.8" y="418.4" width="3.6" height="2.5" fill="#8c8884"/><rect x="1063.9" y="396.8" width="3.4" height="3.1" fill="#7a4e46"/><rect x="1079.3" y="284.1" width="2.1" height="3.0" fill="#9a948f"/><rect x="990.6" y="401.2" width="6.3" height="5.9" fill="#6e6466"/><rect x="972.5" y="132.4" width="3.2" height="4.0" fill="#8a5a4e"/><rect x="1067.8" y="380.8" width="4.8" height="5.0" fill="#9c6656"/><rect x="1038.3" y="407.3" width="2.7" height="4.8" fill="#8c8884"/><rect x="1160.6" y="302.2" width="5.0" height="4.0" fill="#3e4046"/><rect x="1083.9" y="207.2" width="6.1" height="2.3" fill="#8a5a4e"/><rect x="913.8" y="228.0" width="2.6" height="5.2" fill="#9a948f"/><rect x="890.0" y="141.3" width="5.2" height="2.6" fill="#5e5052"/><rect x="969.9" y="266.6" width="4.0" height="5.9" fill="#a89a98"/><rect x="1154.7" y="313.4" width="5.5" height="4.5" fill="#8a5a4e"/><rect x="982.8" y="310.0" width="6.9" height="2.8" fill="#b8aaa6"/><rect x="1033.0" y="353.5" width="4.7" height="3.1" fill="#a0604c"/><rect x="1133.5" y="257.9" width="4.0" height="4.7" fill="#9a948f"/><rect x="923.3" y="280.6" width="5.5" height="4.8" fill="#8a5a4e"/><rect x="1022.7" y="274.5" width="5.4" height="5.5" fill="#a0604c"/><rect x="877.7" y="125.0" width="4.1" height="5.0" fill="#a89a98"/><rect x="975.7" y="224.7" width="4.5" height="3.2" fill="#3e4046"/><rect x="1110.6" y="230.2" width="5.5" height="5.7" fill="#7a4e46"/><rect x="1122.2" y="204.9" width="6.2" height="4.1" fill="#9c6656"/><rect x="1133.0" y="213.7" width="2.7" height="5.2" fill="#a89a98"/><rect x="1015.8" y="227.3" width="5.8" height="3.7" fill="#a89a98"/><rect x="1169.2" y="357.0" width="2.9" height="3.5" fill="#8a5a4e"/><rect x="893.1" y="212.6" width="6.6" height="4.7" fill="#4a4448"/><rect x="917.3" y="320.6" width="4.1" height="3.0" fill="#5e5052"/><rect x="877.3" y="199.8" width="6.2" height="2.8" fill="#9a948f"/><rect x="1156.9" y="205.3" width="3.3" height="4.8" fill="#7a4e46"/><rect x="875.5" y="395.7" width="2.1" height="2.9" fill="#9c6656"/><rect x="965.9" y="246.9" width="6.9" height="2.6" fill="#b8aaa6"/><rect x="1081.9" y="358.4" width="3.1" height="5.1" fill="#9a948f"/><rect x="925.6" y="191.1" width="2.4" height="5.4" fill="#9a948f"/><rect x="901.0" y="171.5" width="2.9" height="5.7" fill="#8c8884"/><rect x="903.1" y="160.1" width="2.3" height="4.7" fill="#9c6656"/><rect x="997.4" y="369.6" width="2.5" height="5.2" fill="#a0604c"/><rect x="967.1" y="396.3" width="5.7" height="2.2" fill="#a0604c"/><rect x="1107.2" y="273.8" width="5.8" height="2.8" fill="#6e6466"/><rect x="1096.1" y="368.7" width="5.5" height="2.5" fill="#7a4e46"/><rect x="1107.9" y="123.4" width="4.3" height="3.0" fill="#8c8884"/><rect x="1047.8" y="408.7" width="2.1" height="3.0" fill="#4a4448"/><rect x="1080.5" y="334.0" width="2.0" height="5.4" fill="#b8aaa6"/><rect x="991.0" y="277.6" width="5.3" height="5.7" fill="#5e5052"/><rect x="1113.6" y="257.9" width="7.0" height="5.9" fill="#3e4046"/><rect x="1050.7" y="243.9" width="3.7" height="3.6" fill="#3e4046"/><rect x="1150.5" y="367.1" width="3.1" height="4.7" fill="#3e4046"/><rect x="1146.4" y="151.3" width="4.6" height="5.0" fill="#8c8884"/><rect x="1163.9" y="256.2" width="6.6" height="4.8" fill="#4a4448"/><rect x="1084.7" y="222.1" width="2.6" height="4.3" fill="#a89a98"/><rect x="1146.5" y="208.6" width="2.7" height="4.2" fill="#b8aaa6"/><rect x="1116.7" y="154.0" width="7.0" height="4.3" fill="#b8aaa6"/><rect x="917.6" y="410.2" width="3.3" height="5.1" fill="#8c8884"/><rect x="1089.0" y="192.8" width="4.4" height="5.1" fill="#5e5052"/><rect x="1003.6" y="420.5" width="3.5" height="2.2" fill="#5e5052"/><rect x="976.7" y="401.0" width="3.4" height="4.9" fill="#9c6656"/><rect x="1153.4" y="135.8" width="4.5" height="5.2" fill="#9c6656"/><rect x="1079.1" y="353.4" width="4.7" height="4.1" fill="#8c8884"/><rect x="921.7" y="181.5" width="4.1" height="4.8" fill="#a0604c"/><rect x="933.2" y="233.5" width="5.7" height="5.1" fill="#9c6656"/><rect x="1009.4" y="118.3" width="2.7" height="5.2" fill="#9c6656"/><rect x="1193.3" y="295.3" width="3.6" height="3.0" fill="#a0604c"/><rect x="910.5" y="328.2" width="4.0" height="2.4" fill="#4a4448"/><rect x="1104.2" y="366.9" width="6.0" height="4.4" fill="#9c6656"/><rect x="899.0" y="288.0" width="6.8" height="5.1" fill="#9c6656"/><rect x="952.2" y="276.5" width="6.7" height="3.0" fill="#8a5a4e"/><rect x="1068.9" y="193.4" width="4.2" height="4.1" fill="#a89a98"/><rect x="892.9" y="237.4" width="6.1" height="2.5" fill="#9c6656"/><rect x="1003.1" y="273.4" width="5.8" height="5.2" fill="#9a948f"/><rect x="878.7" y="129.8" width="5.7" height="3.0" fill="#3e4046"/><rect x="880.1" y="172.8" width="2.9" height="3.4" fill="#9a948f"/><rect x="913.1" y="392.8" width="6.9" height="2.4" fill="#8e8084"/><rect x="1179.6" y="308.3" width="6.2" height="5.8" fill="#4a4448"/><rect x="1145.2" y="120.2" width="2.9" height="4.6" fill="#8e8084"/><rect x="1124.3" y="158.9" width="2.4" height="4.1" fill="#b8aaa6"/><rect x="1043.3" y="245.2" width="6.9" height="3.4" fill="#3e4046"/><rect x="956.2" y="374.1" width="6.8" height="4.7" fill="#4a4448"/><rect x="1178.9" y="415.8" width="5.1" height="2.9" fill="#b8aaa6"/><rect x="964.8" y="166.7" width="6.5" height="3.4" fill="#4a4448"/><rect x="1055.7" y="399.2" width="6.5" height="4.8" fill="#4a4448"/><rect x="1033.1" y="112.6" width="6.5" height="2.8" fill="#8a5a4e"/><rect x="1003.8" y="416.4" width="3.3" height="4.9" fill="#7a4e46"/><rect x="1190.3" y="429.9" width="3.8" height="5.8" fill="#7a4e46"/><rect x="1043.9" y="291.9" width="3.0" height="5.2" fill="#4a4448"/><rect x="982.4" y="353.3" width="4.1" height="3.4" fill="#8a5a4e"/><rect x="1051.2" y="153.1" width="4.3" height="2.2" fill="#7a4e46"/><rect x="1172.6" y="409.6" width="5.6" height="5.4" fill="#8e8084"/><rect x="894.3" y="305.9" width="3.1" height="2.9" fill="#5e5052"/><rect x="979.2" y="365.9" width="4.7" height="5.2" fill="#9c6656"/><rect x="1031.3" y="246.3" width="2.1" height="3.4" fill="#a0604c"/><rect x="1032.1" y="172.8" width="6.4" height="4.8" fill="#7a4e46"/><rect x="1135.2" y="366.0" width="4.5" height="4.0" fill="#9c6656"/><rect x="1009.4" y="374.6" width="5.4" height="2.5" fill="#5e5052"/><rect x="1181.8" y="409.8" width="4.0" height="4.0" fill="#9c6656"/><rect x="1098.7" y="225.6" width="5.0" height="4.5" fill="#8a5a4e"/><rect x="1015.0" y="198.7" width="3.8" height="2.7" fill="#8c8884"/><rect x="960.6" y="364.9" width="3.7" height="5.7" fill="#8a5a4e"/><rect x="1191.1" y="139.2" width="5.4" height="3.3" fill="#3e4046"/><rect x="1091.3" y="395.6" width="6.9" height="5.2" fill="#8a5a4e"/><rect x="1119.3" y="246.2" width="2.9" height="3.8" fill="#a89a98"/><rect x="1111.0" y="295.6" width="2.7" height="3.1" fill="#9c6656"/><rect x="1106.8" y="417.4" width="6.0" height="2.1" fill="#7a4e46"/><rect x="1189.0" y="177.3" width="3.3" height="2.8" fill="#5e5052"/><rect x="1024.7" y="414.5" width="6.3" height="2.8" fill="#8a5a4e"/><rect x="976.0" y="325.6" width="6.7" height="2.2" fill="#4a4448"/><rect x="909.1" y="309.3" width="2.9" height="2.1" fill="#8a5a4e"/><rect x="1089.9" y="418.9" width="4.9" height="4.4" fill="#8c8884"/><rect x="1171.1" y="221.9" width="3.4" height="3.4" fill="#a0604c"/><rect x="1171.4" y="410.6" width="5.3" height="5.8" fill="#b8aaa6"/><rect x="951.4" y="130.4" width="3.8" height="2.6" fill="#b8aaa6"/><rect x="1113.5" y="255.9" width="2.6" height="4.2" fill="#6e6466"/><rect x="1019.6" y="220.3" width="3.8" height="4.7" fill="#8c8884"/><rect x="1137.2" y="251.2" width="4.3" height="3.7" fill="#8e8084"/><rect x="982.9" y="130.8" width="3.9" height="5.1" fill="#5e5052"/><rect x="944.1" y="113.5" width="5.4" height="5.1" fill="#8e8084"/><rect x="1022.8" y="131.1" width="5.5" height="4.6" fill="#9a948f"/><rect x="1145.9" y="156.0" width="6.6" height="3.7" fill="#6e6466"/><rect x="1084.0" y="322.0" width="2.8" height="4.1" fill="#9c6656"/><rect x="894.3" y="313.5" width="5.6" height="4.8" fill="#a89a98"/><rect x="1159.6" y="254.8" width="2.7" height="5.8" fill="#3e4046"/><rect x="1053.0" y="278.9" width="3.1" height="4.1" fill="#8a5a4e"/><rect x="1031.4" y="267.1" width="5.0" height="5.1" fill="#a89a98"/><rect x="1085.5" y="274.1" width="4.7" height="5.4" fill="#5e5052"/><rect x="1127.6" y="157.1" width="5.9" height="3.7" fill="#7a4e46"/><rect x="1139.0" y="213.6" width="6.6" height="5.2" fill="#9a948f"/><rect x="1117.4" y="236.5" width="4.6" height="5.1" fill="#8a5a4e"/><rect x="978.1" y="344.5" width="2.2" height="5.4" fill="#b8aaa6"/><rect x="1069.6" y="347.3" width="3.9" height="4.7" fill="#8a5a4e"/><rect x="993.6" y="279.9" width="4.4" height="5.4" fill="#6e6466"/><rect x="1116.5" y="237.6" width="5.1" height="3.9" fill="#8e8084"/><rect x="1189.1" y="272.5" width="5.7" height="3.6" fill="#8a5a4e"/><rect x="960.7" y="315.4" width="6.1" height="3.2" fill="#3e4046"/><rect x="1063.5" y="258.4" width="2.1" height="3.0" fill="#8e8084"/><rect x="1177.5" y="158.6" width="3.1" height="2.5" fill="#b8aaa6"/><rect x="978.5" y="213.5" width="2.7" height="3.1" fill="#5e5052"/><rect x="901.8" y="321.8" width="4.4" height="5.0" fill="#a89a98"/><rect x="987.9" y="383.9" width="3.1" height="4.6" fill="#8a5a4e"/><rect x="1034.2" y="163.8" width="4.9" height="4.9" fill="#8e8084"/><rect x="910.5" y="259.5" width="3.1" height="3.3" fill="#6e6466"/><rect x="961.8" y="410.1" width="3.4" height="3.2" fill="#b8aaa6"/><rect x="889.6" y="300.1" width="2.8" height="3.6" fill="#8e8084"/><rect x="947.2" y="165.9" width="4.2" height="3.1" fill="#5e5052"/><rect x="1044.5" y="430.5" width="5.4" height="2.1" fill="#a89a98"/><rect x="974.5" y="154.0" width="4.2" height="3.5" fill="#9a948f"/><rect x="1102.2" y="330.0" width="2.4" height="4.8" fill="#7a4e46"/><rect x="1026.5" y="159.6" width="2.1" height="3.1" fill="#7a4e46"/><rect x="923.7" y="431.4" width="2.2" height="5.5" fill="#9a948f"/><rect x="1073.5" y="118.3" width="5.7" height="5.2" fill="#8e8084"/><rect x="976.7" y="204.9" width="2.5" height="4.8" fill="#6e6466"/><rect x="992.5" y="216.6" width="6.1" height="5.9" fill="#8e8084"/><rect x="1129.0" y="174.9" width="5.6" height="4.4" fill="#4a4448"/><rect x="974.8" y="343.7" width="6.9" height="3.9" fill="#9c6656"/><rect x="1003.6" y="246.5" width="6.0" height="5.9" fill="#8c8884"/><rect x="995.0" y="377.4" width="2.7" height="5.9" fill="#9a948f"/><rect x="1045.6" y="235.5" width="2.0" height="4.1" fill="#8e8084"/><rect x="1124.4" y="160.9" width="2.2" height="3.8" fill="#6e6466"/><rect x="880.0" y="226.5" width="5.9" height="4.7" fill="#5e5052"/><rect x="983.9" y="368.5" width="2.8" height="4.3" fill="#9a948f"/><rect x="1028.4" y="291.4" width="6.0" height="4.0" fill="#4a4448"/><rect x="1057.9" y="329.1" width="6.5" height="3.9" fill="#b8aaa6"/><rect x="1124.2" y="231.6" width="5.4" height="3.5" fill="#9a948f"/><rect x="1176.8" y="360.6" width="3.9" height="3.4" fill="#a89a98"/><rect x="1161.7" y="294.1" width="5.8" height="3.1" fill="#a0604c"/><rect x="895.6" y="397.1" width="4.9" height="6.0" fill="#9a948f"/><rect x="1004.8" y="125.2" width="4.2" height="4.5" fill="#3e4046"/><rect x="1149.4" y="392.6" width="5.6" height="2.9" fill="#4a4448"/><rect x="1023.4" y="423.9" width="5.9" height="5.2" fill="#a89a98"/><rect x="1189.8" y="312.2" width="6.9" height="5.6" fill="#7a4e46"/><rect x="951.5" y="124.3" width="5.1" height="5.1" fill="#5e5052"/><rect x="1112.5" y="207.5" width="5.4" height="3.5" fill="#8c8884"/><rect x="1146.5" y="299.0" width="5.7" height="2.4" fill="#3e4046"/><rect x="876.5" y="398.5" width="4.6" height="4.6" fill="#8c8884"/><rect x="1160.8" y="234.9" width="6.9" height="3.6" fill="#9a948f"/><rect x="1176.7" y="189.6" width="6.0" height="3.2" fill="#8e8084"/><rect x="924.4" y="176.7" width="5.3" height="2.7" fill="#9c6656"/><rect x="1128.8" y="290.6" width="5.2" height="3.2" fill="#8c8884"/><rect x="918.3" y="370.7" width="6.5" height="5.2" fill="#8c8884"/><rect x="955.5" y="384.5" width="5.2" height="3.8" fill="#5e5052"/><rect x="1085.7" y="424.9" width="5.8" height="4.8" fill="#6e6466"/><rect x="934.3" y="284.9" width="3.6" height="3.1" fill="#9a948f"/><rect x="1191.8" y="413.6" width="3.0" height="4.6" fill="#3e4046"/><rect x="885.2" y="381.5" width="4.8" height="4.3" fill="#5e5052"/><rect x="1121.7" y="327.6" width="4.1" height="4.1" fill="#a89a98"/><rect x="1072.8" y="241.8" width="6.5" height="5.6" fill="#b8aaa6"/><rect x="931.3" y="375.8" width="2.8" height="6.0" fill="#8c8884"/><rect x="1141.5" y="153.3" width="6.2" height="3.2" fill="#6e6466"/><rect x="909.2" y="366.0" width="3.5" height="3.3" fill="#5e5052"/><rect x="930.2" y="203.8" width="3.9" height="4.6" fill="#8e8084"/><rect x="1127.7" y="282.7" width="3.5" height="3.7" fill="#4a4448"/><rect x="1107.3" y="154.0" width="2.2" height="4.7" fill="#9c6656"/><rect x="963.0" y="161.0" width="2.5" height="3.6" fill="#9a948f"/><rect x="892.9" y="139.2" width="3.8" height="5.5" fill="#8c8884"/><rect x="1186.7" y="256.5" width="3.6" height="4.0" fill="#4a4448"/><rect x="1193.0" y="409.1" width="6.0" height="5.6" fill="#b8aaa6"/><rect x="1093.0" y="420.4" width="3.7" height="3.7" fill="#a89a98"/><rect x="1164.4" y="137.6" width="6.6" height="4.9" fill="#5e5052"/><rect x="1028.3" y="202.2" width="4.9" height="5.1" fill="#9c6656"/><rect x="1075.0" y="317.5" width="3.2" height="4.5" fill="#3e4046"/><rect x="1030.2" y="290.8" width="6.6" height="5.8" fill="#8c8884"/><rect x="964.7" y="409.9" width="5.6" height="4.9" fill="#5e5052"/><rect x="1180.2" y="140.3" width="4.0" height="2.8" fill="#9a948f"/><rect x="971.8" y="267.4" width="2.3" height="4.8" fill="#a0604c"/><rect x="1002.8" y="425.0" width="4.5" height="5.6" fill="#4a4448"/><rect x="955.5" y="302.9" width="2.2" height="5.7" fill="#9a948f"/><rect x="955.1" y="390.4" width="6.6" height="5.8" fill="#8c8884"/><rect x="898.5" y="302.3" width="6.8" height="5.8" fill="#8c8884"/><rect x="1129.1" y="243.1" width="6.9" height="5.5" fill="#8e8084"/><rect x="941.0" y="387.1" width="2.4" height="5.5" fill="#9a948f"/><rect x="907.6" y="321.9" width="4.2" height="2.2" fill="#5e5052"/><rect x="1062.3" y="116.2" width="6.1" height="3.8" fill="#7a4e46"/><rect x="904.0" y="151.0" width="5.0" height="2.5" fill="#3e4046"/><rect x="1074.9" y="404.4" width="2.3" height="3.3" fill="#7a4e46"/><rect x="1095.3" y="233.8" width="5.8" height="2.4" fill="#7a4e46"/><rect x="1188.4" y="212.3" width="3.7" height="4.0" fill="#a0604c"/><rect x="1117.4" y="228.3" width="6.1" height="2.0" fill="#a89a98"/><rect x="1180.6" y="431.6" width="6.0" height="2.5" fill="#a0604c"/><rect x="1156.2" y="214.9" width="2.4" height="5.9" fill="#9c6656"/><rect x="920.0" y="379.6" width="5.4" height="5.8" fill="#7a4e46"/><rect x="1067.6" y="288.7" width="2.6" height="3.3" fill="#a89a98"/><rect x="885.6" y="268.1" width="2.7" height="2.2" fill="#9c6656"/><rect x="885.1" y="176.5" width="2.7" height="5.7" fill="#6e6466"/><rect x="942.3" y="322.1" width="3.1" height="2.3" fill="#a0604c"/><rect x="908.8" y="228.2" width="3.5" height="5.8" fill="#a89a98"/><rect x="1170.9" y="272.6" width="5.0" height="4.5" fill="#6e6466"/><rect x="899.1" y="364.0" width="5.0" height="3.1" fill="#8c8884"/><rect x="1012.8" y="426.7" width="4.8" height="5.8" fill="#a89a98"/><rect x="1053.3" y="148.4" width="4.2" height="5.6" fill="#9a948f"/><rect x="1002.5" y="167.3" width="6.0" height="3.6" fill="#6e6466"/><rect x="1049.7" y="145.1" width="6.2" height="3.7" fill="#8c8884"/><rect x="1110.6" y="248.5" width="2.9" height="3.7" fill="#b8aaa6"/><rect x="1053.6" y="222.1" width="5.0" height="2.2" fill="#5e5052"/><rect x="971.3" y="123.5" width="5.3" height="5.8" fill="#7a4e46"/><rect x="1075.8" y="374.7" width="2.6" height="5.8" fill="#5e5052"/><rect x="1133.9" y="212.0" width="6.3" height="2.4" fill="#b8aaa6"/><rect x="964.5" y="267.0" width="4.5" height="5.8" fill="#6e6466"/><rect x="1131.3" y="388.6" width="4.4" height="5.6" fill="#6e6466"/><rect x="1158.6" y="351.6" width="4.7" height="2.2" fill="#3e4046"/><rect x="885.3" y="247.7" width="2.8" height="5.9" fill="#7a4e46"/><rect x="999.4" y="375.1" width="6.2" height="5.0" fill="#4a4448"/><rect x="1037.3" y="148.1" width="5.4" height="5.9" fill="#9c6656"/><rect x="1056.3" y="355.4" width="5.7" height="4.9" fill="#8e8084"/><rect x="938.0" y="352.9" width="5.4" height="2.7" fill="#5e5052"/><rect x="1085.9" y="426.3" width="6.0" height="3.9" fill="#a0604c"/><rect x="1176.2" y="334.4" width="2.4" height="3.5" fill="#9a948f"/><rect x="916.5" y="135.7" width="5.3" height="5.8" fill="#a0604c"/><rect x="1027.3" y="142.8" width="5.6" height="2.9" fill="#9a948f"/><rect x="909.4" y="313.6" width="5.2" height="2.8" fill="#5e5052"/><rect x="1041.5" y="236.4" width="5.8" height="4.5" fill="#a89a98"/><rect x="1143.4" y="309.4" width="3.2" height="3.3" fill="#8a5a4e"/><rect x="1064.2" y="279.6" width="6.5" height="6.0" fill="#9c6656"/><rect x="1073.9" y="361.5" width="5.6" height="3.6" fill="#4a4448"/><rect x="891.8" y="137.1" width="6.1" height="5.0" fill="#3e4046"/><rect x="1128.5" y="156.6" width="3.3" height="3.4" fill="#8c8884"/><rect x="1043.2" y="173.5" width="3.6" height="4.9" fill="#8c8884"/><rect x="888.9" y="154.1" width="5.4" height="2.5" fill="#8c8884"/><rect x="892.4" y="128.8" width="7.0" height="3.6" fill="#a0604c"/><rect x="1038.0" y="208.4" width="2.1" height="2.3" fill="#a89a98"/><rect x="1111.8" y="362.1" width="5.5" height="2.7" fill="#4a4448"/><rect x="1130.2" y="193.2" width="2.7" height="5.9" fill="#9a948f"/><rect x="883.1" y="332.9" width="4.3" height="4.1" fill="#9c6656"/><rect x="1155.1" y="247.8" width="4.1" height="4.3" fill="#4a4448"/><rect x="1008.5" y="159.8" width="5.8" height="4.8" fill="#b8aaa6"/><rect x="926.0" y="304.7" width="2.3" height="4.9" fill="#7a4e46"/><rect x="1134.0" y="196.3" width="6.5" height="3.3" fill="#b8aaa6"/><rect x="902.7" y="347.3" width="5.2" height="4.7" fill="#6e6466"/><rect x="1022.1" y="299.5" width="6.0" height="3.7" fill="#7a4e46"/><rect x="944.6" y="278.2" width="2.7" height="2.7" fill="#6e6466"/><rect x="879.3" y="368.9" width="6.2" height="3.9" fill="#5e5052"/><rect x="1131.1" y="286.2" width="5.4" height="2.3" fill="#8e8084"/><rect x="1177.1" y="359.5" width="4.8" height="3.4" fill="#9c6656"/><rect x="1066.3" y="232.2" width="5.4" height="5.5" fill="#9c6656"/><rect x="1184.7" y="421.0" width="4.0" height="6.0" fill="#8c8884"/><rect x="996.5" y="359.2" width="6.8" height="4.2" fill="#6e6466"/><rect x="906.8" y="397.1" width="5.4" height="4.4" fill="#a89a98"/><rect x="1091.3" y="309.0" width="6.8" height="3.8" fill="#9c6656"/><rect x="1104.1" y="392.3" width="2.4" height="2.1" fill="#6e6466"/><rect x="937.1" y="372.3" width="4.0" height="2.9" fill="#8a5a4e"/><rect x="948.2" y="180.3" width="6.9" height="2.6" fill="#b8aaa6"/><rect x="967.2" y="393.8" width="5.8" height="3.0" fill="#a89a98"/><rect x="930.5" y="300.1" width="2.9" height="4.6" fill="#4a4448"/><rect x="1036.7" y="187.1" width="4.1" height="5.0" fill="#a0604c"/><rect x="933.7" y="168.0" width="6.6" height="2.2" fill="#a89a98"/><rect x="1025.5" y="122.5" width="2.6" height="4.8" fill="#7a4e46"/><rect x="896.0" y="401.9" width="2.5" height="4.2" fill="#a0604c"/><rect x="937.4" y="371.8" width="3.0" height="5.0" fill="#8c8884"/><rect x="894.3" y="175.2" width="6.4" height="4.4" fill="#8c8884"/><rect x="987.2" y="260.0" width="4.8" height="4.9" fill="#3e4046"/><rect x="1168.2" y="162.6" width="3.7" height="4.8" fill="#5e5052"/><rect x="1024.8" y="363.8" width="2.5" height="4.6" fill="#8e8084"/><rect x="1027.5" y="133.7" width="4.5" height="3.7" fill="#a0604c"/><rect x="1107.3" y="339.7" width="6.6" height="3.7" fill="#9c6656"/><rect x="985.1" y="167.5" width="5.3" height="3.8" fill="#4a4448"/><rect x="1017.6" y="120.9" width="3.1" height="5.0" fill="#4a4448"/><rect x="974.4" y="431.5" width="6.3" height="4.0" fill="#a0604c"/><rect x="875.8" y="239.7" width="4.7" height="2.2" fill="#7a4e46"/><rect x="923.1" y="297.3" width="3.4" height="3.5" fill="#4a4448"/><rect x="1146.9" y="252.3" width="4.2" height="5.3" fill="#8c8884"/><rect x="900.9" y="423.4" width="2.5" height="2.9" fill="#6e6466"/><rect x="876.2" y="349.3" width="6.5" height="3.4" fill="#9c6656"/><rect x="1059.3" y="311.4" width="3.3" height="3.4" fill="#4a4448"/><rect x="995.6" y="346.8" width="2.5" height="3.1" fill="#3e4046"/><rect x="989.9" y="373.2" width="4.2" height="3.6" fill="#5e5052"/><rect x="907.9" y="376.6" width="2.6" height="4.9" fill="#3e4046"/><rect x="1008.9" y="385.8" width="3.3" height="4.1" fill="#8e8084"/><rect x="1092.7" y="242.6" width="3.8" height="2.9" fill="#b8aaa6"/><rect x="1097.4" y="431.6" width="3.7" height="3.9" fill="#8e8084"/><rect x="1042.8" y="345.4" width="5.4" height="4.6" fill="#a89a98"/><rect x="1049.1" y="197.6" width="6.6" height="3.5" fill="#7a4e46"/><rect x="1056.9" y="220.5" width="4.8" height="5.7" fill="#9a948f"/><rect x="946.5" y="182.5" width="4.0" height="2.5" fill="#9c6656"/><rect x="1142.0" y="316.5" width="5.2" height="3.2" fill="#8c8884"/><rect x="949.8" y="338.3" width="3.8" height="4.0" fill="#5e5052"/><rect x="914.1" y="359.5" width="2.2" height="3.3" fill="#8a5a4e"/><rect x="1165.8" y="326.5" width="4.2" height="4.0" fill="#8a5a4e"/><rect x="993.3" y="177.2" width="3.7" height="4.5" fill="#a89a98"/><rect x="1133.0" y="117.8" width="4.0" height="3.0" fill="#b8aaa6"/><rect x="1073.2" y="206.2" width="5.4" height="3.6" fill="#8a5a4e"/><rect x="911.9" y="115.2" width="6.2" height="3.9" fill="#4a4448"/><rect x="968.8" y="408.8" width="5.6" height="3.9" fill="#8c8884"/><rect x="890.2" y="214.3" width="4.4" height="4.3" fill="#3e4046"/><rect x="1113.7" y="206.7" width="3.2" height="3.7" fill="#6e6466"/><rect x="1113.7" y="250.8" width="3.2" height="5.3" fill="#5e5052"/><rect x="1134.1" y="199.4" width="5.7" height="5.3" fill="#8c8884"/><rect x="1117.6" y="325.0" width="2.3" height="3.9" fill="#b8aaa6"/><rect x="1040.9" y="145.4" width="2.4" height="2.3" fill="#8e8084"/><rect x="1034.2" y="262.3" width="2.9" height="4.7" fill="#4a4448"/><rect x="1084.8" y="114.3" width="4.0" height="5.1" fill="#7a4e46"/><rect x="1143.3" y="259.2" width="6.1" height="3.7" fill="#7a4e46"/><rect x="880.5" y="337.0" width="2.8" height="4.4" fill="#a0604c"/><rect x="968.0" y="313.4" width="4.5" height="2.1" fill="#8e8084"/><rect x="1155.1" y="170.2" width="5.6" height="3.5" fill="#9a948f"/><rect x="905.2" y="184.3" width="6.1" height="5.2" fill="#9c6656"/><rect x="1024.9" y="340.5" width="2.8" height="5.6" fill="#8e8084"/><rect x="1105.4" y="182.1" width="3.3" height="5.1" fill="#4a4448"/><rect x="952.2" y="252.2" width="3.0" height="4.9" fill="#9a948f"/><rect x="1119.3" y="132.8" width="3.1" height="2.5" fill="#5e5052"/><rect x="901.1" y="340.9" width="4.7" height="5.7" fill="#a89a98"/><rect x="1085.3" y="376.6" width="4.5" height="3.2" fill="#8a5a4e"/><rect x="1020.6" y="353.9" width="5.8" height="4.7" fill="#9c6656"/><rect x="1021.1" y="406.1" width="3.9" height="2.6" fill="#8c8884"/><rect x="1105.5" y="207.8" width="4.7" height="4.1" fill="#5e5052"/><rect x="1033.2" y="268.3" width="3.9" height="5.1" fill="#6e6466"/><rect x="1014.4" y="398.7" width="3.0" height="3.7" fill="#5e5052"/><rect x="950.1" y="343.7" width="3.4" height="3.6" fill="#4a4448"/><rect x="1186.9" y="214.4" width="5.4" height="3.5" fill="#6e6466"/><rect x="926.1" y="119.3" width="4.2" height="5.0" fill="#a0604c"/><rect x="1134.9" y="280.4" width="3.2" height="5.6" fill="#a0604c"/><rect x="1003.9" y="131.9" width="4.0" height="5.0" fill="#8e8084"/><rect x="1172.0" y="430.0" width="4.3" height="5.8" fill="#9c6656"/><rect x="1069.1" y="196.6" width="2.8" height="4.0" fill="#a0604c"/><rect x="1017.4" y="392.7" width="3.5" height="3.8" fill="#9c6656"/><rect x="973.4" y="284.2" width="5.2" height="3.3" fill="#5e5052"/><rect x="989.7" y="218.2" width="5.6" height="3.5" fill="#9a948f"/><rect x="1059.0" y="334.8" width="3.9" height="2.6" fill="#8e8084"/><rect x="1018.5" y="338.1" width="4.3" height="3.9" fill="#4a4448"/><rect x="938.9" y="117.6" width="4.8" height="4.3" fill="#a0604c"/><rect x="888.1" y="389.9" width="4.5" height="5.9" fill="#3e4046"/><rect x="1006.0" y="221.3" width="4.2" height="5.1" fill="#4a4448"/><rect x="1076.3" y="277.0" width="2.1" height="3.5" fill="#8e8084"/><rect x="1113.2" y="269.6" width="4.9" height="3.7" fill="#b8aaa6"/><rect x="1085.7" y="278.8" width="5.6" height="4.7" fill="#3e4046"/><rect x="1119.5" y="186.1" width="5.3" height="5.5" fill="#6e6466"/><rect x="1066.2" y="359.8" width="2.2" height="5.4" fill="#a0604c"/><rect x="1067.3" y="210.6" width="6.1" height="2.7" fill="#a0604c"/><rect x="932.2" y="133.5" width="3.2" height="4.5" fill="#a89a98"/><rect x="903.3" y="205.7" width="5.8" height="4.8" fill="#7a4e46"/><rect x="921.8" y="306.6" width="5.2" height="2.9" fill="#5e5052"/><rect x="951.8" y="115.4" width="4.8" height="2.6" fill="#a0604c"/><rect x="1089.6" y="179.9" width="5.7" height="4.5" fill="#a89a98"/><rect x="908.4" y="390.4" width="4.8" height="4.6" fill="#9a948f"/><rect x="1184.9" y="403.0" width="4.2" height="5.7" fill="#a0604c"/><rect x="985.6" y="172.4" width="3.2" height="4.0" fill="#7a4e46"/><rect x="967.3" y="120.1" width="5.5" height="3.7" fill="#3e4046"/><rect x="1005.9" y="338.9" width="3.3" height="3.9" fill="#3e4046"/><rect x="920.8" y="143.7" width="3.6" height="5.1" fill="#a89a98"/><rect x="993.8" y="284.7" width="2.7" height="3.6" fill="#9a948f"/><rect x="1139.6" y="373.6" width="6.6" height="2.9" fill="#8a5a4e"/><rect x="947.5" y="239.4" width="5.7" height="4.1" fill="#3e4046"/><rect x="1103.6" y="181.6" width="5.0" height="3.7" fill="#7a4e46"/><rect x="1079.7" y="165.6" width="5.3" height="2.7" fill="#a0604c"/><rect x="1015.3" y="256.6" width="3.0" height="2.6" fill="#9a948f"/><rect x="1021.8" y="120.4" width="2.2" height="5.4" fill="#a89a98"/><rect x="927.3" y="355.7" width="4.2" height="2.6" fill="#7a4e46"/><rect x="986.0" y="190.0" width="6.2" height="3.9" fill="#7a4e46"/><rect x="885.0" y="407.9" width="5.5" height="5.3" fill="#a89a98"/><rect x="1113.1" y="217.8" width="2.8" height="4.6" fill="#3e4046"/><rect x="966.5" y="400.2" width="6.2" height="5.7" fill="#7a4e46"/><rect x="1152.7" y="168.5" width="5.8" height="3.1" fill="#a0604c"/><rect x="881.6" y="282.2" width="4.8" height="2.8" fill="#6e6466"/><rect x="1131.6" y="192.0" width="2.3" height="3.9" fill="#8e8084"/><rect x="1009.9" y="152.8" width="4.9" height="3.2" fill="#9c6656"/><rect x="901.8" y="325.0" width="4.0" height="3.8" fill="#5e5052"/><rect x="1107.4" y="405.3" width="3.8" height="4.3" fill="#3e4046"/><rect x="1182.7" y="417.4" width="2.2" height="4.7" fill="#9c6656"/><rect x="1049.0" y="124.9" width="2.6" height="3.7" fill="#7a4e46"/><rect x="1105.2" y="270.1" width="6.5" height="3.2" fill="#8e8084"/><rect x="1070.2" y="358.7" width="2.6" height="5.5" fill="#b8aaa6"/><rect x="1064.8" y="376.7" width="4.8" height="3.7" fill="#7a4e46"/><rect x="1068.5" y="146.2" width="6.6" height="3.7" fill="#b8aaa6"/><rect x="1041.3" y="414.3" width="3.9" height="2.1" fill="#a89a98"/><rect x="1073.2" y="244.0" width="6.0" height="4.0" fill="#a89a98"/><rect x="1107.0" y="172.4" width="6.3" height="4.3" fill="#7a4e46"/><rect x="976.9" y="284.2" width="7.0" height="5.5" fill="#a89a98"/><rect x="893.1" y="158.7" width="5.0" height="4.7" fill="#b8aaa6"/><rect x="932.6" y="363.7" width="5.6" height="3.4" fill="#8c8884"/><rect x="987.8" y="238.2" width="4.0" height="5.5" fill="#6e6466"/><rect x="1061.0" y="299.9" width="3.8" height="5.7" fill="#4a4448"/><rect x="957.0" y="207.5" width="3.0" height="4.8" fill="#9a948f"/><rect x="879.9" y="315.8" width="2.5" height="4.1" fill="#9a948f"/><rect x="1051.7" y="321.4" width="2.0" height="2.2" fill="#6e6466"/><rect x="1153.6" y="139.1" width="3.1" height="3.7" fill="#9c6656"/><rect x="974.2" y="418.0" width="2.5" height="5.6" fill="#8a5a4e"/><rect x="1167.4" y="328.3" width="4.2" height="4.1" fill="#8e8084"/><rect x="987.8" y="417.6" width="6.5" height="3.1" fill="#8c8884"/><rect x="1072.9" y="416.1" width="7.0" height="3.8" fill="#8c8884"/><rect x="1059.1" y="405.6" width="4.2" height="3.8" fill="#7a4e46"/><rect x="994.2" y="301.4" width="3.4" height="2.7" fill="#8c8884"/><rect x="898.2" y="250.1" width="3.6" height="4.2" fill="#b8aaa6"/><rect x="1140.8" y="418.7" width="6.8" height="3.1" fill="#4a4448"/><rect x="1042.2" y="327.9" width="3.5" height="5.0" fill="#6e6466"/><rect x="966.8" y="145.4" width="2.9" height="3.1" fill="#3e4046"/><rect x="1181.3" y="240.0" width="6.7" height="5.6" fill="#8e8084"/><rect x="1049.2" y="369.3" width="5.1" height="5.5" fill="#7a4e46"/><rect x="1053.9" y="119.2" width="4.3" height="4.5" fill="#a0604c"/><rect x="1026.7" y="268.8" width="4.3" height="2.7" fill="#8a5a4e"/><rect x="1174.2" y="422.9" width="3.8" height="4.2" fill="#a89a98"/><rect x="1118.0" y="138.0" width="5.4" height="3.3" fill="#a0604c"/><rect x="936.3" y="388.5" width="3.7" height="5.9" fill="#8c8884"/><rect x="1156.5" y="141.8" width="4.6" height="4.4" fill="#6e6466"/><rect x="980.0" y="305.9" width="6.8" height="5.9" fill="#b8aaa6"/><rect x="1008.4" y="368.4" width="3.6" height="3.4" fill="#a89a98"/><rect x="1091.7" y="234.5" width="5.6" height="3.4" fill="#3e4046"/><rect x="1040.8" y="134.0" width="2.2" height="3.3" fill="#6e6466"/><rect x="970.5" y="230.4" width="4.1" height="5.9" fill="#a0604c"/><rect x="1189.8" y="291.9" width="2.1" height="3.9" fill="#5e5052"/><rect x="1042.8" y="275.5" width="3.8" height="2.7" fill="#3e4046"/><rect x="917.6" y="133.1" width="2.2" height="4.2" fill="#9c6656"/><rect x="1058.9" y="147.8" width="5.8" height="3.8" fill="#b8aaa6"/><rect x="882.2" y="415.8" width="3.5" height="4.5" fill="#a0604c"/><rect x="1123.9" y="155.6" width="3.9" height="5.6" fill="#8e8084"/><rect x="885.8" y="427.5" width="2.6" height="3.0" fill="#a89a98"/><rect x="891.3" y="242.8" width="4.2" height="4.7" fill="#8c8884"/><rect x="955.1" y="266.1" width="5.8" height="2.9" fill="#8e8084"/><rect x="876.6" y="197.4" width="5.1" height="5.6" fill="#9c6656"/><rect x="954.9" y="221.6" width="6.0" height="3.7" fill="#a0604c"/><rect x="898.1" y="129.0" width="3.1" height="4.5" fill="#8a5a4e"/><rect x="1134.4" y="300.8" width="5.0" height="3.1" fill="#8a5a4e"/><rect x="1007.7" y="306.8" width="5.7" height="4.7" fill="#a89a98"/><rect x="945.0" y="140.2" width="3.3" height="4.5" fill="#a0604c"/><rect x="1044.9" y="299.0" width="5.3" height="3.9" fill="#4a4448"/><rect x="1148.6" y="366.3" width="3.2" height="5.5" fill="#8e8084"/><rect x="1033.7" y="423.8" width="6.1" height="4.2" fill="#6e6466"/><rect x="970.2" y="318.1" width="6.6" height="2.7" fill="#7a4e46"/><rect x="957.2" y="265.3" width="4.9" height="2.4" fill="#5e5052"/><rect x="1128.0" y="357.1" width="5.8" height="2.2" fill="#7a4e46"/><rect x="1026.4" y="327.7" width="4.1" height="4.4" fill="#b8aaa6"/><rect x="1178.1" y="155.2" width="6.0" height="4.3" fill="#8e8084"/><rect x="1101.6" y="254.1" width="3.3" height="2.5" fill="#5e5052"/><rect x="1096.8" y="302.6" width="3.7" height="3.3" fill="#3e4046"/><rect x="1102.0" y="358.5" width="4.0" height="5.5" fill="#a89a98"/><rect x="928.5" y="136.3" width="3.9" height="4.1" fill="#3e4046"/><rect x="902.8" y="202.9" width="4.0" height="3.9" fill="#8a5a4e"/><rect x="888.7" y="164.0" width="3.9" height="2.7" fill="#3e4046"/><rect x="1058.3" y="410.4" width="5.6" height="5.4" fill="#a0604c"/><rect x="1088.5" y="129.3" width="3.6" height="4.3" fill="#a89a98"/><rect x="1073.7" y="224.7" width="2.8" height="3.3" fill="#5e5052"/><rect x="970.9" y="261.9" width="6.4" height="2.6" fill="#5e5052"/><rect x="914.1" y="342.3" width="5.9" height="2.5" fill="#6e6466"/><rect x="997.9" y="273.9" width="3.6" height="3.4" fill="#a89a98"/><rect x="1186.3" y="430.1" width="6.5" height="4.0" fill="#5e5052"/><rect x="1035.8" y="364.8" width="2.6" height="3.1" fill="#6e6466"/><rect x="1038.9" y="409.9" width="7.0" height="2.9" fill="#8c8884"/><rect x="937.2" y="145.3" width="6.5" height="6.0" fill="#8e8084"/><rect x="1036.8" y="350.5" width="5.4" height="3.8" fill="#a0604c"/><rect x="1039.5" y="227.7" width="6.8" height="2.5" fill="#5e5052"/><rect x="974.7" y="163.5" width="4.1" height="4.3" fill="#9c6656"/><rect x="1174.2" y="361.1" width="3.0" height="4.0" fill="#9c6656"/><rect x="1133.8" y="184.2" width="4.4" height="4.4" fill="#8a5a4e"/><rect x="1038.3" y="240.7" width="5.1" height="4.2" fill="#6e6466"/><rect x="1058.3" y="280.4" width="3.7" height="2.3" fill="#9a948f"/><rect x="1009.6" y="207.7" width="4.6" height="2.5" fill="#4a4448"/><rect x="1097.0" y="370.4" width="6.8" height="2.2" fill="#8c8884"/><rect x="1020.2" y="360.7" width="5.7" height="2.4" fill="#b8aaa6"/><rect x="1166.4" y="351.7" width="3.6" height="3.0" fill="#a89a98"/><rect x="962.6" y="370.9" width="5.2" height="3.2" fill="#9a948f"/><rect x="1134.9" y="366.6" width="4.7" height="2.5" fill="#6e6466"/><rect x="1072.8" y="427.4" width="5.5" height="3.9" fill="#b8aaa6"/><rect x="1191.7" y="387.7" width="2.7" height="5.0" fill="#a0604c"/><rect x="1137.6" y="420.8" width="5.4" height="4.0" fill="#a89a98"/><rect x="1126.6" y="359.4" width="3.2" height="2.0" fill="#6e6466"/><rect x="998.2" y="200.4" width="2.2" height="5.1" fill="#a89a98"/><rect x="882.5" y="160.5" width="4.6" height="5.7" fill="#8a5a4e"/><rect x="964.0" y="349.6" width="5.8" height="4.6" fill="#b8aaa6"/><rect x="926.9" y="153.2" width="6.4" height="4.2" fill="#8c8884"/><rect x="1040.4" y="224.8" width="6.5" height="4.5" fill="#8e8084"/><rect x="914.0" y="244.3" width="2.5" height="5.3" fill="#4a4448"/><rect x="1084.6" y="431.6" width="5.2" height="5.5" fill="#8c8884"/><rect x="1132.5" y="302.7" width="4.0" height="3.5" fill="#3e4046"/><rect x="1024.1" y="203.0" width="2.9" height="2.9" fill="#b8aaa6"/><rect x="998.9" y="256.4" width="6.9" height="3.5" fill="#a89a98"/><rect x="1086.7" y="250.8" width="3.7" height="5.5" fill="#3e4046"/><rect x="947.3" y="160.0" width="4.4" height="4.6" fill="#9c6656"/><rect x="1192.9" y="146.5" width="4.8" height="4.0" fill="#6e6466"/><rect x="1088.7" y="362.3" width="4.0" height="3.5" fill="#9c6656"/><rect x="1019.0" y="408.6" width="3.7" height="4.5" fill="#b8aaa6"/><rect x="1188.3" y="404.5" width="3.8" height="4.2" fill="#5e5052"/><rect x="1049.4" y="325.8" width="6.8" height="3.8" fill="#b8aaa6"/><rect x="1015.3" y="291.7" width="2.6" height="3.9" fill="#6e6466"/><rect x="1056.9" y="136.3" width="5.3" height="4.1" fill="#4a4448"/><rect x="1028.1" y="308.6" width="5.9" height="5.9" fill="#3e4046"/><rect x="877.7" y="293.5" width="5.5" height="3.5" fill="#a89a98"/><rect x="1024.4" y="189.7" width="2.3" height="3.4" fill="#8a5a4e"/><rect x="964.6" y="292.2" width="4.3" height="2.5" fill="#9a948f"/><rect x="1076.0" y="201.6" width="3.6" height="3.5" fill="#6e6466"/><rect x="985.4" y="215.6" width="2.4" height="5.2" fill="#a0604c"/><rect x="931.4" y="337.4" width="2.3" height="2.4" fill="#6e6466"/><rect x="1040.5" y="255.6" width="6.9" height="5.1" fill="#3e4046"/><rect x="919.5" y="149.8" width="2.4" height="4.1" fill="#8c8884"/><rect x="947.9" y="208.2" width="3.4" height="2.8" fill="#6e6466"/><rect x="996.7" y="291.0" width="6.1" height="4.7" fill="#7a4e46"/><rect x="1182.3" y="278.2" width="5.1" height="3.8" fill="#b8aaa6"/><rect x="1141.5" y="317.0" width="2.2" height="3.5" fill="#9a948f"/><rect x="921.3" y="327.9" width="6.1" height="2.2" fill="#9c6656"/><rect x="1189.7" y="221.1" width="6.5" height="2.0" fill="#8c8884"/><rect x="922.6" y="150.9" width="6.9" height="4.7" fill="#5e5052"/><rect x="1015.4" y="249.4" width="2.3" height="4.3" fill="#a0604c"/><rect x="1005.4" y="342.1" width="3.2" height="5.8" fill="#7a4e46"/><rect x="967.8" y="255.8" width="6.4" height="5.2" fill="#a89a98"/><rect x="972.5" y="282.8" width="5.3" height="5.4" fill="#9a948f"/><rect x="1078.5" y="156.1" width="2.2" height="5.4" fill="#7a4e46"/><rect x="966.5" y="165.4" width="3.2" height="5.4" fill="#b8aaa6"/><rect x="1060.8" y="321.7" width="3.4" height="4.1" fill="#8e8084"/><rect x="941.6" y="247.1" width="6.5" height="5.7" fill="#8c8884"/><rect x="1171.2" y="178.2" width="4.8" height="2.8" fill="#4a4448"/><rect x="876.7" y="407.2" width="3.2" height="2.5" fill="#b8aaa6"/><rect x="1187.7" y="257.2" width="4.7" height="3.4" fill="#6e6466"/><rect x="1158.7" y="243.8" width="6.7" height="4.1" fill="#a89a98"/><rect x="978.6" y="302.9" width="3.3" height="4.9" fill="#4a4448"/><rect x="1188.6" y="188.4" width="5.3" height="5.4" fill="#9c6656"/><rect x="1166.4" y="137.4" width="4.0" height="4.7" fill="#8a5a4e"/><rect x="1066.2" y="342.3" width="3.7" height="5.2" fill="#b8aaa6"/><rect x="1063.2" y="304.8" width="2.4" height="4.0" fill="#9a948f"/><rect x="976.9" y="337.3" width="4.9" height="4.9" fill="#7a4e46"/><rect x="1006.4" y="274.5" width="2.2" height="5.1" fill="#9c6656"/><rect x="1167.8" y="142.3" width="3.7" height="4.7" fill="#9c6656"/><rect x="1074.1" y="346.2" width="5.0" height="4.3" fill="#4a4448"/><rect x="895.3" y="232.5" width="3.1" height="4.4" fill="#a89a98"/><rect x="1093.1" y="316.0" width="5.3" height="2.7" fill="#b8aaa6"/><rect x="1106.4" y="248.8" width="3.9" height="4.9" fill="#7a4e46"/><rect x="1025.4" y="183.6" width="3.3" height="3.4" fill="#9c6656"/><rect x="1168.5" y="387.6" width="2.1" height="2.6" fill="#5e5052"/><rect x="1137.9" y="204.7" width="6.0" height="4.3" fill="#3e4046"/><rect x="948.7" y="410.9" width="3.2" height="3.7" fill="#b8aaa6"/><rect x="1105.3" y="189.2" width="4.1" height="4.7" fill="#8e8084"/><rect x="943.8" y="280.8" width="5.7" height="2.9" fill="#b8aaa6"/><rect x="955.8" y="266.1" width="6.9" height="6.0" fill="#8a5a4e"/><rect x="913.4" y="124.4" width="6.3" height="4.3" fill="#b8aaa6"/><rect x="1035.4" y="429.9" width="6.8" height="3.5" fill="#9a948f"/><rect x="1081.2" y="418.0" width="2.4" height="5.2" fill="#7a4e46"/><rect x="1189.6" y="401.6" width="5.5" height="5.8" fill="#6e6466"/><rect x="1031.7" y="354.8" width="4.8" height="5.9" fill="#a0604c"/><rect x="972.8" y="263.5" width="3.0" height="3.9" fill="#9c6656"/><rect x="982.8" y="259.6" width="6.1" height="3.0" fill="#8e8084"/><rect x="1048.7" y="368.5" width="3.2" height="4.6" fill="#9c6656"/><rect x="1120.2" y="244.2" width="3.2" height="3.5" fill="#7a4e46"/><rect x="880.0" y="190.1" width="4.2" height="5.9" fill="#7a4e46"/><rect x="1100.0" y="192.5" width="5.8" height="6.0" fill="#b8aaa6"/><rect x="922.9" y="165.8" width="3.4" height="4.5" fill="#9c6656"/><rect x="981.0" y="180.8" width="4.3" height="4.0" fill="#5e5052"/><rect x="1043.4" y="223.1" width="4.5" height="2.4" fill="#8e8084"/><rect x="1060.1" y="181.0" width="2.0" height="3.5" fill="#a89a98"/><rect x="1064.4" y="152.5" width="5.2" height="2.3" fill="#7a4e46"/><rect x="1170.2" y="210.1" width="4.1" height="3.4" fill="#5e5052"/><rect x="913.7" y="398.3" width="2.7" height="4.7" fill="#8c8884"/><rect x="1168.0" y="189.7" width="2.3" height="2.4" fill="#8e8084"/><rect x="1095.1" y="136.0" width="5.5" height="2.6" fill="#4a4448"/><rect x="978.1" y="351.2" width="4.6" height="4.6" fill="#8c8884"/><rect x="979.4" y="128.6" width="4.3" height="5.7" fill="#a0604c"/><rect x="1180.5" y="236.7" width="2.8" height="5.3" fill="#3e4046"/><rect x="1181.4" y="348.1" width="6.0" height="2.6" fill="#6e6466"/><rect x="1090.1" y="418.0" width="4.5" height="5.9" fill="#9a948f"/><rect x="981.4" y="166.0" width="5.3" height="2.4" fill="#4a4448"/><rect x="1037.5" y="355.3" width="5.8" height="5.9" fill="#7a4e46"/><rect x="1073.2" y="130.4" width="6.5" height="4.8" fill="#6e6466"/><rect x="1071.6" y="318.5" width="6.4" height="5.0" fill="#5e5052"/><rect x="910.3" y="403.6" width="2.5" height="4.2" fill="#a89a98"/><rect x="888.2" y="419.9" width="3.2" height="3.5" fill="#6e6466"/><rect x="916.9" y="175.7" width="3.0" height="5.0" fill="#6e6466"/><rect x="1150.3" y="149.7" width="3.8" height="4.3" fill="#a89a98"/><rect x="919.9" y="393.2" width="2.1" height="3.7" fill="#a89a98"/><rect x="1019.6" y="397.3" width="4.9" height="4.9" fill="#6e6466"/><rect x="1010.0" y="391.3" width="6.5" height="5.4" fill="#9a948f"/><rect x="923.6" y="350.2" width="6.2" height="2.1" fill="#b8aaa6"/><rect x="932.8" y="399.4" width="5.8" height="3.8" fill="#8c8884"/><rect x="966.9" y="236.6" width="4.9" height="5.9" fill="#3e4046"/><rect x="926.7" y="234.3" width="4.7" height="2.6" fill="#7a4e46"/><rect x="1088.0" y="396.2" width="6.4" height="4.8" fill="#5e5052"/><rect x="1145.7" y="364.5" width="5.8" height="3.3" fill="#6e6466"/><rect x="1178.7" y="124.5" width="3.5" height="3.0" fill="#7a4e46"/><rect x="1028.8" y="239.3" width="5.5" height="5.0" fill="#8e8084"/><rect x="915.2" y="297.7" width="3.4" height="5.0" fill="#9c6656"/><rect x="949.4" y="402.3" width="6.7" height="5.7" fill="#a0604c"/><rect x="1089.8" y="120.2" width="6.7" height="4.5" fill="#9a948f"/><rect x="1086.6" y="276.4" width="4.2" height="4.8" fill="#8a5a4e"/><rect x="1160.9" y="324.1" width="3.7" height="2.3" fill="#5e5052"/><rect x="1008.5" y="388.3" width="3.4" height="5.9" fill="#7a4e46"/><rect x="1115.0" y="196.9" width="6.9" height="3.1" fill="#8c8884"/><rect x="1087.1" y="163.4" width="4.5" height="3.5" fill="#a0604c"/><rect x="1171.2" y="281.5" width="2.9" height="2.3" fill="#6e6466"/><rect x="1112.7" y="123.7" width="4.8" height="5.7" fill="#8a5a4e"/></g></g><polygon points="875,199 899,201 900,230 875,232" fill="#2b332c"/><polygon points="1000,120 1016,116 1018,150 1002,148" fill="#3a3a34" opacity="0.6"/><polygon points="1048,300 1120,302 1198,286 1198,348 1120,346 1050,352" fill="#4f504a"/><rect x="1156.6" y="334.5" width="4.0" height="3.9" fill="#8a8478"/><rect x="1183.0" y="338.9" width="6.6" height="2.8" fill="#6b6a62"/><rect x="1144.1" y="301.5" width="7.9" height="4.8" fill="#7d7a70"/><rect x="1097.8" y="347.2" width="7.5" height="2.2" fill="#7d7a70"/><rect x="1109.3" y="323.7" width="7.5" height="4.6" fill="#7d7a70"/><rect x="1135.4" y="306.6" width="6.7" height="3.8" fill="#55584f"/><rect x="1193.8" y="309.2" width="4.2" height="5.2" fill="#3f433d"/><rect x="1181.4" y="303.4" width="6.5" height="2.7" fill="#6b6a62"/><rect x="1156.5" y="313.6" width="4.5" height="4.9" fill="#7d7a70"/><rect x="1153.8" y="343.6" width="5.5" height="4.4" fill="#55584f"/><rect x="1155.6" y="338.8" width="3.4" height="4.0" fill="#6b6a62"/><rect x="1157.2" y="327.2" width="7.5" height="4.7" fill="#3f433d"/><rect x="1079.9" y="321.2" width="6.1" height="2.9" fill="#55584f"/><rect x="1108.0" y="302.3" width="2.6" height="4.6" fill="#6b6a62"/><rect x="1150.0" y="341.4" width="6.0" height="5.1" fill="#55584f"/><rect x="1137.3" y="325.5" width="3.0" height="2.9" fill="#6b6a62"/><rect x="1131.7" y="326.9" width="5.4" height="6.0" fill="#8a8478"/><rect x="1172.2" y="312.9" width="7.4" height="5.3" fill="#7d7a70"/><rect x="1182.7" y="300.5" width="4.8" height="3.1" fill="#7d7a70"/><rect x="1145.7" y="323.9" width="5.5" height="3.4" fill="#6b6a62"/><rect x="1057.1" y="301.8" width="3.2" height="5.0" fill="#6b6a62"/><rect x="1153.1" y="325.5" width="4.0" height="2.6" fill="#6b6a62"/><rect x="1196.3" y="311.8" width="7.7" height="2.7" fill="#55584f"/><rect x="1126.7" y="312.8" width="4.9" height="4.0" fill="#3f433d"/><rect x="1146.7" y="333.3" width="3.1" height="5.9" fill="#55584f"/><rect x="1128.7" y="338.9" width="5.4" height="3.4" fill="#3f433d"/><rect x="1165.2" y="347.9" width="3.8" height="3.9" fill="#8a8478"/><rect x="1127.5" y="315.2" width="5.6" height="5.4" fill="#7d7a70"/><rect x="1181.6" y="317.0" width="2.8" height="2.7" fill="#7d7a70"/><rect x="1155.7" y="333.6" width="4.3" height="3.2" fill="#8a8478"/><rect x="1116.1" y="325.0" width="3.4" height="5.6" fill="#8a8478"/><rect x="1126.3" y="307.1" width="7.8" height="5.1" fill="#6b6a62"/><rect x="1120.2" y="320.4" width="7.0" height="3.7" fill="#7d7a70"/><rect x="1093.2" y="302.9" width="7.6" height="2.8" fill="#55584f"/><rect x="1100.4" y="330.0" width="3.8" height="2.5" fill="#7d7a70"/><rect x="1164.2" y="333.8" width="5.7" height="2.7" fill="#55584f"/><rect x="1050.1" y="315.8" width="7.4" height="4.8" fill="#7d7a70"/><rect x="1115.5" y="307.3" width="7.3" height="3.1" fill="#7d7a70"/><rect x="1108.0" y="333.6" width="6.2" height="5.5" fill="#6b6a62"/><rect x="1088.7" y="311.9" width="2.7" height="3.3" fill="#6b6a62"/><rect x="1050.1" y="340.3" width="2.8" height="2.7" fill="#3f433d"/><rect x="1184.8" y="311.8" width="6.6" height="2.8" fill="#3f433d"/><rect x="1088.9" y="315.6" width="3.5" height="4.4" fill="#3f433d"/><rect x="1155.3" y="310.8" width="2.8" height="4.1" fill="#8a8478"/><rect x="1186.8" y="344.0" width="7.3" height="4.2" fill="#6b6a62"/><rect x="1143.1" y="333.0" width="5.8" height="4.1" fill="#7d7a70"/><rect x="1066.7" y="347.8" width="7.5" height="3.7" fill="#7d7a70"/><rect x="1104.5" y="347.1" width="4.4" height="5.2" fill="#6b6a62"/><rect x="1154.9" y="300.2" width="2.1" height="3.9" fill="#6b6a62"/><rect x="1107.5" y="330.9" width="4.4" height="5.4" fill="#7d7a70"/><rect x="1048.3" y="330.3" width="7.4" height="4.1" fill="#3f433d"/><rect x="1068.2" y="335.1" width="5.5" height="5.7" fill="#6b6a62"/><rect x="1154.6" y="345.9" width="6.4" height="5.9" fill="#3f433d"/><rect x="1177.3" y="322.7" width="3.9" height="5.9" fill="#6b6a62"/><rect x="1113.3" y="319.9" width="7.7" height="2.8" fill="#7d7a70"/><rect x="1085.5" y="312.3" width="4.5" height="4.2" fill="#8a8478"/><rect x="1190.0" y="339.5" width="3.9" height="2.5" fill="#8a8478"/><rect x="1120.2" y="343.4" width="5.9" height="5.8" fill="#8a8478"/><rect x="1122.1" y="301.0" width="2.4" height="4.3" fill="#3f433d"/><rect x="1090.3" y="321.7" width="6.1" height="3.0" fill="#7d7a70"/><rect x="1139.0" y="307.8" width="5.9" height="2.2" fill="#55584f"/><rect x="1059.4" y="339.9" width="3.9" height="3.7" fill="#3f433d"/><rect x="1181.1" y="313.1" width="4.7" height="5.1" fill="#6b6a62"/><rect x="1070.2" y="300.8" width="2.3" height="3.5" fill="#8a8478"/><rect x="1177.9" y="339.4" width="7.6" height="5.9" fill="#3f433d"/><rect x="1195.0" y="326.0" width="7.7" height="4.8" fill="#8a8478"/><rect x="1167.0" y="305.6" width="7.4" height="4.1" fill="#3f433d"/><rect x="1078.6" y="319.0" width="4.2" height="5.1" fill="#7d7a70"/><rect x="1197.5" y="325.6" width="3.2" height="2.7" fill="#55584f"/><rect x="1187.2" y="309.8" width="3.4" height="2.6" fill="#7d7a70"/><rect x="1083.9" y="343.3" width="2.2" height="3.8" fill="#7d7a70"/><rect x="1084.0" y="312.8" width="4.5" height="2.7" fill="#6b6a62"/><rect x="1096.3" y="322.8" width="3.3" height="3.0" fill="#3f433d"/><rect x="1119.9" y="342.7" width="5.7" height="3.2" fill="#8a8478"/><rect x="1129.5" y="328.4" width="5.1" height="3.4" fill="#7d7a70"/><rect x="1069.5" y="310.0" width="4.0" height="2.4" fill="#55584f"/><rect x="1072.9" y="304.4" width="4.9" height="5.0" fill="#55584f"/><rect x="1165.0" y="321.5" width="3.3" height="2.2" fill="#3f433d"/><rect x="1103.1" y="314.0" width="2.5" height="2.7" fill="#3f433d"/><rect x="1118.8" y="340.7" width="7.1" height="3.0" fill="#7d7a70"/><rect x="1073.6" y="337.8" width="2.2" height="5.2" fill="#8a8478"/><rect x="1088.8" y="304.3" width="4.5" height="5.7" fill="#3f433d"/><rect x="1081.6" y="302.3" width="2.1" height="5.7" fill="#55584f"/><rect x="1139.9" y="306.7" width="6.8" height="4.7" fill="#8a8478"/><rect x="1089.1" y="308.6" width="3.6" height="6.0" fill="#3f433d"/><rect x="1172.3" y="321.1" width="3.1" height="3.9" fill="#55584f"/><rect x="1102.3" y="311.2" width="5.1" height="5.7" fill="#55584f"/><rect x="1116.9" y="335.1" width="6.4" height="2.9" fill="#7d7a70"/><rect x="1133.6" y="338.1" width="6.8" height="3.8" fill="#8a8478"/><rect x="1151.8" y="321.1" width="5.1" height="5.2" fill="#8a8478"/><rect x="1196.0" y="317.6" width="6.1" height="4.2" fill="#7d7a70"/><rect x="1106.2" y="318.1" width="3.2" height="3.1" fill="#55584f"/><rect x="1049.0" y="305.2" width="2.8" height="4.4" fill="#3f433d"/><rect x="1080.8" y="318.1" width="4.4" height="2.3" fill="#8a8478"/><rect x="1088.6" y="316.6" width="3.4" height="5.3" fill="#8a8478"/><rect x="1108.0" y="326.9" width="7.6" height="3.2" fill="#6b6a62"/><rect x="1177.5" y="344.0" width="2.9" height="3.0" fill="#6b6a62"/><rect x="1069.8" y="300.7" width="7.7" height="5.7" fill="#8a8478"/><rect x="1136.6" y="307.0" width="4.3" height="2.6" fill="#3f433d"/><rect x="1053.5" y="337.8" width="7.9" height="4.7" fill="#55584f"/><rect x="1104.8" y="345.3" width="2.6" height="3.3" fill="#3f433d"/><rect x="1146.1" y="345.9" width="5.8" height="2.2" fill="#6b6a62"/><rect x="1158.0" y="301.2" width="7.6" height="4.4" fill="#3f433d"/><rect x="1091.2" y="332.7" width="7.5" height="3.9" fill="#8a8478"/><rect x="1132.9" y="326.0" width="5.2" height="5.0" fill="#7d7a70"/><rect x="1165.2" y="345.9" width="3.5" height="4.7" fill="#7d7a70"/><rect x="1191.7" y="326.1" width="3.3" height="3.2" fill="#6b6a62"/><rect x="1094.3" y="344.5" width="7.9" height="5.0" fill="#3f433d"/><rect x="1077.7" y="344.3" width="5.1" height="3.2" fill="#3f433d"/><rect x="1098.6" y="345.2" width="7.5" height="5.6" fill="#55584f"/><rect x="1121.2" y="317.9" width="4.0" height="2.2" fill="#8a8478"/><rect x="1052.5" y="341.8" width="5.6" height="4.2" fill="#8a8478"/><rect x="1077.2" y="345.6" width="3.0" height="5.3" fill="#6b6a62"/><rect x="1131.3" y="311.9" width="5.3" height="5.4" fill="#3f433d"/><rect x="1153.4" y="338.1" width="3.1" height="2.3" fill="#7d7a70"/><rect x="1166.6" y="303.3" width="3.1" height="4.6" fill="#7d7a70"/><rect x="1154.6" y="324.7" width="4.0" height="2.7" fill="#8a8478"/><rect x="1129.4" y="340.7" width="2.0" height="3.4" fill="#6b6a62"/><rect x="1116.9" y="306.4" width="6.1" height="3.8" fill="#55584f"/><rect x="1131.2" y="336.6" width="4.0" height="6.0" fill="#6b6a62"/><rect x="1099.6" y="309.7" width="5.9" height="5.4" fill="#7d7a70"/><rect x="1126.3" y="305.2" width="7.1" height="3.3" fill="#6b6a62"/><rect x="1196.5" y="301.2" width="4.6" height="2.8" fill="#7d7a70"/><rect x="1063.0" y="339.3" width="7.7" height="3.4" fill="#7d7a70"/><rect x="1152.9" y="341.2" width="7.8" height="3.3" fill="#7d7a70"/><rect x="1123.2" y="341.2" width="6.4" height="5.4" fill="#55584f"/><rect x="1166.4" y="305.7" width="2.8" height="2.5" fill="#3f433d"/><rect x="1095.9" y="322.9" width="3.2" height="5.2" fill="#7d7a70"/><rect x="1134.8" y="319.7" width="4.3" height="3.1" fill="#6b6a62"/><rect x="1106.0" y="335.4" width="3.7" height="4.7" fill="#6b6a62"/><rect x="1114.1" y="319.7" width="3.1" height="3.0" fill="#55584f"/><rect x="1149.5" y="318.3" width="3.1" height="3.6" fill="#8a8478"/><rect x="1054.2" y="327.7" width="8.0" height="3.6" fill="#8a8478"/><rect x="1103.9" y="329.1" width="7.5" height="4.0" fill="#55584f"/><rect x="1049.8" y="322.1" width="4.8" height="2.1" fill="#7d7a70"/><rect x="1072.1" y="336.3" width="5.9" height="2.2" fill="#3f433d"/><rect x="1061.8" y="342.2" width="2.8" height="2.5" fill="#7d7a70"/><rect x="1127.8" y="334.1" width="2.1" height="4.0" fill="#8a8478"/><rect x="1151.6" y="340.2" width="6.0" height="2.9" fill="#8a8478"/><rect x="1161.4" y="323.4" width="7.6" height="2.2" fill="#7d7a70"/><rect x="1101.6" y="326.0" width="6.8" height="2.7" fill="#8a8478"/><rect x="1055.1" y="330.4" width="2.6" height="4.3" fill="#8a8478"/><rect x="1112.0" y="305.8" width="7.6" height="4.0" fill="#3f433d"/><rect x="1088.8" y="322.2" width="3.5" height="4.4" fill="#8a8478"/><rect x="1134.0" y="328.1" width="3.9" height="5.8" fill="#6b6a62"/><rect x="1140.0" y="310.5" width="4.8" height="2.2" fill="#7d7a70"/><rect x="1096.4" y="328.1" width="6.8" height="3.0" fill="#3f433d"/><rect x="1140.6" y="342.2" width="7.4" height="3.3" fill="#8a8478"/><rect x="1095.4" y="332.8" width="2.9" height="4.6" fill="#3f433d"/><rect x="1189.3" y="338.4" width="8.0" height="4.0" fill="#55584f"/><rect x="1065.3" y="335.8" width="5.9" height="2.1" fill="#8a8478"/><rect x="1101.8" y="301.0" width="7.1" height="3.7" fill="#7d7a70"/><rect x="1129.5" y="306.0" width="7.6" height="4.3" fill="#55584f"/><rect x="1048.4" y="324.1" width="4.4" height="3.3" fill="#6b6a62"/><rect x="1078.2" y="323.8" width="4.3" height="5.0" fill="#7d7a70"/><rect x="1059.7" y="343.9" width="6.0" height="5.2" fill="#3f433d"/><rect x="1079.0" y="306.0" width="4.2" height="3.5" fill="#8a8478"/><rect x="1084.0" y="316.3" width="6.5" height="2.8" fill="#6b6a62"/><rect x="1161.3" y="319.0" width="6.7" height="5.6" fill="#6b6a62"/><rect x="1117.0" y="310.1" width="6.7" height="5.5" fill="#8a8478"/><rect x="1052" y="309" width="50" height="18" fill="#8d7f68"/><rect x="1065" y="313" width="22" height="8" fill="#b8a57e"/><rect x="1100" y="325" width="30" height="20" fill="#6d6256"/><polyline points="875,119 910,121 960,117 1000,113" fill="none" stroke="#8e8d8a" stroke-width="4.2" stroke-linejoin="round" stroke-linecap="round" opacity="0.92"/><polyline points="875,195 947,209 1036,228 1096,201 1131,211 1198,211" fill="none" stroke="#8e8d8a" stroke-width="4.2" stroke-linejoin="round" stroke-linecap="round" opacity="0.92"/><polyline points="970,111 956,180 918,245 896,270" fill="none" stroke="#8e8d8a" stroke-width="4.2" stroke-linejoin="round" stroke-linecap="round" opacity="0.92"/><polyline points="904,124 890,160 880,200" fill="none" stroke="#8e8d8a" stroke-width="4.2" stroke-linejoin="round" stroke-linecap="round" opacity="0.92"/><polyline points="875,236 970,255 1043,262 1080,269 1125,274 1198,260" fill="none" stroke="#8e8d8a" stroke-width="4.2" stroke-linejoin="round" stroke-linecap="round" opacity="0.92"/><polyline points="970,256 963,274 947,287 919,300 912,314 887,311 876,300" fill="none" stroke="#8e8d8a" stroke-width="4.2" stroke-linejoin="round" stroke-linecap="round" opacity="0.92"/><polyline points="1008,115 1004,160 1010,212" fill="none" stroke="#8e8d8a" stroke-width="4.2" stroke-linejoin="round" stroke-linecap="round" opacity="0.92"/><polyline points="1131,211 1134,245" fill="none" stroke="#8e8d8a" stroke-width="4.2" stroke-linejoin="round" stroke-linecap="round" opacity="0.92"/><polyline points="1158,216 1170,247 1190,262" fill="none" stroke="#8e8d8a" stroke-width="4.2" stroke-linejoin="round" stroke-linecap="round" opacity="0.92"/><polyline points="1036,280 1056,305 1052,325 1198,334" fill="none" stroke="#8e8d8a" stroke-width="4.2" stroke-linejoin="round" stroke-linecap="round" opacity="0.92"/><polyline points="1132,336 1136,314 1156,309 1198,300" fill="none" stroke="#8e8d8a" stroke-width="4.2" stroke-linejoin="round" stroke-linecap="round" opacity="0.92"/><polyline points="875,377 960,392 1036,410" fill="none" stroke="#8e8d8a" stroke-width="4.2" stroke-linejoin="round" stroke-linecap="round" opacity="0.92"/><polyline points="956,365 955,432" fill="none" stroke="#8e8d8a" stroke-width="4.2" stroke-linejoin="round" stroke-linecap="round" opacity="0.92"/><polyline points="905,318 915,360 930,372" fill="none" stroke="#8e8d8a" stroke-width="4.2" stroke-linejoin="round" stroke-linecap="round" opacity="0.92"/><polyline points="1110,111 1106,136 1170,140 1180,111" fill="none" stroke="#8e8d8a" stroke-width="4.2" stroke-linejoin="round" stroke-linecap="round" opacity="0.92"/><polyline points="875,330 890,345 900,378" fill="none" stroke="#8e8d8a" stroke-width="4.2" stroke-linejoin="round" stroke-linecap="round" opacity="0.92"/><polyline points="920,395 915,432" fill="none" stroke="#8e8d8a" stroke-width="4.2" stroke-linejoin="round" stroke-linecap="round" opacity="0.92"/><polyline points="875,160 935,165 990,172 1036,190" fill="none" stroke="#8e8d8a" stroke-width="4.2" stroke-linejoin="round" stroke-linecap="round" opacity="0.92"/><polyline points="990,111 985,150 975,200" fill="none" stroke="#8e8d8a" stroke-width="4.2" stroke-linejoin="round" stroke-linecap="round" opacity="0.92"/><polyline points="930,200 925,240" fill="none" stroke="#8e8d8a" stroke-width="4.2" stroke-linejoin="round" stroke-linecap="round" opacity="0.92"/><polyline points="1036,240 1060,236 1100,238 1131,245" fill="none" stroke="#8e8d8a" stroke-width="4.2" stroke-linejoin="round" stroke-linecap="round" opacity="0.92"/><polyline points="1060,205 1062,262" fill="none" stroke="#8e8d8a" stroke-width="4.2" stroke-linejoin="round" stroke-linecap="round" opacity="0.92"/><polyline points="1090,215 1095,268" fill="none" stroke="#8e8d8a" stroke-width="4.2" stroke-linejoin="round" stroke-linecap="round" opacity="0.92"/><polyline points="1170,247 1198,245" fill="none" stroke="#8e8d8a" stroke-width="4.2" stroke-linejoin="round" stroke-linecap="round" opacity="0.92"/><polyline points="885,270 880,330" fill="none" stroke="#8e8d8a" stroke-width="4.2" stroke-linejoin="round" stroke-linecap="round" opacity="0.92"/><polyline points="990,395 1000,432" fill="none" stroke="#8e8d8a" stroke-width="4.2" stroke-linejoin="round" stroke-linecap="round" opacity="0.92"/><path d="M946.5,286 C944.5,283 941.5,281 941.5,277 A5,5 0 0 1 951.5,277 C951.5,281 948.5,283 946.5,286 Z" fill="#7c98a8" stroke="#dfe8ee" stroke-width="0.8"/><path d="M943.5,276.5 L946.5,275 L949.5,276.5 L946.5,278 Z M944.7,277.2 L944.7,279 L948.3,279 L948.3,277.2" fill="#fff"/><path d="M1085.5,316 C1083.5,313 1080.5,311 1080.5,307 A5,5 0 0 1 1090.5,307 C1090.5,311 1087.5,313 1085.5,316 Z" fill="#7c98a8" stroke="#dfe8ee" stroke-width="0.8"/><path d="M1082.5,306.5 L1085.5,305 L1088.5,306.5 L1085.5,308 Z M1083.7,307.2 L1083.7,309 L1087.3,309 L1087.3,307.2" fill="#fff"/><path d="M1156.5,340 C1154.5,337 1151.5,335 1151.5,331 A5,5 0 0 1 1161.5,331 C1161.5,335 1158.5,337 1156.5,340 Z" fill="#7c98a8" stroke="#dfe8ee" stroke-width="0.8"/><path d="M1153.5,330.5 L1156.5,329 L1159.5,330.5 L1156.5,332 Z M1154.7,331.2 L1154.7,333 L1158.3,333 L1158.3,331.2" fill="#fff"/><path d="M1036.5,272 C1034,265 1028,261 1028,255 A8.5,8.5 0 0 1 1045,255 C1045,261 1039,265 1036.5,272 Z" fill="#e5342b" stroke="#b51e18" stroke-width="0.6"/><circle cx="1036.5" cy="255" r="3" fill="#a01510"/><rect x="875" y="420" width="321" height="12" fill="#141516" opacity="0.75"/></g><text x="915" y="126" font-family="Liberation Sans" font-size="10.5" font-weight="400" fill="#fff" stroke="#222" stroke-width="2.4" paint-order="stroke" stroke-linejoin="round" text-anchor="start" transform="rotate(-7 915 126)">Jl. Pinang</text><text x="906" y="172" font-family="Liberation Sans" font-size="10.5" font-weight="400" fill="#fff" stroke="#222" stroke-width="2.4" paint-order="stroke" stroke-linejoin="round" text-anchor="start" transform="rotate(5 906 172)">Jl. Kecapi</text><text x="973" y="177" font-family="Liberation Sans" font-size="10.5" font-weight="400" fill="#fff" stroke="#222" stroke-width="2.4" paint-order="stroke" stroke-linejoin="round" text-anchor="start" transform="rotate(14 973 177)">Jl. Bungur 2</text><text x="968" y="227" font-family="Liberation Sans" font-size="10.5" font-weight="400" fill="#fff" stroke="#222" stroke-width="2.4" paint-order="stroke" stroke-linejoin="round" text-anchor="start" transform="rotate(7 968 227)">Jl. Bungur I</text><text x="1053" y="231" font-family="Liberation Sans" font-size="10.5" font-weight="400" fill="#fff" stroke="#222" stroke-width="2.4" paint-order="stroke" stroke-linejoin="round" text-anchor="start" transform="rotate(5 1053 231)">Jl. Bungur</text><text x="973" y="262" font-family="Liberation Sans" font-size="10.5" font-weight="400" fill="#fff" stroke="#222" stroke-width="2.4" paint-order="stroke" stroke-linejoin="round" text-anchor="start" transform="rotate(3 973 262)">Jl. H. M. Tohir</text><text x="1089" y="178" font-family="Liberation Sans" font-size="13.2" font-weight="400" fill="#c9dbe6" stroke="#203028" stroke-width="1.5" paint-order="stroke" stroke-linejoin="round" text-anchor="start" transform="rotate(-15 1089 178)">Sungai Ciliwung</text><text x="1067" y="288.5" font-family="Liberation Sans" font-size="11.2" font-weight="400" fill="#fff" stroke="#1c2420" stroke-width="1.6" paint-order="stroke" stroke-linejoin="round" text-anchor="start">Fakultas Kedokteran</text><text x="1067" y="300.5" font-family="Liberation Sans" font-size="11.2" font-weight="400" fill="#fff" stroke="#1c2420" stroke-width="1.6" paint-order="stroke" stroke-linejoin="round" text-anchor="start">Universitas Gunadarma</text><text x="928" y="305" font-family="Liberation Sans" font-size="11.2" font-weight="400" fill="#fff" stroke="#1c2420" stroke-width="1.6" paint-order="stroke" stroke-linejoin="round" text-anchor="start">Universitas Gunadarma</text><text x="928" y="317" font-family="Liberation Sans" font-size="11.2" font-weight="400" fill="#fff" stroke="#1c2420" stroke-width="1.6" paint-order="stroke" stroke-linejoin="round" text-anchor="start">Kampus F5</text><text x="1174" y="358.5" font-family="Liberation Sans" font-size="11.2" font-weight="400" fill="#fff" stroke="#1c2420" stroke-width="1.6" paint-order="stroke" stroke-linejoin="round" text-anchor="end">Universitas Gunadarma</text><text x="1174" y="370.5" font-family="Liberation Sans" font-size="11.2" font-weight="400" fill="#fff" stroke="#1c2420" stroke-width="1.6" paint-order="stroke" stroke-linejoin="round" text-anchor="end">Kampus F8</text><text x="1071" y="395" font-family="Liberation Sans" font-size="11.5" font-weight="400" fill="#c9dbe6" stroke="#203028" stroke-width="1.5" paint-order="stroke" stroke-linejoin="round" text-anchor="start" transform="rotate(30 1071 395)">Ciliwun</text><text x="1194" y="429" font-family="Liberation Sans" font-size="8.2" font-weight="400" fill="#cfcfcf" stroke="none" stroke-width="0" paint-order="stroke" stroke-linejoin="round" text-anchor="end">ata ©2024 Imagery ©2024 Airbus, CNES / Airbus, Maxar Technologies</text><text x="879" y="429" font-family="Liberation Sans" font-size="14" font-weight="400" fill="#fff" stroke="#333" stroke-width="1.5" paint-order="stroke" stroke-linejoin="round" text-anchor="start">Google</text></svg>
<div class="pn" style="left:19px;top:458px;width:721px;height:300px"></div>
<div class="ph" style="left:20px;top:459px;width:719px;height:32px"></div>
<div style="position:absolute;left:20px;top:700px;width:719px;height:28px;background:linear-gradient(rgba(255,255,255,0),#f3f3f3)"></div>
<div class="pn" style="left:764px;top:458px;width:520px;height:266px"></div>
<div class="ph" style="left:765px;top:459px;width:518px;height:32px"></div>
<div style="position:absolute;left:765px;top:695px;width:500px;height:28px;background:linear-gradient(rgba(255,255,255,0),#f4f4f4)"></div>
<svg style="position:absolute;left:0;top:0" width="1265" height="728" viewBox="0 0 1265 728"><line x1="88" y1="518.7" x2="719" y2="518.7" stroke="#e2e2e2" stroke-width="1"/><line x1="88" y1="559.9" x2="719" y2="559.9" stroke="#e2e2e2" stroke-width="1"/><line x1="88" y1="601.0" x2="719" y2="601.0" stroke="#e2e2e2" stroke-width="1"/><line x1="88" y1="641.9" x2="719" y2="641.9" stroke="#e2e2e2" stroke-width="1"/><rect x="101.89" y="584.8" width="24.8" height="98.60" fill="#f9a95a" stroke="#e0a060" stroke-width="0.5"/><rect x="154.47" y="581.0" width="24.8" height="102.40" fill="#f9a95a" stroke="#e0a060" stroke-width="0.5"/><rect x="207.06" y="560.4" width="24.8" height="123.00" fill="#f9a95a" stroke="#e0a060" stroke-width="0.5"/><rect x="259.64" y="565.3" width="24.8" height="118.10" fill="#f9a95a" stroke="#e0a060" stroke-width="0.5"/><rect x="312.23" y="557.4" width="24.8" height="126.00" fill="#f9a95a" stroke="#e0a060" stroke-width="0.5"/><rect x="364.81" y="563.8" width="24.8" height="119.60" fill="#f9a95a" stroke="#e0a060" stroke-width="0.5"/><rect x="417.39" y="556.4" width="24.8" height="127.00" fill="#f9a95a" stroke="#e0a060" stroke-width="0.5"/><rect x="469.98" y="557.5" width="24.8" height="125.90" fill="#f9a95a" stroke="#e0a060" stroke-width="0.5"/><rect x="522.56" y="561.5" width="24.8" height="121.90" fill="#f9a95a" stroke="#e0a060" stroke-width="0.5"/><rect x="575.14" y="561.6" width="24.8" height="121.80" fill="#f9a95a" stroke="#e0a060" stroke-width="0.5"/><rect x="627.73" y="578.7" width="24.8" height="104.70" fill="#f9a95a" stroke="#e0a060" stroke-width="0.5"/><rect x="680.31" y="576.0" width="24.8" height="107.40" fill="#f9a95a" stroke="#e0a060" stroke-width="0.5"/><line x1="88" y1="683.5" x2="719" y2="683.5" stroke="#c8d2de" stroke-width="1"/><line x1="88.00" y1="683" x2="88.00" y2="690" stroke="#c8d2de" stroke-width="1"/><line x1="140.58" y1="683" x2="140.58" y2="690" stroke="#c8d2de" stroke-width="1"/><line x1="193.17" y1="683" x2="193.17" y2="690" stroke="#c8d2de" stroke-width="1"/><line x1="245.75" y1="683" x2="245.75" y2="690" stroke="#c8d2de" stroke-width="1"/><line x1="298.33" y1="683" x2="298.33" y2="690" stroke="#c8d2de" stroke-width="1"/><line x1="350.92" y1="683" x2="350.92" y2="690" stroke="#c8d2de" stroke-width="1"/><line x1="403.50" y1="683" x2="403.50" y2="690" stroke="#c8d2de" stroke-width="1"/><line x1="456.08" y1="683" x2="456.08" y2="690" stroke="#c8d2de" stroke-width="1"/><line x1="508.67" y1="683" x2="508.67" y2="690" stroke="#c8d2de" stroke-width="1"/><line x1="561.25" y1="683" x2="561.25" y2="690" stroke="#c8d2de" stroke-width="1"/><line x1="613.83" y1="683" x2="613.83" y2="690" stroke="#c8d2de" stroke-width="1"/><line x1="666.42" y1="683" x2="666.42" y2="690" stroke="#c8d2de" stroke-width="1"/><line x1="719.00" y1="683" x2="719.00" y2="690" stroke="#c8d2de" stroke-width="1"/></svg>
<svg style="position:absolute;left:0;top:0" width="1265" height="728" viewBox="0 0 1265 728"><path d="M1017.30,552.80 A58.0,58.0 0 0 1 1030.21,554.25 L1022.49,588.08 A23.3,23.3 0 0 0 1017.30,587.50 Z" fill="#7a1508" stroke="#fff4f0" stroke-width="0.9" stroke-linejoin="round"/><path d="M1030.21,554.25 A58.0,58.0 0 0 1 1061.90,573.72 L1035.22,595.90 A23.3,23.3 0 0 0 1022.49,588.08 Z" fill="#cb5a29" stroke="#fff4f0" stroke-width="0.9" stroke-linejoin="round"/><path d="M1061.90,573.72 A58.0,58.0 0 0 1 1072.95,594.46 L1039.66,604.24 A23.3,23.3 0 0 0 1035.22,595.90 Z" fill="#f38c0b" stroke="#fff4f0" stroke-width="0.9" stroke-linejoin="round"/><path d="M1072.95,594.46 A58.0,58.0 0 0 1 1074.53,601.38 L1040.29,607.01 A23.3,23.3 0 0 0 1039.66,604.24 Z" fill="#555555" stroke="#fff4f0" stroke-width="0.9" stroke-linejoin="round"/><path d="M1074.53,601.38 A58.0,58.0 0 0 1 962.75,630.51 L995.39,618.72 A23.3,23.3 0 0 0 1040.29,607.01 Z" fill="#b3b3b3" stroke="#fff4f0" stroke-width="0.9" stroke-linejoin="round"/><path d="M962.75,630.51 A58.0,58.0 0 0 1 959.35,608.43 L994.02,609.85 A23.3,23.3 0 0 0 995.39,618.72 Z" fill="#a83301" stroke="#fff4f0" stroke-width="0.9" stroke-linejoin="round"/><path d="M959.35,608.43 A58.0,58.0 0 0 1 959.49,606.07 L994.08,608.90 A23.3,23.3 0 0 0 994.02,609.85 Z" fill="#f7d36a" stroke="#fff4f0" stroke-width="0.9" stroke-linejoin="round"/><path d="M959.49,606.07 A58.0,58.0 0 0 1 976.71,569.37 L1000.99,594.16 A23.3,23.3 0 0 0 994.08,608.90 Z" fill="#f5b20f" stroke="#fff4f0" stroke-width="0.9" stroke-linejoin="round"/><path d="M976.71,569.37 A58.0,58.0 0 0 1 1017.30,552.80 L1017.30,587.50 A23.3,23.3 0 0 0 1000.99,594.16 Z" fill="#8f8f8f" stroke="#fff4f0" stroke-width="0.9" stroke-linejoin="round"/><path d="M1017.6,553.5 C1017.4,540 1016,532 1013.5,528" fill="none" stroke="#2e2e2e" stroke-width="1.15"/><path d="M1023.4,553.5 C1025,540 1026.5,532 1030,528" fill="none" stroke="#2e2e2e" stroke-width="1.15"/><path d="M995.5,557.5 C993,551 990,548 984,547.5 L960.5,546.2" fill="none" stroke="#2e2e2e" stroke-width="1.15"/><path d="M1047,561.5 C1052,553 1060,548 1073,546.2" fill="none" stroke="#2e2e2e" stroke-width="1.15"/><path d="M964.2,585.6 L939,575.6" fill="none" stroke="#2e2e2e" stroke-width="1.15"/><path d="M1068.4,583.4 L1094,571.3" fill="none" stroke="#2e2e2e" stroke-width="1.15"/><path d="M958.8,607.9 L931.2,604.8" fill="none" stroke="#2e2e2e" stroke-width="1.15"/><path d="M1073.6,597.6 L1101.3,591.8" fill="none" stroke="#2e2e2e" stroke-width="1.15"/><path d="M959.6,619.2 L932,624.2" fill="none" stroke="#2e2e2e" stroke-width="1.15"/><path d="M1031.4,666.5 C1034,677 1037,686 1042,690.4" fill="none" stroke="#2e2e2e" stroke-width="1.15"/></svg>
<svg style="position:absolute;left:0;top:0" width="1265" height="728" viewBox="0 0 1265 728"><defs><mask id="wm" maskUnits="userSpaceOnUse" x="25" y="78" width="25" height="25"><rect x="25" y="78" width="25" height="25" fill="#fff"/><circle cx="40.7" cy="87.1" r="1.7" fill="#000"/><path d="M40.6,85.9 L45,84.2 L45,88.6 L40.6,88.5 Z" fill="#000"/></mask></defs><g mask="url(#wm)"><circle cx="39.5" cy="87.6" r="3.5" fill="#3a3a3a"/><line x1="32.2" y1="94.9" x2="38.0" y2="89.4" stroke="#3a3a3a" stroke-width="2.6" stroke-linecap="round"/></g><circle cx="33.4" cy="93.7" r="0.4" fill="#999"/><circle cx="34.9" cy="92.3" r="0.4" fill="#999"/><rect x="315.6" y="86.8" width="11.6" height="9.4" rx="1.2" fill="none" stroke="#ffe9c8" stroke-width="1.2"/><circle cx="318.3" cy="89.4" r="1.1" fill="#fff3d0"/><path d="M317.0,94.9 L319.8,92.3 L321.2,93.4 L323.6,89.8 L326.0,92.8 L326.0,94.9 Z" fill="#fff5e0"/><path d="M456.5,85.0 L456.5,95.6 L470.5,95.6" fill="none" stroke="#333" stroke-width="1.25"/><rect x="458.40" y="90.30" width="1.4" height="3.60" rx="0.7" fill="#2e2e2e"/><rect x="461.30" y="86.80" width="1.4" height="7.10" rx="0.7" fill="#2e2e2e"/><rect x="464.20" y="88.70" width="1.4" height="5.20" rx="0.7" fill="#2e2e2e"/><rect x="467.10" y="85.80" width="1.4" height="8.10" rx="0.7" fill="#2e2e2e"/><path d="M30.5,469.2 L30.5,479.8 L44.5,479.8" fill="none" stroke="#333" stroke-width="1.25"/><rect x="32.40" y="474.50" width="1.4" height="3.60" rx="0.7" fill="#2e2e2e"/><rect x="35.30" y="471.00" width="1.4" height="7.10" rx="0.7" fill="#2e2e2e"/><rect x="38.20" y="472.90" width="1.4" height="5.20" rx="0.7" fill="#2e2e2e"/><rect x="41.10" y="470.00" width="1.4" height="8.10" rx="0.7" fill="#2e2e2e"/><path d="M736.2,86.2 L742.8,86.2 L745.9,89.3 L745.9,96.9 L736.2,96.9 Z" fill="#fff4dc"/><path d="M742.6,86.2 L742.6,89.5 L745.9,89.5" fill="none" stroke="#e58a20" stroke-width="0.6"/><line x1="738.6" y1="91.0" x2="743.4" y2="91.0" stroke="#c8802a" stroke-width="0.8"/><line x1="738.6" y1="92.6" x2="743.4" y2="92.6" stroke="#c8802a" stroke-width="0.8"/><line x1="738.6" y1="94.2" x2="743.4" y2="94.2" stroke="#c8802a" stroke-width="0.8"/><rect x="793.0" y="86.6" width="10.0" height="8.6" rx="1" fill="#2c2c2c"/><rect x="794.2" y="89.0" width="2.3" height="2.1" fill="#f2f2f2"/><rect x="794.2" y="92.1" width="2.3" height="2.1" fill="#f2f2f2"/><rect x="797.4" y="89.0" width="2.3" height="2.1" fill="#f2f2f2"/><rect x="797.4" y="92.1" width="2.3" height="2.1" fill="#f2f2f2"/><rect x="800.6" y="89.0" width="2.3" height="2.1" fill="#f2f2f2"/><rect x="800.6" y="92.1" width="2.3" height="2.1" fill="#f2f2f2"/><path d="M884.5,95.6 C883.2,93.0 880.9,90.9 880.9,88.2 A3.6,3.6 0 0 1 888.1,88.2 C888.1,90.9 885.8,93.0 884.5,95.6 Z" fill="#333"/><circle cx="884.5" cy="88.2" r="1.4" fill="#f1f1f1"/><circle cx="780.0" cy="474.2" r="4.4" fill="none" stroke="#333" stroke-width="1.4"/><path d="M780,469.8 A4.4,4.4 0 0 1 780,478.6 Z" fill="#333"/><path d="M697.0,87.0 L697.0,96.4 L699.3,94.3 L700.8,98.7 L702.8,98.0 L701.2,93.8 L704.2,93.7 Z" fill="#0c0c0c" stroke="#fff" stroke-width="0.5" stroke-linejoin="round"/><circle cx="1272.4" cy="695.6" r="17.5" fill="#a2a2a2"/><ellipse cx="1267" cy="699" rx="3" ry="6" fill="#5a5a5a"/></svg>
<span id="t0" class="tx" style="left:18.60px;top:35.31px;font-size:30px;line-height:30px;font-weight:400;color:#222;letter-spacing:0.000px;">Atap Workshop TD</span>
<span id="t1" class="tx" style="left:278.92px;top:43.67px;font-size:20px;line-height:20px;font-weight:400;color:#858585;letter-spacing:0.000px;transform:scaleX(0.9605);transform-origin:0 0;">Workshop TD, Jalan H. M. Tohir, Cimanggis</span>
<span id="t2" class="tx" style="left:49.22px;top:83.40px;font-size:13px;line-height:13px;font-weight:400;color:#404040;letter-spacing:0.000px;transform:scaleX(0.9792);transform-origin:0 0;-webkit-text-stroke:0.25px currentColor;">Report</span>
<span id="t3" class="tx" style="left:335.35px;top:84.92px;font-size:12.5px;line-height:12.5px;font-weight:400;color:#fff6e6;letter-spacing:0.000px;transform:scaleX(0.9392);transform-origin:0 0;-webkit-text-stroke:0.25px currentColor;">Update Logo</span>
<span id="t4" class="tx" style="left:26.50px;top:116.31px;font-size:10.5px;line-height:10.5px;font-weight:700;color:#333;letter-spacing:0.000px;transform:scaleX(0.9474);transform-origin:0 0;">Project Name</span>
<span id="t5" class="tx" style="left:26.71px;top:145.41px;font-size:10.5px;line-height:10.5px;font-weight:700;color:#333;letter-spacing:0.000px;transform:scaleX(0.9079);transform-origin:0 0;">Project Address</span>
<span id="t6" class="tx" style="left:26.71px;top:181.11px;font-size:10.5px;line-height:10.5px;font-weight:700;color:#333;letter-spacing:0.000px;transform:scaleX(0.9273);transform-origin:0 0;">Prepared By</span>
<span id="t7" class="tx" style="left:160.47px;top:116.93px;font-size:10.6px;line-height:10.6px;font-weight:400;color:#333;letter-spacing:0.000px;transform:scaleX(1.0295);transform-origin:0 0;-webkit-text-stroke:0.25px currentColor;">Workshop TD</span>
<span id="t8" class="tx" style="left:160.48px;top:145.73px;font-size:10.6px;line-height:10.6px;font-weight:400;color:#333;letter-spacing:0.000px;transform:scaleX(1.0068);transform-origin:0 0;-webkit-text-stroke:0.25px currentColor;">Jalan H. M. Tohir, Cimanggis</span>
<span id="t9" class="tx" style="left:160.68px;top:174.33px;font-size:10.6px;line-height:10.6px;font-weight:400;color:#333;letter-spacing:0.000px;transform:scaleX(0.9957);transform-origin:0 0;-webkit-text-stroke:0.25px currentColor;">Sandy Prayogo</span>
<span id="t10" class="tx" style="left:160.68px;top:189.13px;font-size:10.6px;line-height:10.6px;font-weight:400;color:#333;letter-spacing:0.000px;transform:scaleX(1.0175);transform-origin:0 0;-webkit-text-stroke:0.25px currentColor;">sandy_sr@staff.gunadarma.ac.id</span>
<span id="t11" class="tx" style="left:476.83px;top:83.40px;font-size:13px;line-height:13px;font-weight:400;color:#404040;letter-spacing:0.000px;transform:scaleX(0.9601);transform-origin:0 0;-webkit-text-stroke:0.25px currentColor;">System Metrics</span>
<span id="t12" class="tx" style="left:749.66px;top:84.92px;font-size:12.5px;line-height:12.5px;font-weight:400;color:#fff6e6;letter-spacing:0.000px;transform:scaleX(0.8958);transform-origin:0 0;-webkit-text-stroke:0.25px currentColor;">PDF</span>
<span id="t13" class="tx" style="left:807.69px;top:84.92px;font-size:12.5px;line-height:12.5px;font-weight:400;color:#333;letter-spacing:0.000px;transform:scaleX(0.8299);transform-origin:0 0;-webkit-text-stroke:0.25px currentColor;">CSV</span>
<span id="t14" class="tx" style="left:451.72px;top:117.21px;font-size:10.5px;line-height:10.5px;font-weight:700;color:#333;letter-spacing:0.000px;transform:scaleX(0.8924);transform-origin:0 0;">Design</span>
<span id="t15" class="tx" style="left:451.70px;top:145.71px;font-size:10.5px;line-height:10.5px;font-weight:700;color:#333;letter-spacing:0.000px;transform:scaleX(0.9471);transform-origin:0 0;">Module DC Nameplate</span>
<span id="t16" class="tx" style="left:451.70px;top:181.21px;font-size:10.5px;line-height:10.5px;font-weight:700;color:#333;letter-spacing:0.000px;transform:scaleX(0.9507);transform-origin:0 0;">Inverter AC Nameplate</span>
<span id="t17" class="tx" style="left:451.71px;top:217.21px;font-size:10.5px;line-height:10.5px;font-weight:700;color:#333;letter-spacing:0.000px;transform:scaleX(0.9271);transform-origin:0 0;">Annual Production</span>
<span id="t18" class="tx" style="left:451.71px;top:246.21px;font-size:10.5px;line-height:10.5px;font-weight:700;color:#333;letter-spacing:0.000px;transform:scaleX(0.9359);transform-origin:0 0;">Performance Ratio</span>
<span id="t19" class="tx" style="left:451.70px;top:274.71px;font-size:10.5px;line-height:10.5px;font-weight:700;color:#333;letter-spacing:0.000px;transform:scaleX(0.9567);transform-origin:0 0;">kWh/kWp</span>
<span id="t20" class="tx" style="left:451.70px;top:303.21px;font-size:10.5px;line-height:10.5px;font-weight:700;color:#333;letter-spacing:0.000px;transform:scaleX(0.9636);transform-origin:0 0;">Weather Dataset</span>
<span id="t21" class="tx" style="left:451.71px;top:331.71px;font-size:10.5px;line-height:10.5px;font-weight:700;color:#333;letter-spacing:0.000px;transform:scaleX(0.9340);transform-origin:0 0;">Simulator Version</span>
<span id="t22" class="tx" style="left:451.71px;top:366.21px;font-size:10.5px;line-height:10.5px;font-weight:700;color:#333;letter-spacing:0.000px;transform:scaleX(0.9255);transform-origin:0 0;">Shade Report</span>
<span id="t23" class="tx" style="left:579.07px;top:117.53px;font-size:10.6px;line-height:10.6px;font-weight:400;color:#333;letter-spacing:0.000px;transform:scaleX(1.0231);transform-origin:0 0;-webkit-text-stroke:0.25px currentColor;">Atap Workshop TD</span>
<span id="t24" class="tx" style="left:579.08px;top:146.03px;font-size:10.6px;line-height:10.6px;font-weight:400;color:#333;letter-spacing:0.000px;transform:scaleX(1.0050);transform-origin:0 0;-webkit-text-stroke:0.25px currentColor;">2.75 kW</span>
<span id="t25" class="tx" style="left:579.08px;top:217.53px;font-size:10.6px;line-height:10.6px;font-weight:400;color:#333;letter-spacing:0.000px;transform:scaleX(1.0164);transform-origin:0 0;-webkit-text-stroke:0.25px currentColor;">3.419 MWh</span>
<span id="t26" class="tx" style="left:579.09px;top:246.53px;font-size:10.6px;line-height:10.6px;font-weight:400;color:#333;letter-spacing:0.000px;transform:scaleX(0.9898);transform-origin:0 0;-webkit-text-stroke:0.25px currentColor;">72.5%</span>
<span id="t27" class="tx" style="left:579.08px;top:275.03px;font-size:10.6px;line-height:10.6px;font-weight:400;color:#333;letter-spacing:0.000px;transform:scaleX(1.0113);transform-origin:0 0;-webkit-text-stroke:0.25px currentColor;">1,243.2</span>
<span id="t28" class="tx" style="left:579.07px;top:303.53px;font-size:10.6px;line-height:10.6px;font-weight:400;color:#333;letter-spacing:0.000px;transform:scaleX(1.0355);transform-origin:0 0;-webkit-text-stroke:0.25px currentColor;">TMY, 10km Grid, Meteonorm 8 (meteonorm_v8)</span>
<span id="t29" class="tx" style="left:579.08px;top:332.03px;font-size:10.6px;line-height:10.6px;font-weight:400;color:#333;letter-spacing:0.000px;transform:scaleX(1.0125);transform-origin:0 0;-webkit-text-stroke:0.25px currentColor;">18a2303a5d-ecbcd5a2f0-6296cabee1-caa91e954b</span>
<span id="t30" class="tx" style="left:579.08px;top:174.33px;font-size:10.6px;line-height:10.6px;font-weight:400;color:#333;letter-spacing:0.000px;transform:scaleX(1.0129);transform-origin:0 0;-webkit-text-stroke:0.25px currentColor;">3.00 kW</span>
<span id="t31" class="tx" style="left:579.08px;top:189.13px;font-size:10.6px;line-height:10.6px;font-weight:400;color:#333;letter-spacing:0.000px;transform:scaleX(1.0026);transform-origin:0 0;-webkit-text-stroke:0.25px currentColor;">Load Ratio: 0.92</span>
<span id="t32" class="tx" style="left:658.65px;top:364.92px;font-size:12.5px;line-height:12.5px;font-weight:400;color:#eaf6fb;letter-spacing:0.000px;transform:scaleX(0.9297);transform-origin:0 0;-webkit-text-stroke:0.25px currentColor;">View Shade Report</span>
<span id="t33" class="tx" style="left:895.32px;top:83.40px;font-size:13px;line-height:13px;font-weight:400;color:#404040;letter-spacing:0.000px;transform:scaleX(0.9686);transform-origin:0 0;-webkit-text-stroke:0.25px currentColor;">Project Location</span>
<span id="t34" class="tx" style="left:51.91px;top:467.80px;font-size:13px;line-height:13px;font-weight:400;color:#404040;letter-spacing:0.000px;-webkit-text-stroke:0.25px currentColor;">Monthly Production</span>
<span id="t35" class="tx" style="left:792.34px;top:467.80px;font-size:13px;line-height:13px;font-weight:400;color:#404040;letter-spacing:0.000px;transform:scaleX(0.9329);transform-origin:0 0;-webkit-text-stroke:0.25px currentColor;">Sources of System Loss</span>
<span id="t36" class="tx" style="left:76.20px;top:514.16px;font-size:9.5px;line-height:9.5px;font-weight:400;color:#555;letter-spacing:0.000px;-webkit-text-stroke:0.25px currentColor;transform:translateX(-100%);">400</span>
<span id="t37" class="tx" style="left:76.20px;top:555.36px;font-size:9.5px;line-height:9.5px;font-weight:400;color:#555;letter-spacing:0.000px;-webkit-text-stroke:0.25px currentColor;transform:translateX(-100%);">300</span>
<span id="t38" class="tx" style="left:76.20px;top:596.46px;font-size:9.5px;line-height:9.5px;font-weight:400;color:#555;letter-spacing:0.000px;-webkit-text-stroke:0.25px currentColor;transform:translateX(-100%);">200</span>
<span id="t39" class="tx" style="left:76.20px;top:637.36px;font-size:9.5px;line-height:9.5px;font-weight:400;color:#555;letter-spacing:0.000px;-webkit-text-stroke:0.25px currentColor;transform:translateX(-100%);">100</span>
<span id="t40" class="tx" style="left:76.20px;top:678.86px;font-size:9.5px;line-height:9.5px;font-weight:400;color:#555;letter-spacing:0.000px;-webkit-text-stroke:0.25px currentColor;transform:translateX(-100%);">0</span>
<span id="t41" class="tx" style="left:114.29px;top:689.96px;font-size:9.5px;line-height:9.5px;font-weight:400;color:#555;letter-spacing:0.000px;-webkit-text-stroke:0.25px currentColor;transform:translateX(-50%);">Jan</span>
<span id="t42" class="tx" style="left:166.88px;top:689.96px;font-size:9.5px;line-height:9.5px;font-weight:400;color:#555;letter-spacing:0.000px;-webkit-text-stroke:0.25px currentColor;transform:translateX(-50%);">Feb</span>
<span id="t43" class="tx" style="left:219.46px;top:689.96px;font-size:9.5px;line-height:9.5px;font-weight:400;color:#555;letter-spacing:0.000px;-webkit-text-stroke:0.25px currentColor;transform:translateX(-50%);">Mar</span>
<span id="t44" class="tx" style="left:272.04px;top:689.96px;font-size:9.5px;line-height:9.5px;font-weight:400;color:#555;letter-spacing:0.000px;-webkit-text-stroke:0.25px currentColor;transform:translateX(-50%);">Apr</span>
<span id="t45" class="tx" style="left:324.62px;top:689.96px;font-size:9.5px;line-height:9.5px;font-weight:400;color:#555;letter-spacing:0.000px;-webkit-text-stroke:0.25px currentColor;transform:translateX(-50%);">May</span>
<span id="t46" class="tx" style="left:377.21px;top:689.96px;font-size:9.5px;line-height:9.5px;font-weight:400;color:#555;letter-spacing:0.000px;-webkit-text-stroke:0.25px currentColor;transform:translateX(-50%);">Jun</span>
<span id="t47" class="tx" style="left:429.79px;top:689.96px;font-size:9.5px;line-height:9.5px;font-weight:400;color:#555;letter-spacing:0.000px;-webkit-text-stroke:0.25px currentColor;transform:translateX(-50%);">Jul</span>
<span id="t48" class="tx" style="left:482.38px;top:689.96px;font-size:9.5px;line-height:9.5px;font-weight:400;color:#555;letter-spacing:0.000px;-webkit-text-stroke:0.25px currentColor;transform:translateX(-50%);">Aug</span>
<span id="t49" class="tx" style="left:534.96px;top:689.96px;font-size:9.5px;line-height:9.5px;font-weight:400;color:#555;letter-spacing:0.000px;-webkit-text-stroke:0.25px currentColor;transform:translateX(-50%);">Sep</span>
<span id="t50" class="tx" style="left:587.54px;top:689.96px;font-size:9.5px;line-height:9.5px;font-weight:400;color:#555;letter-spacing:0.000px;-webkit-text-stroke:0.25px currentColor;transform:translateX(-50%);">Oct</span>
<span id="t51" class="tx" style="left:640.12px;top:689.96px;font-size:9.5px;line-height:9.5px;font-weight:400;color:#555;letter-spacing:0.000px;-webkit-text-stroke:0.25px currentColor;transform:translateX(-50%);">Nov</span>
<span id="t52" class="tx" style="left:692.71px;top:689.96px;font-size:9.5px;line-height:9.5px;font-weight:400;color:#555;letter-spacing:0.000px;-webkit-text-stroke:0.25px currentColor;transform:translateX(-50%);">Dec</span>
<span id="t53" class="tx" style="left:48.6px;top:600.5px;font-size:9.5px;line-height:9.5px;color:#555;-webkit-text-stroke:0.25px currentColor;transform:translate(-50%,-50%) rotate(-90deg)">kWh</span>
<span id="t54" class="tx" style="left:352.17px;top:714.77px;font-size:11.5px;line-height:11.5px;font-weight:400;color:#4a7fb0;letter-spacing:0.000px;transform:scaleX(0.9467);transform-origin:0 0;-webkit-text-stroke:0.25px currentColor;">Show table</span>
<span id="t55" class="tx" style="left:930.73px;top:525.03px;font-size:10px;line-height:10px;font-weight:700;color:#1e1e1e;letter-spacing:0.000px;transform:scaleX(0.9085);transform-origin:0 0;">AC System: 0.0%</span>
<span id="t56" class="tx" style="left:1038.03px;top:525.03px;font-size:10px;line-height:10px;font-weight:700;color:#1e1e1e;letter-spacing:0.000px;transform:scaleX(0.9133);transform-origin:0 0;">Shading: 1.1%</span>
<span id="t57" class="tx" style="left:886.42px;top:543.53px;font-size:10px;line-height:10px;font-weight:700;color:#1e1e1e;letter-spacing:0.000px;transform:scaleX(0.9480);transform-origin:0 0;">Inverters: 3.8%</span>
<span id="t58" class="tx" style="left:1081.02px;top:543.53px;font-size:10px;line-height:10px;font-weight:700;color:#1e1e1e;letter-spacing:0.000px;transform:scaleX(0.9209);transform-origin:0 0;">Reflection: 3.2%</span>
<span id="t59" class="tx" style="left:866.32px;top:572.74px;font-size:10px;line-height:10px;font-weight:700;color:#1e1e1e;letter-spacing:0.000px;transform:scaleX(0.9382);transform-origin:0 0;">Clipping: 3.5%</span>
<span id="t60" class="tx" style="left:1101.72px;top:568.83px;font-size:10px;line-height:10px;font-weight:700;color:#1e1e1e;letter-spacing:0.000px;transform:scaleX(0.9213);transform-origin:0 0;">Soiling: 2.0%</span>
<span id="t61" class="tx" style="left:1109.32px;top:589.03px;font-size:10px;line-height:10px;font-weight:700;color:#1e1e1e;letter-spacing:0.000px;transform:scaleX(0.9405);transform-origin:0 0;">Irradiance: 0.6%</span>
<span id="t62" class="tx" style="left:867.22px;top:602.24px;font-size:10px;line-height:10px;font-weight:700;color:#1e1e1e;letter-spacing:0.000px;transform:scaleX(0.9303);transform-origin:0 0;">Wiring: 0.2%</span>
<span id="t63" class="tx" style="left:854.72px;top:620.83px;font-size:10px;line-height:10px;font-weight:700;color:#1e1e1e;letter-spacing:0.000px;transform:scaleX(0.9268);transform-origin:0 0;">Mismatch: 1.9%</span>
<span id="t64" class="tx" style="left:1050.71px;top:687.43px;font-size:10px;line-height:10px;font-weight:700;color:#1e1e1e;letter-spacing:0.000px;transform:scaleX(0.9605);transform-origin:0 0;">Temperature: 14.5%</span>
</body></html>
